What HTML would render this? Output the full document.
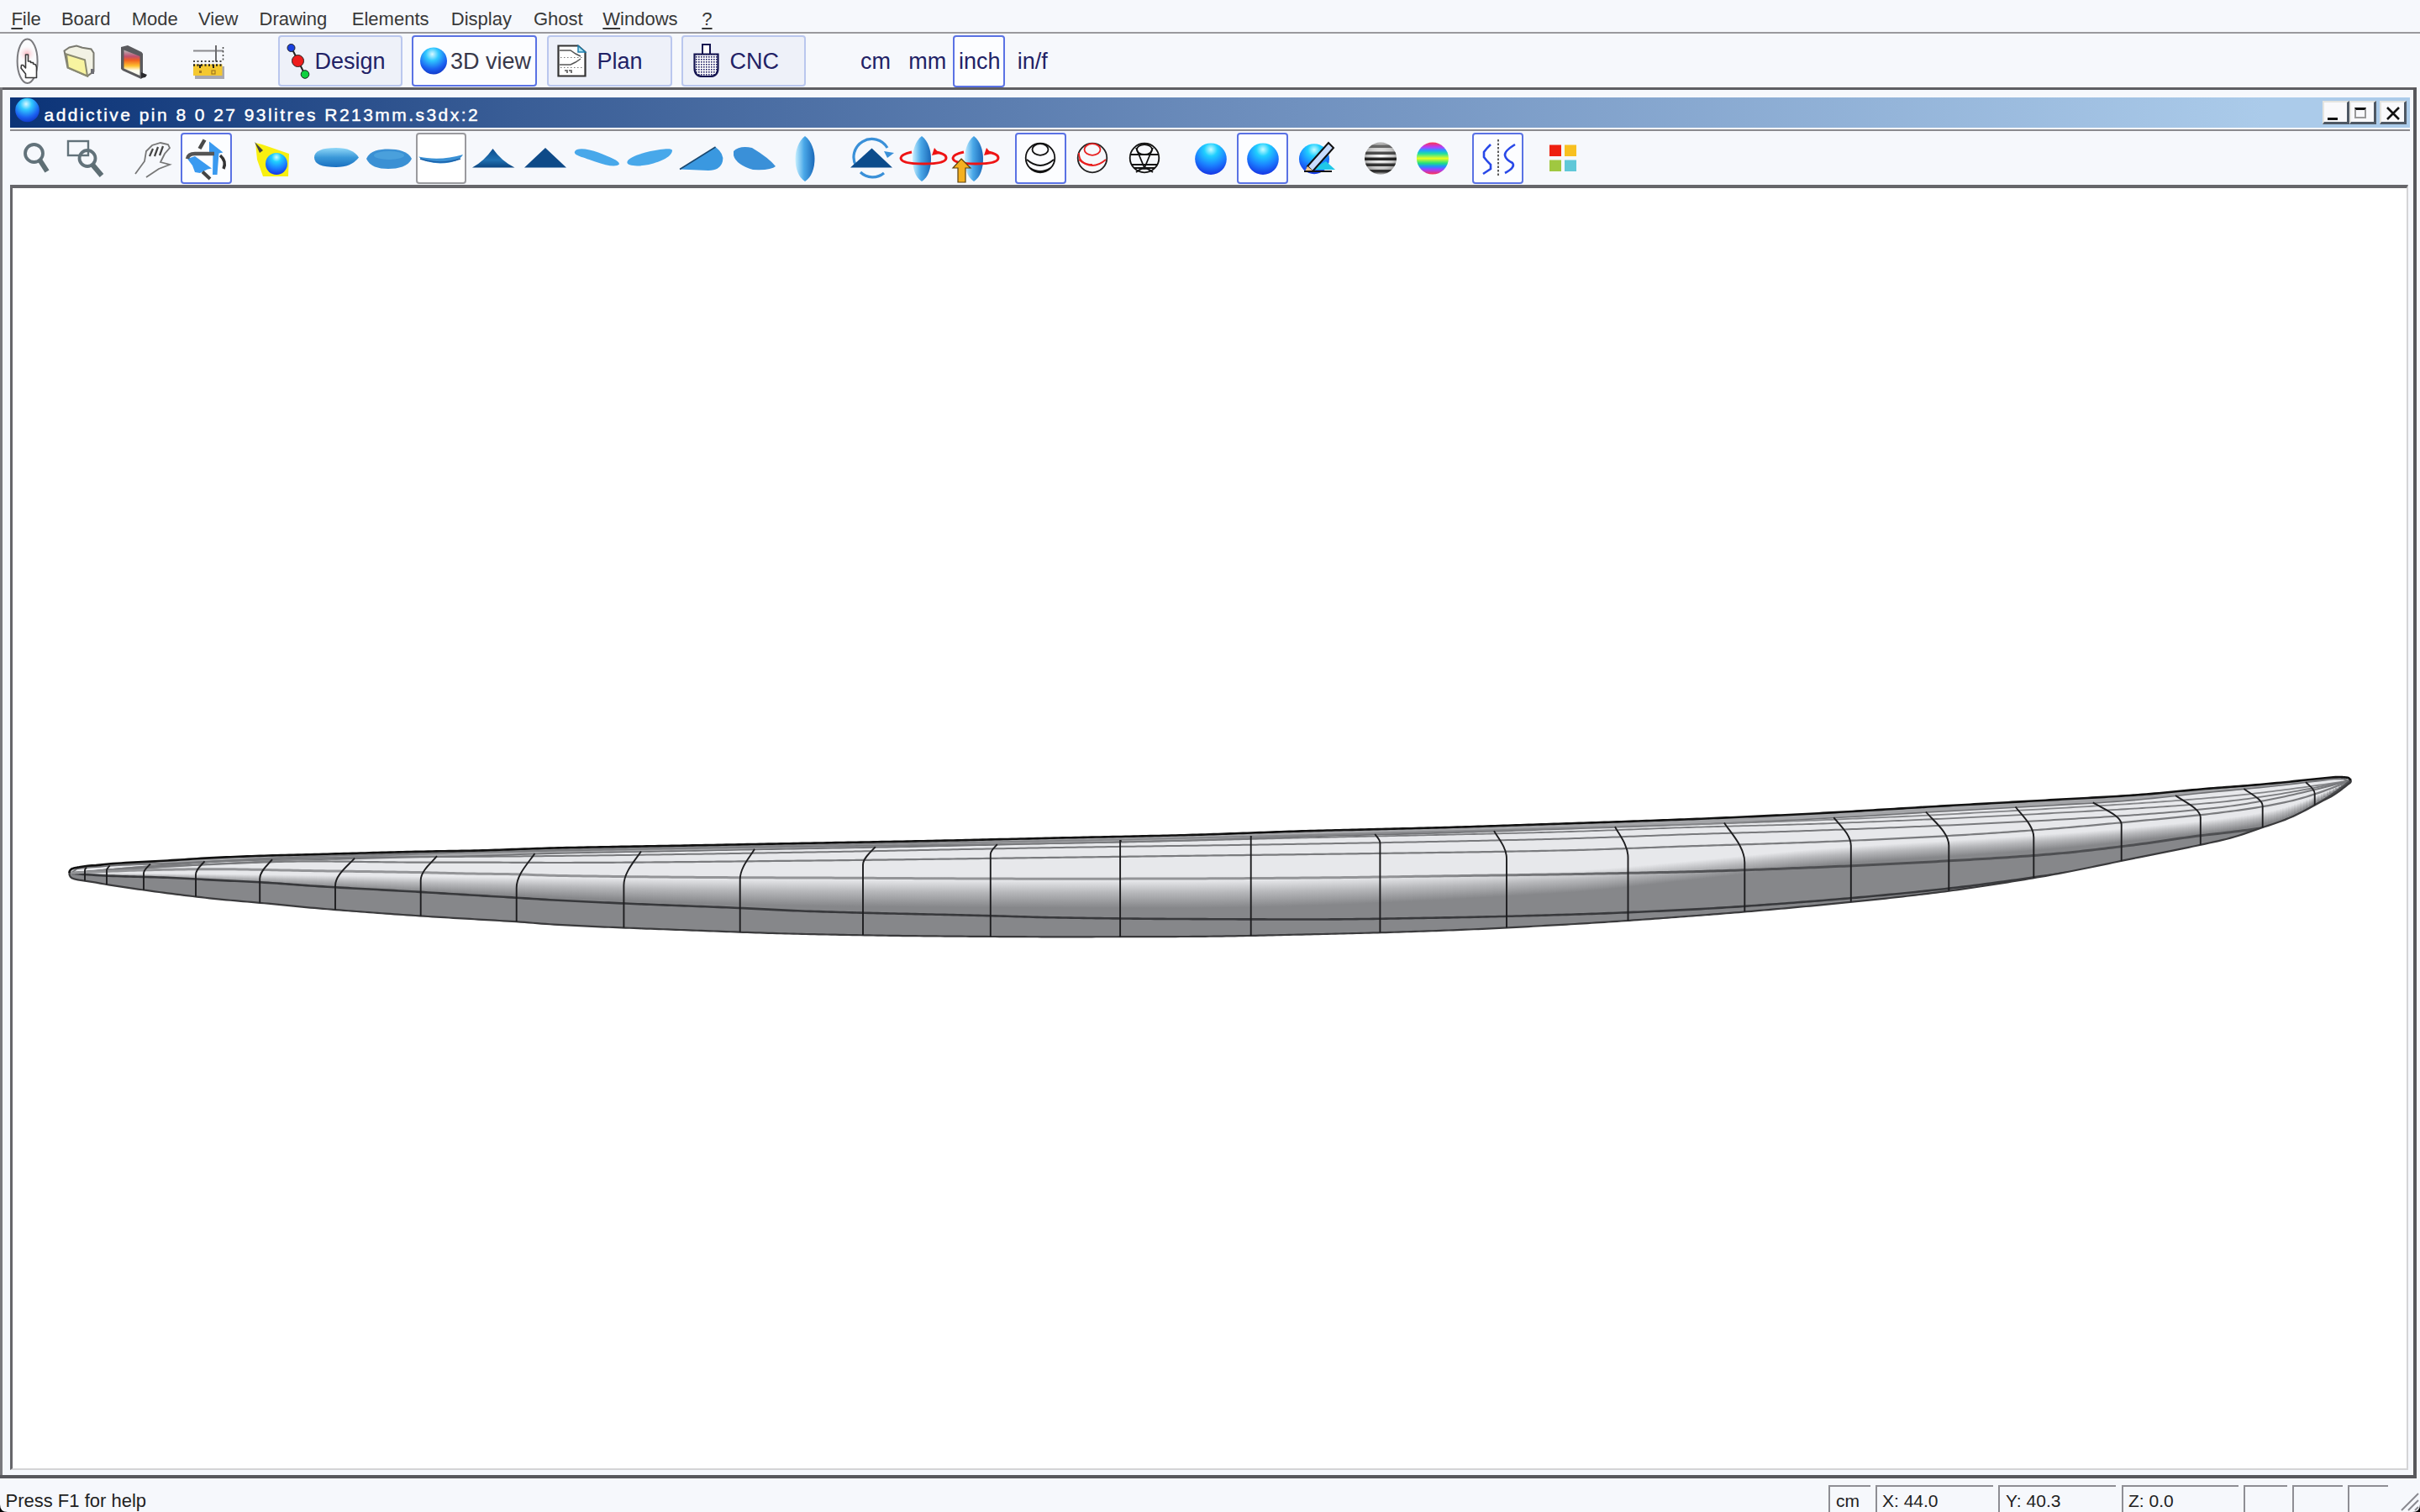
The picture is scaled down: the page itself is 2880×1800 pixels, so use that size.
<!DOCTYPE html>
<html><head><meta charset="utf-8">
<style>
html,body{margin:0;padding:0;}
body{width:2880px;height:1800px;overflow:hidden;position:relative;background:#f6f8fc;font-family:"Liberation Sans",sans-serif;}
.t{position:absolute;white-space:nowrap;}
.abs{position:absolute;}
svg.ic{position:absolute;overflow:visible;}
.menu u{text-decoration:underline;text-underline-offset:3px;text-decoration-thickness:2px;}
.tbtn{position:absolute;top:42px;height:61px;box-sizing:border-box;border:2px solid #bac7ee;border-radius:4px;background:#eef1f9;}
.tbtn.sel{border-color:#5a72e4;background:#fcfdff;}
.ibox{position:absolute;box-sizing:border-box;border:2px solid #5a72e4;border-radius:4px;background:#fcfdff;top:158px;height:61px;width:61px;}
.ibox.gray{border-color:#9a9a9e;background:#fff;}
.wbtn{position:absolute;top:120px;width:32px;height:28px;box-sizing:border-box;background:#f9f9fb;border-top:2px solid #e4e4e0;border-left:2px solid #e4e4e0;border-right:3px solid #4e5864;border-bottom:3px solid #4e5864;}
.cell{position:absolute;top:1768px;height:40px;box-sizing:border-box;border-top:2px solid #8e8e94;border-left:2px solid #8e8e94;}
.board{position:absolute;left:0;top:0;}
</style></head>
<body>
<div class="t menu" style="left:13.4px;top:12.0px;font-size:22px;line-height:22px;color:#383838;"><u>F</u>ile</div>
<div class="t menu" style="left:72.9px;top:12.0px;font-size:22px;line-height:22px;color:#383838;">Board</div>
<div class="t menu" style="left:156.8px;top:12.0px;font-size:22px;line-height:22px;color:#383838;">Mode</div>
<div class="t menu" style="left:236.0px;top:12.0px;font-size:22px;line-height:22px;color:#383838;">View</div>
<div class="t menu" style="left:308.5px;top:12.0px;font-size:22px;line-height:22px;color:#383838;">Drawing</div>
<div class="t menu" style="left:418.8px;top:12.0px;font-size:22px;line-height:22px;color:#383838;">Elements</div>
<div class="t menu" style="left:536.8px;top:12.0px;font-size:22px;line-height:22px;color:#383838;">Display</div>
<div class="t menu" style="left:635.0px;top:12.0px;font-size:22px;line-height:22px;color:#383838;">Ghost</div>
<div class="t menu" style="left:717.3px;top:12.0px;font-size:22px;line-height:22px;color:#383838;"><u>W</u>indows</div>
<div class="t menu" style="left:835.3px;top:12.0px;font-size:22px;line-height:22px;color:#383838;"><u>?</u></div>

<div class="abs" style="left:0;top:38px;width:2880px;height:2px;background:#9a9a9e"></div>

<!-- top toolbar icons -->
<svg class="ic" style="left:0;top:0" width="300" height="104" viewBox="0 0 300 104">
  <defs>
    <radialGradient id="pinkglow" cx="0.5" cy="0.5" r="0.5"><stop offset="0" stop-color="#f8b8c0"/><stop offset="1" stop-color="#fbe4e8" stop-opacity="0"/></radialGradient>
    <linearGradient id="flop" x1="0" y1="0" x2="0" y2="1"><stop offset="0" stop-color="#b8b8b8"/><stop offset="0.25" stop-color="#c05070"/><stop offset="0.4" stop-color="#f06020"/><stop offset="0.62" stop-color="#ffc030"/><stop offset="0.8" stop-color="#fffff0"/><stop offset="1" stop-color="#f4f4ea"/></linearGradient>
  </defs>
  <ellipse cx="32.6" cy="72.7" rx="12" ry="26.2" fill="#fbfbfd" stroke="#7a7a7e" stroke-width="2"/>
  <ellipse cx="32" cy="64" rx="10" ry="9" fill="url(#pinkglow)"/>
  <path d="M30.5,65 L33.5,65 L33.5,73 L36.5,73 L36.5,74.5 L39.5,74.5 L39.5,76 L42.5,77 L43.5,80 L43.5,92.5 L30.5,92.5 L30.5,88 L25,81 L25.5,77.5 L27.5,77.5 L30.5,81 Z" fill="#fff" stroke="#3a3a3a" stroke-width="1.6" stroke-linejoin="round"/>
  <path d="M76.5,60.5 L82.5,56.5 L91,54.5 L98,56.8 L108.5,58.5 L111.5,63 L111.5,85 L104,90.5 L80.5,80.5 Z" fill="#f2f2e4" stroke="#7a7a70" stroke-width="2"/>
  <path d="M79,64.5 L101,71.3 L104,90.5 L81,80.5 Z" fill="#f8f4a0" stroke="#8a8a70" stroke-width="2"/>
  <rect x="108" y="82" width="4" height="6" fill="#6e6e74"/>
  <path d="M144,56 L152,54 L168.5,62 L170,64 L170,92 L168,94 L146,84 L144,82 Z" fill="#5a5a5e"/>
  <path d="M147.5,59.5 L166.5,67 L166.5,90 L147.5,81.5 Z" fill="url(#flop)"/>
  <path d="M168,86 L175,89 L173,92 L168,93 Z" fill="#2a2a2e"/>
  <line x1="230" y1="60.5" x2="266" y2="60.5" stroke="#8a8a8e" stroke-width="2"/>
  <line x1="257" y1="54" x2="257" y2="73.5" stroke="#6a6a6e" stroke-width="2"/>
  <line x1="230" y1="73" x2="266" y2="73" stroke="#444" stroke-width="2" stroke-dasharray="2 2.5"/>
  <line x1="265.5" y1="56" x2="265.5" y2="73" stroke="#444" stroke-width="1.5" stroke-dasharray="2 2.5"/>
  <rect x="232" y="79" width="35" height="15" fill="#a8a8b0"/>
  <rect x="230" y="76.5" width="34.5" height="13.5" fill="#f4c830"/>
  <line x1="230" y1="77.5" x2="265" y2="77.5" stroke="#222" stroke-width="2.5" stroke-dasharray="2 2.5"/>
  <line x1="238" y1="77" x2="238" y2="81" stroke="#222" stroke-width="2"/><line x1="254" y1="77" x2="254" y2="81" stroke="#222" stroke-width="2"/>
  <rect x="237" y="84" width="3" height="3" fill="#a07820"/><rect x="252" y="84" width="4" height="4" fill="none" stroke="#a07820" stroke-width="1.2"/>
</svg>
<!-- mode buttons -->
<div class="tbtn" style="left:331px;width:148px"></div>
<div class="tbtn sel" style="left:490px;width:149px"></div>
<div class="tbtn" style="left:651px;width:149px"></div>
<div class="tbtn" style="left:811px;width:148px"></div>
<svg class="ic" style="left:338px;top:48px" width="34" height="50" viewBox="0 0 34 50">
  <line x1="9" y1="9" x2="25" y2="41" stroke="#222" stroke-width="2"/>
  <circle cx="8.5" cy="9" r="4.5" fill="#1a40e0" stroke="#222" stroke-width="1"/>
  <circle cx="16.5" cy="24.5" r="7" fill="#ee1c1c" stroke="#222" stroke-width="1"/>
  <circle cx="25" cy="40.5" r="4.8" fill="#10d040" stroke="#222" stroke-width="1"/>
</svg>
<svg class="ic" style="left:499px;top:56px" width="34" height="34" viewBox="0 0 34 34">
  <defs><radialGradient id="sph" cx="0.45" cy="0.25" r="0.8"><stop offset="0" stop-color="#d8f8ff"/><stop offset="0.3" stop-color="#30c8ff"/><stop offset="0.7" stop-color="#1a60f0"/><stop offset="1" stop-color="#1030c0"/></radialGradient></defs>
  <circle cx="17" cy="16.5" r="16" fill="url(#sph)"/>
</svg>
<svg class="ic" style="left:663px;top:53px" width="36" height="40" viewBox="0 0 36 40">
  <path d="M1.5,1.5 L25,1.5 L33.5,9 L33.5,37.5 L1.5,37.5 Z" fill="#fff" stroke="#333" stroke-width="2.2"/>
  <path d="M25,1.5 L33.5,9 L25,9 Z" fill="#a8e0f0" stroke="#2080b0" stroke-width="1.5"/>
  <path d="M3,7 L16,7 L22,11 L28,14 M3,24 L16,24 L22,21 L28,17" stroke="#555" stroke-width="1.5" fill="none"/>
  <path d="M4,15.5 L30,15.5 M4,27.5 L30,27.5" stroke="#777" stroke-width="1.2" stroke-dasharray="1.5 2.5" fill="none"/>
  <path d="M9,31 L12,31 L12,34 M14,31 L17,31 L17,34" stroke="#555" stroke-width="1.6" fill="none"/>
</svg>
<svg class="ic" style="left:825px;top:52px" width="32" height="41" viewBox="0 0 32 41">
  <defs><pattern id="dots" width="3" height="3" patternUnits="userSpaceOnUse"><rect width="3" height="3" fill="#fff"/><rect width="1.6" height="1.6" fill="#222266"/></pattern></defs>
  <rect x="11" y="1" width="9" height="12" fill="#fff" stroke="#141450" stroke-width="2"/>
  <path d="M1.5,12.5 L29.5,12.5 L29.5,29 Q29.5,39 20,39 L11,39 Q1.5,39 1.5,29 Z" fill="url(#dots)" stroke="#141450" stroke-width="2.2"/>
</svg>
<div class="t" style="left:374.5px;top:59.6px;font-size:27px;line-height:27px;color:#222266">Design</div>
<div class="t" style="left:536px;top:59.6px;font-size:27px;line-height:27px;color:#38384a">3D view</div>
<div class="t" style="left:710.5px;top:59.6px;font-size:27px;line-height:27px;color:#222266">Plan</div>
<div class="t" style="left:868.5px;top:59.6px;font-size:27px;line-height:27px;color:#222266">CNC</div>
<!-- units -->
<div class="abs" style="left:1134px;top:42px;width:62px;height:62px;box-sizing:border-box;border:2px solid #5a72e4;border-radius:4px;background:#fcfdff"></div>
<div class="t" style="left:1024px;top:59.6px;font-size:27px;line-height:27px;color:#222266">cm</div>
<div class="t" style="left:1081.3px;top:59.6px;font-size:27px;line-height:27px;color:#222266">mm</div>
<div class="t" style="left:1141px;top:59.6px;font-size:27px;line-height:27px;color:#222266">inch</div>
<div class="t" style="left:1210.8px;top:59.6px;font-size:27px;line-height:27px;color:#222266">in/f</div>

<div class="abs" style="left:0;top:104px;width:2876px;height:3px;background:#5e5e62"></div>

<!-- MDI frame -->
<div class="abs" style="left:0;top:104px;width:3px;height:1656px;background:#7a7a7e"></div>
<div class="abs" style="left:2872px;top:104px;width:4px;height:1656px;background:#58585c"></div>
<div class="abs" style="left:0;top:1756px;width:2876px;height:4px;background:#58585c"></div>
<!-- title bar -->
<div class="abs" style="left:12px;top:116px;width:2856px;height:36px;background:linear-gradient(to right,#0b3377 0%,#395d96 21%,#6c8dbc 51%,#abcbea 94%,#abcbea 100%)"></div>
<svg class="ic" style="left:17px;top:116px" width="32" height="32" viewBox="0 0 32 32">
  <circle cx="15.5" cy="15" r="14.3" fill="url(#sph)"/>
</svg>
<div class="t" id="title" style="left:52.5px;top:125.7px;font-size:21px;line-height:21px;color:#fff;-webkit-text-stroke:0.45px #fff;letter-spacing:2.45px">addictive pin 8 0 27 93litres R213mm.s3dx:2</div>
<div class="wbtn" style="left:2764px"><div class="abs" style="left:4px;top:18px;width:12px;height:3px;background:#111"></div></div>
<div class="wbtn" style="left:2796px"><div class="abs" style="left:4px;top:6px;width:14px;height:13px;box-sizing:border-box;border:2px solid #999;border-top:3px solid #111"></div></div>
<div class="wbtn" style="left:2832px"><svg class="ic" style="left:5px;top:4px" width="18" height="18" viewBox="0 0 18 18"><path d="M2,2 L16,16 M16,2 L2,16" stroke="#111" stroke-width="2.6"/></svg></div>
<div class="abs" style="left:12px;top:154px;width:2856px;height:2px;background:#8a8a8e"></div>

<!-- icon toolbar -->
<div class="ibox" style="left:215px"></div>
<div class="ibox gray" style="left:495px;width:60px"></div>
<div class="ibox" style="left:1208px"></div>
<div class="ibox" style="left:1472px"></div>
<div class="ibox" style="left:1752px"></div>
<svg class="ic" style="left:0;top:0" width="2000" height="230" viewBox="0 0 2000 230">
<defs>
  <radialGradient id="sph2" cx="0.5" cy="0.2" r="0.85"><stop offset="0" stop-color="#c8fcff"/><stop offset="0.25" stop-color="#20d0ff"/><stop offset="0.6" stop-color="#1a80ff"/><stop offset="1" stop-color="#1528e0"/></radialGradient>
  <linearGradient id="lensv" x1="0" y1="0" x2="1" y2="0"><stop offset="0" stop-color="#c8f0ff"/><stop offset="0.45" stop-color="#4aa8e8"/><stop offset="1" stop-color="#1a68b8"/></linearGradient>
  <linearGradient id="lensh" x1="0" y1="0" x2="0" y2="1"><stop offset="0" stop-color="#90d8f8"/><stop offset="0.5" stop-color="#3a98d8"/><stop offset="1" stop-color="#1a70c0"/></linearGradient>
  <linearGradient id="tri" x1="0" y1="0" x2="0" y2="1"><stop offset="0" stop-color="#0c4c8c"/><stop offset="0.6" stop-color="#2070b0"/><stop offset="1" stop-color="#0a4480"/></linearGradient>
  <linearGradient id="rainbow" x1="0" y1="0" x2="0" y2="1"><stop offset="0" stop-color="#ff3050"/><stop offset="0.15" stop-color="#b040ff"/><stop offset="0.25" stop-color="#20a0ff"/><stop offset="0.35" stop-color="#20e0a0"/><stop offset="0.5" stop-color="#e8ff20"/><stop offset="0.65" stop-color="#20e080"/><stop offset="0.75" stop-color="#2090ff"/><stop offset="0.85" stop-color="#a040ff"/><stop offset="1" stop-color="#ff3050"/></linearGradient>
  <clipPath id="cs1"><circle cx="1643" cy="188.6" r="19"/></clipPath><radialGradient id="gsph" cx="0.5" cy="0.45" r="0.55"><stop offset="0" stop-color="#ffffff"/><stop offset="0.6" stop-color="#c8c8c8"/><stop offset="1" stop-color="#707070"/></radialGradient>
</defs>
<!-- magnifier -->
<circle cx="40.5" cy="182.5" r="10.5" fill="none" stroke="#62727a" stroke-width="3.8"/>
<line x1="47" y1="190" x2="56" y2="204" stroke="#5e6e74" stroke-width="6"/>
<!-- zoom rect -->
<rect x="81" y="168" width="24" height="17" fill="none" stroke="#62727a" stroke-width="2.4"/>
<circle cx="104" cy="188.5" r="9.5" fill="none" stroke="#62727a" stroke-width="3.8"/>
<line x1="110" y1="196" x2="121" y2="209" stroke="#5e6e74" stroke-width="6"/>
<!-- hand -->
<path d="M161,207 L172,192 L174,180 L181,173 L191,170 L200,172 L202,176 L196,183 L191,193 L202,196 L189,201 L174,211" fill="none" stroke="#777" stroke-width="1.8"/>
<path d="M182,177 L178,186 M188,175 L184,186 M194,174 L190,185" stroke="#444" stroke-width="2.2"/>
<!-- rotate -->
<path d="M249,168.5 L265.5,181.5 L260.5,182.5 L258.5,208 L253,208 L253.5,183 L249,182.5 Z" fill="#3a9af0"/>
<path d="M223,189 L232,186 L252,200.5 L247,201.5 L238,206 L232,205 L229,197 Z" fill="#3a9af0"/>
<path d="M243.5,166.5 L237.5,177" stroke="#4a4a4a" stroke-width="4.5"/>
<path d="M223,189 Q224,183 232,183 L255,183" fill="none" stroke="#555" stroke-width="4.5"/>
<path d="M262,185 Q270,192 266,201" fill="none" stroke="#333" stroke-width="3.5"/>
<path d="M241,204.5 L250,213" stroke="#444" stroke-width="4"/>
<!-- light -->
<path d="M304,170 L312,172 L344,183 L343,210 L313,210 L306,190 Z" fill="#f8f010"/>
<path d="M303,169 L313,179 L309,182 Z" fill="#444"/>
<circle cx="329" cy="195" r="13" fill="url(#sph2)"/>
<!-- ellipses -->
<path d="M374,187.5 Q374,176 400,176 Q420,176 427,187.5 Q418,199 400,199 Q374,199 374,187.5 Z" fill="url(#lensh)"/>
<path d="M436,189 C440,179 452,177.5 462,177.5 C474,177.5 486,180 490,189 C486,198 474,201 462,201 C450,201 440,198 436,189 Z" fill="#3a90d4"/><ellipse cx="463" cy="185" rx="18" ry="5" fill="#5ab0e4" opacity="0.5"/>
<!-- crescent in gray box -->
<path d="M498,186.5 Q524,192 551,184 Q546,194 524,194.5 Q506,194 498,186.5 Z" fill="#3a90d4"/><path d="M500,189 Q524,197 548,189" fill="none" stroke="#1a60a8" stroke-width="1.5"/>
<!-- triangles -->
<path d="M562,199.5 Q576,192 586.5,177 Q597,192 612.5,199.5 Z" fill="url(#tri)"/>
<path d="M624,199.5 L649,176 L674,199.5 Z" fill="#0e4a88"/>
<!-- tilted ellipses -->
<path d="M684,180.5 C686,175 700,177 712,181.5 C726,187 737,191 737,195.5 C734,199 722,197.5 710,193 C694,187 682,185 684,180.5 Z" fill="#48a8ea"/>
<path d="M746.5,192.5 C748,187 762,183 774,180 C788,177 800,176 800,179 C800,186 788,192 772,196 C756,199 745,197 746.5,192.5 Z" fill="#48a8ea"/>
<!-- wedge -->
<path d="M809,201.5 L851.5,175 Q862,183 860,192 Q857,203 843,203 Z" fill="#3a98e0"/>
<path d="M809,201.5 L851.5,175" stroke="#1a4870" stroke-width="1.5"/>
<!-- blob -->
<path d="M873,180 Q880,173 895,176 Q915,188 923,198 Q918,203 896,202 Q876,196 873,185 Z" fill="#3a90d8"/>
<!-- vertical lens -->
<path d="M958,162 C966,168 969.5,180 969.5,189 C969.5,200 966,211 958,216 C950,211 946.5,200 946.5,189 C946.5,180 950,168 958,162 Z" fill="url(#lensv)"/>
<!-- rotate triangle -->
<path d="M1019,198 A21,21 0 0 1 1056,176" fill="none" stroke="#3a90d8" stroke-width="3.2"/>
<path d="M1052,206 A21,21 0 0 1 1024,205" fill="none" stroke="#3a90d8" stroke-width="3.2"/>
<path d="M1052,180 L1064,182 L1056,188 Z" fill="#3a90d8"/>
<path d="M1012,199.5 L1037.5,176.5 L1062,199.5 Z" fill="#0c4c8c"/>
<!-- lens + red ring 1 -->
<path d="M1097,162 C1105,168 1108,180 1108,189 C1108,200 1105,211 1097,216 C1089,211 1086,200 1086,189 C1086,180 1089,168 1097,162 Z" fill="url(#lensv)"/>
<path d="M1085,181 Q1072,184 1072,188 Q1072,195 1099,195 Q1126,195 1126,188 Q1126,183 1113,181" fill="none" stroke="#ee1414" stroke-width="3"/>
<path d="M1112,176 L1118,183 L1109,185 Z" fill="#ee1414"/>
<!-- lens + red ring 2 + arrow -->
<path d="M1159,162 C1167,168 1170,180 1170,189 C1170,200 1167,211 1159,216 C1151,211 1148,200 1148,189 C1148,180 1151,168 1159,162 Z" fill="url(#lensv)"/>
<path d="M1147,181 Q1134,184 1134,188 Q1134,195 1161,195 Q1188,195 1188,188 Q1188,183 1175,181" fill="none" stroke="#ee1414" stroke-width="3"/>
<path d="M1174,176 L1180,183 L1171,185 Z" fill="#ee1414"/>
<path d="M1144,189 L1155,200 L1149,200 L1149,217 L1140,217 L1140,200 L1134,200 Z" fill="#f4b020" stroke="#5a4010" stroke-width="1.2"/>
<!-- sphere line icons -->
<g fill="none" stroke="#111" stroke-width="1.8">
  <circle cx="1238" cy="188" r="17.3"/>
  <ellipse cx="1238" cy="178" rx="9.5" ry="6.8"/>
  <path d="M1222,190 Q1238,204 1254,190"/>
  <path d="M1226,200 Q1238,208 1250,200"/>
</g>
<g fill="none" stroke-width="1.8">
  <circle cx="1300" cy="188" r="17.3" stroke="#222"/>
  <ellipse cx="1300" cy="178" rx="9.5" ry="6.8" stroke="#e82020"/>
  <path d="M1284,190 Q1300,204 1316,190" stroke="#e82020"/>
  <path d="M1284,182 Q1284,196 1300,196" stroke="#e82020"/>
</g>
<g fill="none" stroke="#111" stroke-width="1.8">
  <circle cx="1362" cy="188" r="17.3"/>
  <ellipse cx="1362" cy="178" rx="9" ry="6"/>
  <path d="M1346,184 L1378,184 M1347,196 L1377,196 M1352,176 L1362,200 L1372,176 M1350,200 L1374,200 M1352,205 Q1362,196 1372,205"/>
</g>
<!-- blue spheres -->
<circle cx="1441" cy="189.2" r="18.8" fill="url(#sph2)"/>
<circle cx="1503" cy="189.2" r="18.8" fill="url(#sph2)"/>
<circle cx="1564" cy="189.2" r="18" fill="url(#sph2)"/>
<path d="M1560,202 L1589,202 L1578,192 Z" fill="#20c8e8"/>
<path d="M1556,198 L1581,170 L1587,176 L1562,204 Z" fill="#c8dcff" stroke="#111" stroke-width="2"/>
<path d="M1553,204 L1556,198 L1562,203 Z" fill="#f8c890"/>
<line x1="1552" y1="204" x2="1585" y2="204" stroke="#111" stroke-width="2.2"/>
<!-- striped sphere -->
<g clip-path="url(#cs1)">
  <rect x="1620" y="168" width="46" height="42" fill="url(#gsph)"/>
  <rect x="1620" y="172.5" width="46" height="3.5" fill="#555" opacity="0.85"/>
  <rect x="1620" y="180.5" width="46" height="3.5" fill="#333" opacity="0.85"/>
  <rect x="1620" y="187.5" width="46" height="3.5" fill="#111" opacity="0.9"/>
  <rect x="1620" y="194.5" width="46" height="3.5" fill="#222" opacity="0.9"/>
  <rect x="1620" y="202" width="46" height="3.5" fill="#222" opacity="0.9"/>
</g>
<circle cx="1704.9" cy="188.6" r="19" fill="url(#rainbow)"/>
<!-- S icon -->
<path d="M1774,172 L1770,176 L1766,181 L1766,187 L1770,192 L1774,196 L1774,201 L1768,205 L1765,207" fill="none" stroke="#2848e8" stroke-width="2.6"/>
<line x1="1783" y1="166" x2="1783" y2="211" stroke="#333" stroke-width="1.6" stroke-dasharray="2.5 2"/>
<path d="M1803,172 Q1790,180 1791,185 Q1792,190 1800,194 Q1804,199 1791,206" fill="none" stroke="#2848e8" stroke-width="2.6"/>
<!-- color squares -->
<rect x="1844" y="172.5" width="14" height="13.5" fill="#ee2010"/>
<rect x="1862" y="172.5" width="14" height="13.5" fill="#f8c020"/>
<rect x="1844" y="190.5" width="14" height="13.5" fill="#a0c840"/>
<rect x="1862" y="190.5" width="14" height="13.5" fill="#60c8d8"/>
</svg>


<!-- canvas -->
<div class="abs" style="left:12px;top:220px;width:2854px;height:1530px;background:#fff;box-sizing:border-box;border-left:3px solid #66666a;border-top:4px solid #66666a;border-right:2px solid #d4d4d6;border-bottom:2px solid #d4d4d6"></div>
<svg class="board" width="2880" height="1800" viewBox="0 0 2880 1800">
<defs><clipPath id="bc"><path d="M82.30,1039.50 82.80,1037.32 83.30,1036.34 83.80,1035.70 84.30,1035.20 84.80,1034.82 85.30,1034.52 85.80,1034.28 86.30,1034.09 86.80,1033.91 87.30,1033.74 87.80,1033.59 88.30,1033.45 88.80,1033.33 89.30,1033.21 89.80,1033.10 90.30,1033.00 90.80,1032.91 91.30,1032.82 91.80,1032.73 92.30,1032.65 92.80,1032.57 93.30,1032.49 93.80,1032.41 94.30,1032.32 99.30,1031.43 104.30,1030.77 109.30,1030.42 114.30,1030.13 119.30,1029.66 124.30,1029.08 129.30,1028.54 134.30,1028.12 139.30,1027.77 144.30,1027.44 149.30,1027.14 154.30,1026.86 159.30,1026.59 164.30,1026.34 169.30,1026.09 174.30,1025.84 179.30,1025.59 184.30,1025.34 189.30,1025.07 194.30,1024.78 199.30,1024.48 204.30,1024.17 209.30,1023.84 214.30,1023.52 219.30,1023.19 224.30,1022.86 229.30,1022.53 234.30,1022.22 239.30,1021.91 244.30,1021.62 249.30,1021.34 254.30,1021.08 259.30,1020.85 264.30,1020.62 269.30,1020.40 274.30,1020.19 279.30,1019.98 284.30,1019.78 289.30,1019.59 294.30,1019.40 299.30,1019.22 304.30,1019.05 309.30,1018.88 314.30,1018.72 319.30,1018.56 324.30,1018.41 329.30,1018.26 334.30,1018.12 339.30,1017.99 344.30,1017.86 349.30,1017.73 354.30,1017.60 359.30,1017.48 364.30,1017.35 369.30,1017.22 374.30,1017.09 379.30,1016.95 384.30,1016.82 389.30,1016.68 394.30,1016.54 399.30,1016.40 404.30,1016.26 409.30,1016.12 414.30,1015.99 419.30,1015.85 424.30,1015.71 429.30,1015.57 434.30,1015.43 439.30,1015.30 444.30,1015.16 449.30,1015.03 454.30,1014.89 459.30,1014.76 464.30,1014.63 469.30,1014.51 474.30,1014.38 479.30,1014.26 484.30,1014.14 489.30,1014.02 494.30,1013.91 499.30,1013.80 504.30,1013.69 509.30,1013.59 514.30,1013.49 519.30,1013.40 524.30,1013.32 529.30,1013.24 534.30,1013.16 539.30,1013.08 544.30,1013.00 549.30,1012.91 554.30,1012.82 559.30,1012.72 564.30,1012.60 569.30,1012.47 574.30,1012.33 579.30,1012.18 584.30,1012.03 589.30,1011.86 594.30,1011.69 599.30,1011.51 604.30,1011.33 609.30,1011.15 614.30,1010.97 619.30,1010.79 624.30,1010.61 629.30,1010.43 634.30,1010.26 639.30,1010.09 644.30,1009.94 649.30,1009.79 654.30,1009.65 659.30,1009.52 664.30,1009.40 669.30,1009.28 674.30,1009.17 679.30,1009.06 684.30,1008.95 689.30,1008.85 694.30,1008.75 699.30,1008.65 704.30,1008.55 709.30,1008.46 714.30,1008.36 719.30,1008.27 724.30,1008.18 729.30,1008.09 734.30,1008.01 739.30,1007.92 744.30,1007.83 749.30,1007.75 754.30,1007.66 759.30,1007.58 764.30,1007.49 769.30,1007.41 774.30,1007.32 779.30,1007.23 784.30,1007.15 789.30,1007.06 794.30,1006.97 799.30,1006.88 804.30,1006.78 809.30,1006.69 814.30,1006.60 819.30,1006.50 824.30,1006.40 829.30,1006.31 834.30,1006.21 839.30,1006.12 844.30,1006.02 849.30,1005.93 854.30,1005.83 859.30,1005.73 864.30,1005.64 869.30,1005.54 874.30,1005.44 879.30,1005.35 884.30,1005.25 889.30,1005.16 894.30,1005.06 899.30,1004.96 904.30,1004.87 909.30,1004.77 914.30,1004.67 919.30,1004.58 924.30,1004.48 929.30,1004.39 934.30,1004.29 939.30,1004.19 944.30,1004.10 949.30,1004.00 954.30,1003.91 959.30,1003.81 964.30,1003.72 969.30,1003.62 974.30,1003.53 979.30,1003.44 984.30,1003.35 989.30,1003.25 994.30,1003.16 999.30,1003.07 1004.30,1002.98 1009.30,1002.89 1014.30,1002.80 1019.30,1002.71 1024.30,1002.62 1029.30,1002.53 1034.30,1002.43 1039.30,1002.34 1044.30,1002.25 1049.30,1002.16 1054.30,1002.07 1059.30,1001.97 1064.30,1001.88 1069.30,1001.78 1074.30,1001.69 1079.30,1001.59 1084.30,1001.49 1089.30,1001.40 1094.30,1001.30 1099.30,1001.19 1104.30,1001.09 1109.30,1000.99 1114.30,1000.88 1119.30,1000.78 1124.30,1000.67 1129.30,1000.56 1134.30,1000.45 1139.30,1000.34 1144.30,1000.22 1149.30,1000.11 1154.30,1000.00 1159.30,999.88 1164.30,999.76 1169.30,999.64 1174.30,999.53 1179.30,999.41 1184.30,999.29 1189.30,999.17 1194.30,999.05 1199.30,998.93 1204.30,998.81 1209.30,998.69 1214.30,998.57 1219.30,998.45 1224.30,998.33 1229.30,998.21 1234.30,998.09 1239.30,997.98 1244.30,997.86 1249.30,997.74 1254.30,997.63 1259.30,997.52 1264.30,997.40 1269.30,997.29 1274.30,997.18 1279.30,997.08 1284.30,996.97 1289.30,996.86 1294.30,996.76 1299.30,996.65 1304.30,996.55 1309.30,996.45 1314.30,996.34 1319.30,996.24 1324.30,996.14 1329.30,996.03 1334.30,995.93 1339.30,995.82 1344.30,995.72 1349.30,995.61 1354.30,995.50 1359.30,995.39 1364.30,995.28 1369.30,995.17 1374.30,995.06 1379.30,994.94 1384.30,994.82 1389.30,994.70 1394.30,994.57 1399.30,994.45 1404.30,994.32 1409.30,994.19 1414.30,994.05 1419.30,993.91 1424.30,993.76 1429.30,993.60 1434.30,993.44 1439.30,993.28 1444.30,993.12 1449.30,992.94 1454.30,992.77 1459.30,992.60 1464.30,992.42 1469.30,992.24 1474.30,992.06 1479.30,991.87 1484.30,991.69 1489.30,991.51 1494.30,991.32 1499.30,991.14 1504.30,990.96 1509.30,990.77 1514.30,990.59 1519.30,990.42 1524.30,990.24 1529.30,990.07 1534.30,989.90 1539.30,989.74 1544.30,989.58 1549.30,989.42 1554.30,989.27 1559.30,989.12 1564.30,988.98 1569.30,988.84 1574.30,988.70 1579.30,988.57 1584.30,988.44 1589.30,988.32 1594.30,988.19 1599.30,988.07 1604.30,987.95 1609.30,987.83 1614.30,987.71 1619.30,987.59 1624.30,987.47 1629.30,987.36 1634.30,987.24 1639.30,987.13 1644.30,987.01 1649.30,986.90 1654.30,986.78 1659.30,986.66 1664.30,986.54 1669.30,986.42 1674.30,986.30 1679.30,986.18 1684.30,986.05 1689.30,985.92 1694.30,985.79 1699.30,985.66 1704.30,985.53 1709.30,985.39 1714.30,985.24 1719.30,985.10 1724.30,984.95 1729.30,984.80 1734.30,984.65 1739.30,984.50 1744.30,984.35 1749.30,984.19 1754.30,984.03 1759.30,983.87 1764.30,983.71 1769.30,983.55 1774.30,983.39 1779.30,983.22 1784.30,983.06 1789.30,982.89 1794.30,982.72 1799.30,982.56 1804.30,982.39 1809.30,982.22 1814.30,982.05 1819.30,981.88 1824.30,981.71 1829.30,981.54 1834.30,981.37 1839.30,981.20 1844.30,981.03 1849.30,980.86 1854.30,980.69 1859.30,980.52 1864.30,980.36 1869.30,980.19 1874.30,980.02 1879.30,979.85 1884.30,979.69 1889.30,979.52 1894.30,979.36 1899.30,979.19 1904.30,979.02 1909.30,978.86 1914.30,978.69 1919.30,978.52 1924.30,978.35 1929.30,978.18 1934.30,978.01 1939.30,977.84 1944.30,977.67 1949.30,977.50 1954.30,977.32 1959.30,977.15 1964.30,976.97 1969.30,976.79 1974.30,976.61 1979.30,976.42 1984.30,976.24 1989.30,976.05 1994.30,975.86 1999.30,975.67 2004.30,975.48 2009.30,975.28 2014.30,975.08 2019.30,974.88 2024.30,974.68 2029.30,974.47 2034.30,974.26 2039.30,974.05 2044.30,973.84 2049.30,973.63 2054.30,973.41 2059.30,973.19 2064.30,972.97 2069.30,972.75 2074.30,972.53 2079.30,972.30 2084.30,972.08 2089.30,971.85 2094.30,971.61 2099.30,971.38 2104.30,971.15 2109.30,970.91 2114.30,970.67 2119.30,970.43 2124.30,970.19 2129.30,969.94 2134.30,969.69 2139.30,969.45 2144.30,969.20 2149.30,968.94 2154.30,968.69 2159.30,968.44 2164.30,968.18 2169.30,967.91 2174.30,967.65 2179.30,967.37 2184.30,967.10 2189.30,966.82 2194.30,966.53 2199.30,966.25 2204.30,965.95 2209.30,965.66 2214.30,965.37 2219.30,965.07 2224.30,964.77 2229.30,964.47 2234.30,964.17 2239.30,963.86 2244.30,963.56 2249.30,963.25 2254.30,962.95 2259.30,962.64 2264.30,962.34 2269.30,962.04 2274.30,961.73 2279.30,961.43 2284.30,961.13 2289.30,960.84 2294.30,960.54 2299.30,960.25 2304.30,959.96 2309.30,959.67 2314.30,959.39 2319.30,959.10 2324.30,958.82 2329.30,958.54 2334.30,958.26 2339.30,957.98 2344.30,957.70 2349.30,957.42 2354.30,957.14 2359.30,956.86 2364.30,956.58 2369.30,956.31 2374.30,956.03 2379.30,955.75 2384.30,955.47 2389.30,955.20 2394.30,954.92 2399.30,954.64 2404.30,954.36 2409.30,954.09 2414.30,953.81 2419.30,953.53 2424.30,953.25 2429.30,952.97 2434.30,952.69 2439.30,952.41 2444.30,952.12 2449.30,951.84 2454.30,951.56 2459.30,951.28 2464.30,951.01 2469.30,950.73 2474.30,950.47 2479.30,950.20 2484.30,949.93 2489.30,949.66 2494.30,949.39 2499.30,949.11 2504.30,948.83 2509.30,948.54 2514.30,948.25 2519.30,947.95 2524.30,947.64 2529.30,947.32 2534.30,946.99 2539.30,946.65 2544.30,946.29 2549.30,945.91 2554.30,945.50 2559.30,945.08 2564.30,944.65 2569.30,944.20 2574.30,943.73 2579.30,943.27 2584.30,942.79 2589.30,942.31 2594.30,941.83 2599.30,941.35 2604.30,940.88 2609.30,940.41 2614.30,939.95 2619.30,939.51 2624.30,939.07 2629.30,938.66 2634.30,938.26 2639.30,937.88 2644.30,937.51 2649.30,937.14 2654.30,936.77 2659.30,936.40 2664.30,936.02 2669.30,935.62 2674.30,935.21 2679.30,934.80 2684.30,934.38 2689.30,933.95 2694.30,933.51 2699.30,933.06 2704.30,932.61 2709.30,932.15 2714.30,931.67 2719.30,931.19 2724.30,930.68 2729.30,930.15 2734.30,929.60 2739.30,929.07 2744.30,928.56 2749.30,928.05 2754.30,927.55 2759.30,927.07 2764.30,926.55 2769.30,925.98 2774.30,925.45 2779.30,925.09 2784.30,925.01 2786.00,925.05 2786.50,925.08 2787.00,925.10 2787.50,925.13 2788.00,925.16 2788.50,925.19 2789.00,925.23 2789.50,925.27 2790.00,925.31 2790.50,925.36 2791.00,925.41 2791.50,925.47 2792.00,925.53 2792.50,925.59 2793.00,925.65 2793.50,925.73 2794.00,925.80 2794.50,925.94 2795.00,926.20 2795.50,926.55 2796.00,926.98 2796.50,927.46 2797.00,927.97 2797.50,928.49 2798.00,929.00 L2798.00,929.00 2797.50,931.00 2797.00,931.71 2796.50,932.22 2796.00,932.59 2795.50,932.89 2795.00,933.20 2794.50,933.58 2794.00,934.00 2793.50,934.41 2793.00,934.81 2792.50,935.21 2792.00,935.61 2791.50,936.01 2791.00,936.40 2790.50,936.80 2790.00,937.19 2789.50,937.58 2789.00,937.97 2788.50,938.36 2788.00,938.74 2787.50,939.13 2787.00,939.52 2786.50,939.90 2786.00,940.28 2784.30,941.55 2779.30,945.12 2774.30,948.22 2769.30,950.86 2764.30,953.34 2759.30,955.98 2754.30,958.75 2749.30,961.46 2744.30,964.19 2739.30,966.85 2734.30,969.33 2729.30,971.65 2724.30,973.84 2719.30,975.88 2714.30,977.77 2709.30,979.55 2704.30,981.25 2699.30,982.91 2694.30,984.56 2689.30,986.25 2684.30,987.97 2679.30,989.70 2674.30,991.41 2669.30,993.08 2664.30,994.70 2659.30,996.23 2654.30,997.65 2649.30,998.96 2644.30,1000.18 2639.30,1001.33 2634.30,1002.44 2629.30,1003.51 2624.30,1004.58 2619.30,1005.65 2614.30,1006.72 2609.30,1007.78 2604.30,1008.82 2599.30,1009.85 2594.30,1010.87 2589.30,1011.88 2584.30,1012.88 2579.30,1013.88 2574.30,1014.87 2569.30,1015.87 2564.30,1016.86 2559.30,1017.85 2554.30,1018.84 2549.30,1019.83 2544.30,1020.83 2539.30,1021.84 2534.30,1022.86 2529.30,1023.88 2524.30,1024.92 2519.30,1025.96 2514.30,1027.00 2509.30,1028.05 2504.30,1029.10 2499.30,1030.14 2494.30,1031.19 2489.30,1032.22 2484.30,1033.26 2479.30,1034.28 2474.30,1035.29 2469.30,1036.29 2464.30,1037.28 2459.30,1038.24 2454.30,1039.20 2449.30,1040.13 2444.30,1041.04 2439.30,1041.92 2434.30,1042.80 2429.30,1043.66 2424.30,1044.52 2419.30,1045.38 2414.30,1046.22 2409.30,1047.06 2404.30,1047.89 2399.30,1048.72 2394.30,1049.53 2389.30,1050.34 2384.30,1051.14 2379.30,1051.93 2374.30,1052.71 2369.30,1053.48 2364.30,1054.24 2359.30,1054.99 2354.30,1055.74 2349.30,1056.47 2344.30,1057.19 2339.30,1057.90 2334.30,1058.60 2329.30,1059.29 2324.30,1059.97 2319.30,1060.64 2314.30,1061.29 2309.30,1061.94 2304.30,1062.57 2299.30,1063.19 2294.30,1063.81 2289.30,1064.41 2284.30,1065.01 2279.30,1065.60 2274.30,1066.19 2269.30,1066.76 2264.30,1067.33 2259.30,1067.89 2254.30,1068.45 2249.30,1069.00 2244.30,1069.54 2239.30,1070.08 2234.30,1070.61 2229.30,1071.14 2224.30,1071.66 2219.30,1072.18 2214.30,1072.69 2209.30,1073.19 2204.30,1073.70 2199.30,1074.20 2194.30,1074.69 2189.30,1075.18 2184.30,1075.67 2179.30,1076.15 2174.30,1076.64 2169.30,1077.12 2164.30,1077.59 2159.30,1078.07 2154.30,1078.54 2149.30,1079.01 2144.30,1079.47 2139.30,1079.93 2134.30,1080.39 2129.30,1080.84 2124.30,1081.30 2119.30,1081.74 2114.30,1082.19 2109.30,1082.63 2104.30,1083.07 2099.30,1083.50 2094.30,1083.93 2089.30,1084.36 2084.30,1084.78 2079.30,1085.20 2074.30,1085.62 2069.30,1086.04 2064.30,1086.45 2059.30,1086.86 2054.30,1087.26 2049.30,1087.66 2044.30,1088.06 2039.30,1088.46 2034.30,1088.85 2029.30,1089.24 2024.30,1089.62 2019.30,1090.01 2014.30,1090.39 2009.30,1090.76 2004.30,1091.14 1999.30,1091.51 1994.30,1091.88 1989.30,1092.25 1984.30,1092.62 1979.30,1092.98 1974.30,1093.34 1969.30,1093.70 1964.30,1094.06 1959.30,1094.42 1954.30,1094.77 1949.30,1095.12 1944.30,1095.47 1939.30,1095.81 1934.30,1096.15 1929.30,1096.49 1924.30,1096.83 1919.30,1097.16 1914.30,1097.49 1909.30,1097.81 1904.30,1098.13 1899.30,1098.45 1894.30,1098.76 1889.30,1099.07 1884.30,1099.38 1879.30,1099.68 1874.30,1099.98 1869.30,1100.27 1864.30,1100.56 1859.30,1100.84 1854.30,1101.12 1849.30,1101.40 1844.30,1101.68 1839.30,1101.95 1834.30,1102.23 1829.30,1102.50 1824.30,1102.77 1819.30,1103.04 1814.30,1103.31 1809.30,1103.57 1804.30,1103.83 1799.30,1104.09 1794.30,1104.34 1789.30,1104.60 1784.30,1104.84 1779.30,1105.09 1774.30,1105.33 1769.30,1105.57 1764.30,1105.80 1759.30,1106.04 1754.30,1106.26 1749.30,1106.48 1744.30,1106.70 1739.30,1106.91 1734.30,1107.12 1729.30,1107.32 1724.30,1107.52 1719.30,1107.71 1714.30,1107.90 1709.30,1108.08 1704.30,1108.26 1699.30,1108.43 1694.30,1108.60 1689.30,1108.77 1684.30,1108.94 1679.30,1109.10 1674.30,1109.26 1669.30,1109.42 1664.30,1109.58 1659.30,1109.73 1654.30,1109.88 1649.30,1110.03 1644.30,1110.17 1639.30,1110.32 1634.30,1110.46 1629.30,1110.60 1624.30,1110.73 1619.30,1110.87 1614.30,1111.00 1609.30,1111.13 1604.30,1111.26 1599.30,1111.38 1594.30,1111.51 1589.30,1111.63 1584.30,1111.75 1579.30,1111.86 1574.30,1111.98 1569.30,1112.09 1564.30,1112.21 1559.30,1112.32 1554.30,1112.43 1549.30,1112.54 1544.30,1112.65 1539.30,1112.77 1534.30,1112.88 1529.30,1113.00 1524.30,1113.11 1519.30,1113.23 1514.30,1113.34 1509.30,1113.46 1504.30,1113.57 1499.30,1113.68 1494.30,1113.79 1489.30,1113.89 1484.30,1114.00 1479.30,1114.10 1474.30,1114.19 1469.30,1114.29 1464.30,1114.38 1459.30,1114.46 1454.30,1114.54 1449.30,1114.62 1444.30,1114.69 1439.30,1114.75 1434.30,1114.81 1429.30,1114.86 1424.30,1114.91 1419.30,1114.94 1414.30,1114.98 1409.30,1115.00 1404.30,1115.02 1399.30,1115.03 1394.30,1115.05 1389.30,1115.07 1384.30,1115.08 1379.30,1115.10 1374.30,1115.11 1369.30,1115.13 1364.30,1115.14 1359.30,1115.16 1354.30,1115.17 1349.30,1115.18 1344.30,1115.20 1339.30,1115.21 1334.30,1115.22 1329.30,1115.23 1324.30,1115.24 1319.30,1115.25 1314.30,1115.25 1309.30,1115.26 1304.30,1115.27 1299.30,1115.28 1294.30,1115.28 1289.30,1115.29 1284.30,1115.29 1279.30,1115.29 1274.30,1115.30 1269.30,1115.30 1264.30,1115.30 1259.30,1115.30 1254.30,1115.30 1249.30,1115.29 1244.30,1115.29 1239.30,1115.28 1234.30,1115.26 1229.30,1115.25 1224.30,1115.23 1219.30,1115.21 1214.30,1115.19 1209.30,1115.16 1204.30,1115.14 1199.30,1115.11 1194.30,1115.08 1189.30,1115.05 1184.30,1115.01 1179.30,1114.98 1174.30,1114.94 1169.30,1114.91 1164.30,1114.87 1159.30,1114.83 1154.30,1114.79 1149.30,1114.75 1144.30,1114.71 1139.30,1114.66 1134.30,1114.62 1129.30,1114.58 1124.30,1114.54 1119.30,1114.49 1114.30,1114.45 1109.30,1114.40 1104.30,1114.36 1099.30,1114.31 1094.30,1114.26 1089.30,1114.21 1084.30,1114.15 1079.30,1114.09 1074.30,1114.03 1069.30,1113.96 1064.30,1113.90 1059.30,1113.83 1054.30,1113.75 1049.30,1113.68 1044.30,1113.60 1039.30,1113.52 1034.30,1113.44 1029.30,1113.36 1024.30,1113.27 1019.30,1113.18 1014.30,1113.09 1009.30,1113.00 1004.30,1112.90 999.30,1112.81 994.30,1112.71 989.30,1112.61 984.30,1112.51 979.30,1112.41 974.30,1112.30 969.30,1112.20 964.30,1112.09 959.30,1111.98 954.30,1111.87 949.30,1111.75 944.30,1111.63 939.30,1111.50 934.30,1111.37 929.30,1111.23 924.30,1111.08 919.30,1110.94 914.30,1110.78 909.30,1110.63 904.30,1110.47 899.30,1110.30 894.30,1110.14 889.30,1109.97 884.30,1109.79 879.30,1109.62 874.30,1109.44 869.30,1109.26 864.30,1109.08 859.30,1108.90 854.30,1108.71 849.30,1108.52 844.30,1108.34 839.30,1108.15 834.30,1107.96 829.30,1107.77 824.30,1107.58 819.30,1107.39 814.30,1107.21 809.30,1107.02 804.30,1106.83 799.30,1106.65 794.30,1106.46 789.30,1106.27 784.30,1106.09 779.30,1105.90 774.30,1105.72 769.30,1105.53 764.30,1105.34 759.30,1105.15 754.30,1104.96 749.30,1104.76 744.30,1104.56 739.30,1104.36 734.30,1104.16 729.30,1103.95 724.30,1103.74 719.30,1103.53 714.30,1103.31 709.30,1103.09 704.30,1102.86 699.30,1102.63 694.30,1102.39 689.30,1102.15 684.30,1101.90 679.30,1101.65 674.30,1101.39 669.30,1101.12 664.30,1100.84 659.30,1100.56 654.30,1100.25 649.30,1099.90 644.30,1099.53 639.30,1099.14 634.30,1098.73 629.30,1098.33 624.30,1097.94 619.30,1097.57 614.30,1097.22 609.30,1096.90 604.30,1096.58 599.30,1096.28 594.30,1095.98 589.30,1095.69 584.30,1095.40 579.30,1095.12 574.30,1094.83 569.30,1094.54 564.30,1094.25 559.30,1093.96 554.30,1093.66 549.30,1093.37 544.30,1093.08 539.30,1092.79 534.30,1092.50 529.30,1092.21 524.30,1091.91 519.30,1091.61 514.30,1091.31 509.30,1091.00 504.30,1090.68 499.30,1090.35 494.30,1090.02 489.30,1089.69 484.30,1089.35 479.30,1089.01 474.30,1088.66 469.30,1088.31 464.30,1087.96 459.30,1087.61 454.30,1087.25 449.30,1086.88 444.30,1086.52 439.30,1086.15 434.30,1085.77 429.30,1085.40 424.30,1085.01 419.30,1084.63 414.30,1084.24 409.30,1083.84 404.30,1083.45 399.30,1083.04 394.30,1082.64 389.30,1082.23 384.30,1081.81 379.30,1081.39 374.30,1080.97 369.30,1080.54 364.30,1080.10 359.30,1079.63 354.30,1079.16 349.30,1078.67 344.30,1078.18 339.30,1077.68 334.30,1077.18 329.30,1076.69 324.30,1076.20 319.30,1075.72 314.30,1075.26 309.30,1074.81 304.30,1074.37 299.30,1073.93 294.30,1073.50 289.30,1073.07 284.30,1072.64 279.30,1072.20 274.30,1071.76 269.30,1071.30 264.30,1070.82 259.30,1070.33 254.30,1069.82 249.30,1069.30 244.30,1068.75 239.30,1068.19 234.30,1067.61 229.30,1067.02 224.30,1066.42 219.30,1065.81 214.30,1065.19 209.30,1064.56 204.30,1063.93 199.30,1063.29 194.30,1062.64 189.30,1061.99 184.30,1061.32 179.30,1060.65 174.30,1059.96 169.30,1059.27 164.30,1058.57 159.30,1057.85 154.30,1057.13 149.30,1056.40 144.30,1055.66 139.30,1054.91 134.30,1054.15 129.30,1053.38 124.30,1052.53 119.30,1051.60 114.30,1050.70 109.30,1049.84 104.30,1049.04 99.30,1048.41 94.30,1047.68 93.80,1047.59 93.30,1047.51 92.80,1047.42 92.30,1047.33 91.80,1047.23 91.30,1047.13 90.80,1047.03 90.30,1046.92 89.80,1046.79 89.30,1046.66 88.80,1046.52 88.30,1046.37 87.80,1046.21 87.30,1046.03 86.80,1045.84 86.30,1045.63 85.80,1045.41 85.30,1045.13 84.80,1044.78 84.30,1044.33 83.80,1043.76 83.30,1043.02 82.80,1041.92 82.30,1039.50Z"/></clipPath>
<linearGradient id="g0" gradientUnits="userSpaceOnUse" x1="0" y1="1039.5" x2="0" y2="1040.5"><stop offset="0" stop-color="#e7e8eb"/><stop offset=".45" stop-color="#b6b7ba"/><stop offset="1" stop-color="#86878a"/></linearGradient>
<linearGradient id="g1" gradientUnits="userSpaceOnUse" x1="0" y1="1039.5" x2="0" y2="1040.5"><stop offset="0" stop-color="#e7e8eb"/><stop offset=".45" stop-color="#b6b7ba"/><stop offset="1" stop-color="#86878a"/></linearGradient>
<linearGradient id="g2" gradientUnits="userSpaceOnUse" x1="0" y1="1039.6" x2="0" y2="1040.6"><stop offset="0" stop-color="#e7e8eb"/><stop offset=".45" stop-color="#b6b7ba"/><stop offset="1" stop-color="#86878a"/></linearGradient>
<linearGradient id="g3" gradientUnits="userSpaceOnUse" x1="0" y1="1039.6" x2="0" y2="1041.1"><stop offset="0" stop-color="#e7e8eb"/><stop offset=".45" stop-color="#b6b7ba"/><stop offset="1" stop-color="#86878a"/></linearGradient>
<linearGradient id="g4" gradientUnits="userSpaceOnUse" x1="0" y1="1039.6" x2="0" y2="1041.5"><stop offset="0" stop-color="#e7e8eb"/><stop offset=".45" stop-color="#b6b7ba"/><stop offset="1" stop-color="#86878a"/></linearGradient>
<linearGradient id="g5" gradientUnits="userSpaceOnUse" x1="0" y1="1039.6" x2="0" y2="1042.0"><stop offset="0" stop-color="#e7e8eb"/><stop offset=".45" stop-color="#b6b7ba"/><stop offset="1" stop-color="#86878a"/></linearGradient>
<linearGradient id="g6" gradientUnits="userSpaceOnUse" x1="0" y1="1039.7" x2="0" y2="1042.4"><stop offset="0" stop-color="#e7e8eb"/><stop offset=".45" stop-color="#b6b7ba"/><stop offset="1" stop-color="#86878a"/></linearGradient>
<linearGradient id="g7" gradientUnits="userSpaceOnUse" x1="0" y1="1039.7" x2="0" y2="1042.9"><stop offset="0" stop-color="#e7e8eb"/><stop offset=".45" stop-color="#b6b7ba"/><stop offset="1" stop-color="#86878a"/></linearGradient>
<linearGradient id="g8" gradientUnits="userSpaceOnUse" x1="0" y1="1039.7" x2="0" y2="1043.3"><stop offset="0" stop-color="#e7e8eb"/><stop offset=".45" stop-color="#b6b7ba"/><stop offset="1" stop-color="#86878a"/></linearGradient>
<linearGradient id="g9" gradientUnits="userSpaceOnUse" x1="0" y1="1039.8" x2="0" y2="1043.7"><stop offset="0" stop-color="#e7e8eb"/><stop offset=".45" stop-color="#b6b7ba"/><stop offset="1" stop-color="#86878a"/></linearGradient>
<linearGradient id="g10" gradientUnits="userSpaceOnUse" x1="0" y1="1039.8" x2="0" y2="1044.2"><stop offset="0" stop-color="#e7e8eb"/><stop offset=".45" stop-color="#b6b7ba"/><stop offset="1" stop-color="#86878a"/></linearGradient>
<linearGradient id="g11" gradientUnits="userSpaceOnUse" x1="0" y1="1039.9" x2="0" y2="1044.6"><stop offset="0" stop-color="#e7e8eb"/><stop offset=".45" stop-color="#b6b7ba"/><stop offset="1" stop-color="#86878a"/></linearGradient>
<linearGradient id="g12" gradientUnits="userSpaceOnUse" x1="0" y1="1039.9" x2="0" y2="1045.1"><stop offset="0" stop-color="#e7e8eb"/><stop offset=".45" stop-color="#b6b7ba"/><stop offset="1" stop-color="#86878a"/></linearGradient>
<linearGradient id="g13" gradientUnits="userSpaceOnUse" x1="0" y1="1039.9" x2="0" y2="1045.5"><stop offset="0" stop-color="#e7e8eb"/><stop offset=".45" stop-color="#b6b7ba"/><stop offset="1" stop-color="#86878a"/></linearGradient>
<linearGradient id="g14" gradientUnits="userSpaceOnUse" x1="0" y1="1040.0" x2="0" y2="1045.9"><stop offset="0" stop-color="#e7e8eb"/><stop offset=".45" stop-color="#b6b7ba"/><stop offset="1" stop-color="#86878a"/></linearGradient>
<linearGradient id="g15" gradientUnits="userSpaceOnUse" x1="0" y1="1040.0" x2="0" y2="1046.3"><stop offset="0" stop-color="#e7e8eb"/><stop offset=".45" stop-color="#b6b7ba"/><stop offset="1" stop-color="#86878a"/></linearGradient>
<linearGradient id="g16" gradientUnits="userSpaceOnUse" x1="0" y1="1040.1" x2="0" y2="1046.8"><stop offset="0" stop-color="#e7e8eb"/><stop offset=".45" stop-color="#b6b7ba"/><stop offset="1" stop-color="#86878a"/></linearGradient>
<linearGradient id="g17" gradientUnits="userSpaceOnUse" x1="0" y1="1040.1" x2="0" y2="1047.2"><stop offset="0" stop-color="#e7e8eb"/><stop offset=".45" stop-color="#b6b7ba"/><stop offset="1" stop-color="#86878a"/></linearGradient>
<linearGradient id="g18" gradientUnits="userSpaceOnUse" x1="0" y1="1040.2" x2="0" y2="1047.6"><stop offset="0" stop-color="#e7e8eb"/><stop offset=".45" stop-color="#b6b7ba"/><stop offset="1" stop-color="#86878a"/></linearGradient>
<linearGradient id="g19" gradientUnits="userSpaceOnUse" x1="0" y1="1040.3" x2="0" y2="1048.0"><stop offset="0" stop-color="#e7e8eb"/><stop offset=".45" stop-color="#b6b7ba"/><stop offset="1" stop-color="#86878a"/></linearGradient>
<linearGradient id="g20" gradientUnits="userSpaceOnUse" x1="0" y1="1040.3" x2="0" y2="1048.5"><stop offset="0" stop-color="#e7e8eb"/><stop offset=".45" stop-color="#b6b7ba"/><stop offset="1" stop-color="#86878a"/></linearGradient>
<linearGradient id="g21" gradientUnits="userSpaceOnUse" x1="0" y1="1040.4" x2="0" y2="1048.9"><stop offset="0" stop-color="#e7e8eb"/><stop offset=".45" stop-color="#b6b7ba"/><stop offset="1" stop-color="#86878a"/></linearGradient>
<linearGradient id="g22" gradientUnits="userSpaceOnUse" x1="0" y1="1040.5" x2="0" y2="1049.3"><stop offset="0" stop-color="#e7e8eb"/><stop offset=".45" stop-color="#b6b7ba"/><stop offset="1" stop-color="#86878a"/></linearGradient>
<linearGradient id="g23" gradientUnits="userSpaceOnUse" x1="0" y1="1040.6" x2="0" y2="1049.7"><stop offset="0" stop-color="#e7e8eb"/><stop offset=".45" stop-color="#b6b7ba"/><stop offset="1" stop-color="#86878a"/></linearGradient>
<linearGradient id="g24" gradientUnits="userSpaceOnUse" x1="0" y1="1040.6" x2="0" y2="1050.2"><stop offset="0" stop-color="#e7e8eb"/><stop offset=".45" stop-color="#b6b7ba"/><stop offset="1" stop-color="#86878a"/></linearGradient>
<linearGradient id="g25" gradientUnits="userSpaceOnUse" x1="0" y1="1040.7" x2="0" y2="1050.6"><stop offset="0" stop-color="#e7e8eb"/><stop offset=".45" stop-color="#b6b7ba"/><stop offset="1" stop-color="#86878a"/></linearGradient>
<linearGradient id="g26" gradientUnits="userSpaceOnUse" x1="0" y1="1040.8" x2="0" y2="1051.0"><stop offset="0" stop-color="#e7e8eb"/><stop offset=".45" stop-color="#b6b7ba"/><stop offset="1" stop-color="#86878a"/></linearGradient>
<linearGradient id="g27" gradientUnits="userSpaceOnUse" x1="0" y1="1040.9" x2="0" y2="1051.5"><stop offset="0" stop-color="#e7e8eb"/><stop offset=".45" stop-color="#b6b7ba"/><stop offset="1" stop-color="#86878a"/></linearGradient>
<linearGradient id="g28" gradientUnits="userSpaceOnUse" x1="0" y1="1041.0" x2="0" y2="1051.9"><stop offset="0" stop-color="#e7e8eb"/><stop offset=".45" stop-color="#b6b7ba"/><stop offset="1" stop-color="#86878a"/></linearGradient>
<linearGradient id="g29" gradientUnits="userSpaceOnUse" x1="0" y1="1041.1" x2="0" y2="1052.3"><stop offset="0" stop-color="#e7e8eb"/><stop offset=".45" stop-color="#b6b7ba"/><stop offset="1" stop-color="#86878a"/></linearGradient>
<linearGradient id="g30" gradientUnits="userSpaceOnUse" x1="0" y1="1041.2" x2="0" y2="1052.7"><stop offset="0" stop-color="#e7e8eb"/><stop offset=".45" stop-color="#b6b7ba"/><stop offset="1" stop-color="#86878a"/></linearGradient>
<linearGradient id="g31" gradientUnits="userSpaceOnUse" x1="0" y1="1041.3" x2="0" y2="1053.2"><stop offset="0" stop-color="#e7e8eb"/><stop offset=".45" stop-color="#b6b7ba"/><stop offset="1" stop-color="#86878a"/></linearGradient>
<linearGradient id="g32" gradientUnits="userSpaceOnUse" x1="0" y1="1041.4" x2="0" y2="1053.6"><stop offset="0" stop-color="#e7e8eb"/><stop offset=".45" stop-color="#b6b7ba"/><stop offset="1" stop-color="#86878a"/></linearGradient>
<linearGradient id="g33" gradientUnits="userSpaceOnUse" x1="0" y1="1041.5" x2="0" y2="1054.0"><stop offset="0" stop-color="#e7e8eb"/><stop offset=".45" stop-color="#b6b7ba"/><stop offset="1" stop-color="#86878a"/></linearGradient>
<linearGradient id="g34" gradientUnits="userSpaceOnUse" x1="0" y1="1041.6" x2="0" y2="1054.4"><stop offset="0" stop-color="#e7e8eb"/><stop offset=".45" stop-color="#b6b7ba"/><stop offset="1" stop-color="#86878a"/></linearGradient>
<linearGradient id="g35" gradientUnits="userSpaceOnUse" x1="0" y1="1041.7" x2="0" y2="1054.8"><stop offset="0" stop-color="#e7e8eb"/><stop offset=".45" stop-color="#b6b7ba"/><stop offset="1" stop-color="#86878a"/></linearGradient>
<linearGradient id="g36" gradientUnits="userSpaceOnUse" x1="0" y1="1041.8" x2="0" y2="1055.3"><stop offset="0" stop-color="#e7e8eb"/><stop offset=".45" stop-color="#b6b7ba"/><stop offset="1" stop-color="#86878a"/></linearGradient>
<linearGradient id="g37" gradientUnits="userSpaceOnUse" x1="0" y1="1041.9" x2="0" y2="1055.7"><stop offset="0" stop-color="#e7e8eb"/><stop offset=".45" stop-color="#b6b7ba"/><stop offset="1" stop-color="#86878a"/></linearGradient>
<linearGradient id="g38" gradientUnits="userSpaceOnUse" x1="0" y1="1042.0" x2="0" y2="1056.1"><stop offset="0" stop-color="#e7e8eb"/><stop offset=".45" stop-color="#b6b7ba"/><stop offset="1" stop-color="#86878a"/></linearGradient>
<linearGradient id="g39" gradientUnits="userSpaceOnUse" x1="0" y1="1042.1" x2="0" y2="1056.5"><stop offset="0" stop-color="#e7e8eb"/><stop offset=".45" stop-color="#b6b7ba"/><stop offset="1" stop-color="#86878a"/></linearGradient>
<linearGradient id="g40" gradientUnits="userSpaceOnUse" x1="0" y1="1042.2" x2="0" y2="1056.9"><stop offset="0" stop-color="#e7e8eb"/><stop offset=".45" stop-color="#b6b7ba"/><stop offset="1" stop-color="#86878a"/></linearGradient>
<linearGradient id="g41" gradientUnits="userSpaceOnUse" x1="0" y1="1042.3" x2="0" y2="1057.3"><stop offset="0" stop-color="#e7e8eb"/><stop offset=".45" stop-color="#b6b7ba"/><stop offset="1" stop-color="#86878a"/></linearGradient>
<linearGradient id="g42" gradientUnits="userSpaceOnUse" x1="0" y1="1042.4" x2="0" y2="1057.7"><stop offset="0" stop-color="#e7e8eb"/><stop offset=".45" stop-color="#b6b7ba"/><stop offset="1" stop-color="#86878a"/></linearGradient>
<linearGradient id="g43" gradientUnits="userSpaceOnUse" x1="0" y1="1042.5" x2="0" y2="1058.1"><stop offset="0" stop-color="#e7e8eb"/><stop offset=".45" stop-color="#b6b7ba"/><stop offset="1" stop-color="#86878a"/></linearGradient>
<linearGradient id="g44" gradientUnits="userSpaceOnUse" x1="0" y1="1042.6" x2="0" y2="1058.5"><stop offset="0" stop-color="#e7e8eb"/><stop offset=".45" stop-color="#b6b7ba"/><stop offset="1" stop-color="#86878a"/></linearGradient>
<linearGradient id="g45" gradientUnits="userSpaceOnUse" x1="0" y1="1042.7" x2="0" y2="1058.9"><stop offset="0" stop-color="#e7e8eb"/><stop offset=".45" stop-color="#b6b7ba"/><stop offset="1" stop-color="#86878a"/></linearGradient>
<linearGradient id="g46" gradientUnits="userSpaceOnUse" x1="0" y1="1042.8" x2="0" y2="1059.3"><stop offset="0" stop-color="#e7e8eb"/><stop offset=".45" stop-color="#b6b7ba"/><stop offset="1" stop-color="#86878a"/></linearGradient>
<linearGradient id="g47" gradientUnits="userSpaceOnUse" x1="0" y1="1042.9" x2="0" y2="1059.6"><stop offset="0" stop-color="#e7e8eb"/><stop offset=".45" stop-color="#b6b7ba"/><stop offset="1" stop-color="#86878a"/></linearGradient>
<linearGradient id="g48" gradientUnits="userSpaceOnUse" x1="0" y1="1043.0" x2="0" y2="1060.0"><stop offset="0" stop-color="#e7e8eb"/><stop offset=".45" stop-color="#b6b7ba"/><stop offset="1" stop-color="#86878a"/></linearGradient>
<linearGradient id="g49" gradientUnits="userSpaceOnUse" x1="0" y1="1043.1" x2="0" y2="1060.4"><stop offset="0" stop-color="#e7e8eb"/><stop offset=".45" stop-color="#b6b7ba"/><stop offset="1" stop-color="#86878a"/></linearGradient>
<linearGradient id="g50" gradientUnits="userSpaceOnUse" x1="0" y1="1043.2" x2="0" y2="1060.8"><stop offset="0" stop-color="#e7e8eb"/><stop offset=".45" stop-color="#b6b7ba"/><stop offset="1" stop-color="#86878a"/></linearGradient>
<linearGradient id="g51" gradientUnits="userSpaceOnUse" x1="0" y1="1043.3" x2="0" y2="1061.1"><stop offset="0" stop-color="#e7e8eb"/><stop offset=".45" stop-color="#b6b7ba"/><stop offset="1" stop-color="#86878a"/></linearGradient>
<linearGradient id="g52" gradientUnits="userSpaceOnUse" x1="0" y1="1043.4" x2="0" y2="1061.5"><stop offset="0" stop-color="#e7e8eb"/><stop offset=".45" stop-color="#b6b7ba"/><stop offset="1" stop-color="#86878a"/></linearGradient>
<linearGradient id="g53" gradientUnits="userSpaceOnUse" x1="0" y1="1043.5" x2="0" y2="1061.9"><stop offset="0" stop-color="#e7e8eb"/><stop offset=".45" stop-color="#b6b7ba"/><stop offset="1" stop-color="#86878a"/></linearGradient>
<linearGradient id="g54" gradientUnits="userSpaceOnUse" x1="0" y1="1043.6" x2="0" y2="1062.2"><stop offset="0" stop-color="#e7e8eb"/><stop offset=".45" stop-color="#b6b7ba"/><stop offset="1" stop-color="#86878a"/></linearGradient>
<linearGradient id="g55" gradientUnits="userSpaceOnUse" x1="0" y1="1043.7" x2="0" y2="1062.6"><stop offset="0" stop-color="#e7e8eb"/><stop offset=".45" stop-color="#b6b7ba"/><stop offset="1" stop-color="#86878a"/></linearGradient>
<linearGradient id="g56" gradientUnits="userSpaceOnUse" x1="0" y1="1043.8" x2="0" y2="1062.9"><stop offset="0" stop-color="#e7e8eb"/><stop offset=".45" stop-color="#b6b7ba"/><stop offset="1" stop-color="#86878a"/></linearGradient>
<linearGradient id="g57" gradientUnits="userSpaceOnUse" x1="0" y1="1043.8" x2="0" y2="1063.3"><stop offset="0" stop-color="#e7e8eb"/><stop offset=".45" stop-color="#b6b7ba"/><stop offset="1" stop-color="#86878a"/></linearGradient>
<linearGradient id="g58" gradientUnits="userSpaceOnUse" x1="0" y1="1043.9" x2="0" y2="1063.6"><stop offset="0" stop-color="#e7e8eb"/><stop offset=".45" stop-color="#b6b7ba"/><stop offset="1" stop-color="#86878a"/></linearGradient>
<linearGradient id="g59" gradientUnits="userSpaceOnUse" x1="0" y1="1044.0" x2="0" y2="1063.9"><stop offset="0" stop-color="#e7e8eb"/><stop offset=".45" stop-color="#b6b7ba"/><stop offset="1" stop-color="#86878a"/></linearGradient>
<linearGradient id="g60" gradientUnits="userSpaceOnUse" x1="0" y1="1044.1" x2="0" y2="1064.3"><stop offset="0" stop-color="#e7e8eb"/><stop offset=".45" stop-color="#b6b7ba"/><stop offset="1" stop-color="#86878a"/></linearGradient>
<linearGradient id="g61" gradientUnits="userSpaceOnUse" x1="0" y1="1044.1" x2="0" y2="1064.6"><stop offset="0" stop-color="#e7e8eb"/><stop offset=".45" stop-color="#b6b7ba"/><stop offset="1" stop-color="#86878a"/></linearGradient>
<linearGradient id="g62" gradientUnits="userSpaceOnUse" x1="0" y1="1044.2" x2="0" y2="1064.9"><stop offset="0" stop-color="#e7e8eb"/><stop offset=".45" stop-color="#b6b7ba"/><stop offset="1" stop-color="#86878a"/></linearGradient>
<linearGradient id="g63" gradientUnits="userSpaceOnUse" x1="0" y1="1044.3" x2="0" y2="1065.3"><stop offset="0" stop-color="#e7e8eb"/><stop offset=".45" stop-color="#b6b7ba"/><stop offset="1" stop-color="#86878a"/></linearGradient>
<linearGradient id="g64" gradientUnits="userSpaceOnUse" x1="0" y1="1044.3" x2="0" y2="1065.6"><stop offset="0" stop-color="#e7e8eb"/><stop offset=".45" stop-color="#b6b7ba"/><stop offset="1" stop-color="#86878a"/></linearGradient>
<linearGradient id="g65" gradientUnits="userSpaceOnUse" x1="0" y1="1044.4" x2="0" y2="1065.9"><stop offset="0" stop-color="#e7e8eb"/><stop offset=".45" stop-color="#b6b7ba"/><stop offset="1" stop-color="#86878a"/></linearGradient>
<linearGradient id="g66" gradientUnits="userSpaceOnUse" x1="0" y1="1044.5" x2="0" y2="1066.3"><stop offset="0" stop-color="#e7e8eb"/><stop offset=".45" stop-color="#b6b7ba"/><stop offset="1" stop-color="#86878a"/></linearGradient>
<linearGradient id="g67" gradientUnits="userSpaceOnUse" x1="0" y1="1044.5" x2="0" y2="1066.6"><stop offset="0" stop-color="#e7e8eb"/><stop offset=".45" stop-color="#b6b7ba"/><stop offset="1" stop-color="#86878a"/></linearGradient>
<linearGradient id="g68" gradientUnits="userSpaceOnUse" x1="0" y1="1044.6" x2="0" y2="1067.0"><stop offset="0" stop-color="#e7e8eb"/><stop offset=".45" stop-color="#b6b7ba"/><stop offset="1" stop-color="#86878a"/></linearGradient>
<linearGradient id="g69" gradientUnits="userSpaceOnUse" x1="0" y1="1044.7" x2="0" y2="1067.3"><stop offset="0" stop-color="#e7e8eb"/><stop offset=".45" stop-color="#b6b7ba"/><stop offset="1" stop-color="#86878a"/></linearGradient>
<linearGradient id="g70" gradientUnits="userSpaceOnUse" x1="0" y1="1044.7" x2="0" y2="1067.7"><stop offset="0" stop-color="#e7e8eb"/><stop offset=".45" stop-color="#b6b7ba"/><stop offset="1" stop-color="#86878a"/></linearGradient>
<linearGradient id="g71" gradientUnits="userSpaceOnUse" x1="0" y1="1044.8" x2="0" y2="1068.0"><stop offset="0" stop-color="#e7e8eb"/><stop offset=".45" stop-color="#b6b7ba"/><stop offset="1" stop-color="#86878a"/></linearGradient>
<linearGradient id="g72" gradientUnits="userSpaceOnUse" x1="0" y1="1044.9" x2="0" y2="1068.4"><stop offset="0" stop-color="#e7e8eb"/><stop offset=".45" stop-color="#b6b7ba"/><stop offset="1" stop-color="#86878a"/></linearGradient>
<linearGradient id="g73" gradientUnits="userSpaceOnUse" x1="0" y1="1044.9" x2="0" y2="1068.7"><stop offset="0" stop-color="#e7e8eb"/><stop offset=".45" stop-color="#b6b7ba"/><stop offset="1" stop-color="#86878a"/></linearGradient>
<linearGradient id="g74" gradientUnits="userSpaceOnUse" x1="0" y1="1045.0" x2="0" y2="1069.0"><stop offset="0" stop-color="#e7e8eb"/><stop offset=".45" stop-color="#b6b7ba"/><stop offset="1" stop-color="#86878a"/></linearGradient>
<linearGradient id="g75" gradientUnits="userSpaceOnUse" x1="0" y1="1045.1" x2="0" y2="1069.4"><stop offset="0" stop-color="#e7e8eb"/><stop offset=".45" stop-color="#b6b7ba"/><stop offset="1" stop-color="#86878a"/></linearGradient>
<linearGradient id="g76" gradientUnits="userSpaceOnUse" x1="0" y1="1045.1" x2="0" y2="1069.7"><stop offset="0" stop-color="#e7e8eb"/><stop offset=".45" stop-color="#b6b7ba"/><stop offset="1" stop-color="#86878a"/></linearGradient>
<linearGradient id="g77" gradientUnits="userSpaceOnUse" x1="0" y1="1045.2" x2="0" y2="1070.1"><stop offset="0" stop-color="#e7e8eb"/><stop offset=".45" stop-color="#b6b7ba"/><stop offset="1" stop-color="#86878a"/></linearGradient>
<linearGradient id="g78" gradientUnits="userSpaceOnUse" x1="0" y1="1045.2" x2="0" y2="1070.4"><stop offset="0" stop-color="#e7e8eb"/><stop offset=".45" stop-color="#b6b7ba"/><stop offset="1" stop-color="#86878a"/></linearGradient>
<linearGradient id="g79" gradientUnits="userSpaceOnUse" x1="0" y1="1045.3" x2="0" y2="1070.8"><stop offset="0" stop-color="#e7e8eb"/><stop offset=".45" stop-color="#b6b7ba"/><stop offset="1" stop-color="#86878a"/></linearGradient>
<linearGradient id="g80" gradientUnits="userSpaceOnUse" x1="0" y1="1045.4" x2="0" y2="1071.1"><stop offset="0" stop-color="#e7e8eb"/><stop offset=".45" stop-color="#b6b7ba"/><stop offset="1" stop-color="#86878a"/></linearGradient>
<linearGradient id="g81" gradientUnits="userSpaceOnUse" x1="0" y1="1045.4" x2="0" y2="1071.4"><stop offset="0" stop-color="#e7e8eb"/><stop offset=".45" stop-color="#b6b7ba"/><stop offset="1" stop-color="#86878a"/></linearGradient>
<linearGradient id="g82" gradientUnits="userSpaceOnUse" x1="0" y1="1045.5" x2="0" y2="1071.8"><stop offset="0" stop-color="#e7e8eb"/><stop offset=".45" stop-color="#b6b7ba"/><stop offset="1" stop-color="#86878a"/></linearGradient>
<linearGradient id="g83" gradientUnits="userSpaceOnUse" x1="0" y1="1045.6" x2="0" y2="1072.1"><stop offset="0" stop-color="#e7e8eb"/><stop offset=".45" stop-color="#b6b7ba"/><stop offset="1" stop-color="#86878a"/></linearGradient>
<linearGradient id="g84" gradientUnits="userSpaceOnUse" x1="0" y1="1045.6" x2="0" y2="1072.4"><stop offset="0" stop-color="#e7e8eb"/><stop offset=".45" stop-color="#b6b7ba"/><stop offset="1" stop-color="#86878a"/></linearGradient>
<linearGradient id="g85" gradientUnits="userSpaceOnUse" x1="0" y1="1045.7" x2="0" y2="1072.7"><stop offset="0" stop-color="#e7e8eb"/><stop offset=".45" stop-color="#b6b7ba"/><stop offset="1" stop-color="#86878a"/></linearGradient>
<linearGradient id="g86" gradientUnits="userSpaceOnUse" x1="0" y1="1045.7" x2="0" y2="1073.0"><stop offset="0" stop-color="#e7e8eb"/><stop offset=".45" stop-color="#b6b7ba"/><stop offset="1" stop-color="#86878a"/></linearGradient>
<linearGradient id="g87" gradientUnits="userSpaceOnUse" x1="0" y1="1045.8" x2="0" y2="1073.4"><stop offset="0" stop-color="#e7e8eb"/><stop offset=".45" stop-color="#b6b7ba"/><stop offset="1" stop-color="#86878a"/></linearGradient>
<linearGradient id="g88" gradientUnits="userSpaceOnUse" x1="0" y1="1045.8" x2="0" y2="1073.7"><stop offset="0" stop-color="#e7e8eb"/><stop offset=".45" stop-color="#b6b7ba"/><stop offset="1" stop-color="#86878a"/></linearGradient>
<linearGradient id="g89" gradientUnits="userSpaceOnUse" x1="0" y1="1045.9" x2="0" y2="1074.0"><stop offset="0" stop-color="#e7e8eb"/><stop offset=".45" stop-color="#b6b7ba"/><stop offset="1" stop-color="#86878a"/></linearGradient>
<linearGradient id="g90" gradientUnits="userSpaceOnUse" x1="0" y1="1046.0" x2="0" y2="1074.3"><stop offset="0" stop-color="#e7e8eb"/><stop offset=".45" stop-color="#b6b7ba"/><stop offset="1" stop-color="#86878a"/></linearGradient>
<linearGradient id="g91" gradientUnits="userSpaceOnUse" x1="0" y1="1046.0" x2="0" y2="1074.6"><stop offset="0" stop-color="#e7e8eb"/><stop offset=".45" stop-color="#b6b7ba"/><stop offset="1" stop-color="#86878a"/></linearGradient>
<linearGradient id="g92" gradientUnits="userSpaceOnUse" x1="0" y1="1046.1" x2="0" y2="1074.8"><stop offset="0" stop-color="#e7e8eb"/><stop offset=".45" stop-color="#b6b7ba"/><stop offset="1" stop-color="#86878a"/></linearGradient>
<linearGradient id="g93" gradientUnits="userSpaceOnUse" x1="0" y1="1046.1" x2="0" y2="1075.1"><stop offset="0" stop-color="#e7e8eb"/><stop offset=".45" stop-color="#b6b7ba"/><stop offset="1" stop-color="#86878a"/></linearGradient>
<linearGradient id="g94" gradientUnits="userSpaceOnUse" x1="0" y1="1046.2" x2="0" y2="1075.4"><stop offset="0" stop-color="#e7e8eb"/><stop offset=".45" stop-color="#b6b7ba"/><stop offset="1" stop-color="#86878a"/></linearGradient>
<linearGradient id="g95" gradientUnits="userSpaceOnUse" x1="0" y1="1046.2" x2="0" y2="1075.7"><stop offset="0" stop-color="#e7e8eb"/><stop offset=".45" stop-color="#b6b7ba"/><stop offset="1" stop-color="#86878a"/></linearGradient>
<linearGradient id="g96" gradientUnits="userSpaceOnUse" x1="0" y1="1046.3" x2="0" y2="1075.9"><stop offset="0" stop-color="#e7e8eb"/><stop offset=".45" stop-color="#b6b7ba"/><stop offset="1" stop-color="#86878a"/></linearGradient>
<linearGradient id="g97" gradientUnits="userSpaceOnUse" x1="0" y1="1046.3" x2="0" y2="1076.2"><stop offset="0" stop-color="#e7e8eb"/><stop offset=".45" stop-color="#b6b7ba"/><stop offset="1" stop-color="#86878a"/></linearGradient>
<linearGradient id="g98" gradientUnits="userSpaceOnUse" x1="0" y1="1046.4" x2="0" y2="1076.4"><stop offset="0" stop-color="#e7e8eb"/><stop offset=".45" stop-color="#b6b7ba"/><stop offset="1" stop-color="#86878a"/></linearGradient>
<linearGradient id="g99" gradientUnits="userSpaceOnUse" x1="0" y1="1046.4" x2="0" y2="1076.6"><stop offset="0" stop-color="#e7e8eb"/><stop offset=".45" stop-color="#b6b7ba"/><stop offset="1" stop-color="#86878a"/></linearGradient>
<linearGradient id="g100" gradientUnits="userSpaceOnUse" x1="0" y1="1046.5" x2="0" y2="1076.9"><stop offset="0" stop-color="#e7e8eb"/><stop offset=".45" stop-color="#b6b7ba"/><stop offset="1" stop-color="#86878a"/></linearGradient>
<linearGradient id="g101" gradientUnits="userSpaceOnUse" x1="0" y1="1046.5" x2="0" y2="1077.1"><stop offset="0" stop-color="#e7e8eb"/><stop offset=".45" stop-color="#b6b7ba"/><stop offset="1" stop-color="#86878a"/></linearGradient>
<linearGradient id="g102" gradientUnits="userSpaceOnUse" x1="0" y1="1046.6" x2="0" y2="1077.3"><stop offset="0" stop-color="#e7e8eb"/><stop offset=".45" stop-color="#b6b7ba"/><stop offset="1" stop-color="#86878a"/></linearGradient>
<linearGradient id="g103" gradientUnits="userSpaceOnUse" x1="0" y1="1046.6" x2="0" y2="1077.5"><stop offset="0" stop-color="#e7e8eb"/><stop offset=".45" stop-color="#b6b7ba"/><stop offset="1" stop-color="#86878a"/></linearGradient>
<linearGradient id="g104" gradientUnits="userSpaceOnUse" x1="0" y1="1046.6" x2="0" y2="1077.7"><stop offset="0" stop-color="#e7e8eb"/><stop offset=".45" stop-color="#b6b7ba"/><stop offset="1" stop-color="#86878a"/></linearGradient>
<linearGradient id="g105" gradientUnits="userSpaceOnUse" x1="0" y1="1046.7" x2="0" y2="1077.9"><stop offset="0" stop-color="#e7e8eb"/><stop offset=".45" stop-color="#b6b7ba"/><stop offset="1" stop-color="#86878a"/></linearGradient>
<linearGradient id="g106" gradientUnits="userSpaceOnUse" x1="0" y1="1046.7" x2="0" y2="1078.0"><stop offset="0" stop-color="#e7e8eb"/><stop offset=".45" stop-color="#b6b7ba"/><stop offset="1" stop-color="#86878a"/></linearGradient>
<linearGradient id="g107" gradientUnits="userSpaceOnUse" x1="0" y1="1046.8" x2="0" y2="1078.2"><stop offset="0" stop-color="#e7e8eb"/><stop offset=".45" stop-color="#b6b7ba"/><stop offset="1" stop-color="#86878a"/></linearGradient>
<linearGradient id="g108" gradientUnits="userSpaceOnUse" x1="0" y1="1046.8" x2="0" y2="1078.3"><stop offset="0" stop-color="#e7e8eb"/><stop offset=".45" stop-color="#b6b7ba"/><stop offset="1" stop-color="#86878a"/></linearGradient>
<linearGradient id="g109" gradientUnits="userSpaceOnUse" x1="0" y1="1046.8" x2="0" y2="1078.5"><stop offset="0" stop-color="#e7e8eb"/><stop offset=".45" stop-color="#b6b7ba"/><stop offset="1" stop-color="#86878a"/></linearGradient>
<linearGradient id="g110" gradientUnits="userSpaceOnUse" x1="0" y1="1046.9" x2="0" y2="1078.6"><stop offset="0" stop-color="#e7e8eb"/><stop offset=".45" stop-color="#b6b7ba"/><stop offset="1" stop-color="#86878a"/></linearGradient>
<linearGradient id="g111" gradientUnits="userSpaceOnUse" x1="0" y1="1046.9" x2="0" y2="1078.7"><stop offset="0" stop-color="#e7e8eb"/><stop offset=".45" stop-color="#b6b7ba"/><stop offset="1" stop-color="#86878a"/></linearGradient>
<linearGradient id="g112" gradientUnits="userSpaceOnUse" x1="0" y1="1046.9" x2="0" y2="1078.8"><stop offset="0" stop-color="#e7e8eb"/><stop offset=".45" stop-color="#b6b7ba"/><stop offset="1" stop-color="#86878a"/></linearGradient>
<linearGradient id="g113" gradientUnits="userSpaceOnUse" x1="0" y1="1047.0" x2="0" y2="1078.9"><stop offset="0" stop-color="#e7e8eb"/><stop offset=".45" stop-color="#b6b7ba"/><stop offset="1" stop-color="#86878a"/></linearGradient>
<linearGradient id="g114" gradientUnits="userSpaceOnUse" x1="0" y1="1047.0" x2="0" y2="1079.0"><stop offset="0" stop-color="#e7e8eb"/><stop offset=".45" stop-color="#b6b7ba"/><stop offset="1" stop-color="#86878a"/></linearGradient>
<linearGradient id="g115" gradientUnits="userSpaceOnUse" x1="0" y1="1047.0" x2="0" y2="1079.1"><stop offset="0" stop-color="#e7e8eb"/><stop offset=".45" stop-color="#b6b7ba"/><stop offset="1" stop-color="#86878a"/></linearGradient>
<linearGradient id="g116" gradientUnits="userSpaceOnUse" x1="0" y1="1047.1" x2="0" y2="1079.1"><stop offset="0" stop-color="#e7e8eb"/><stop offset=".45" stop-color="#b6b7ba"/><stop offset="1" stop-color="#86878a"/></linearGradient>
<linearGradient id="g117" gradientUnits="userSpaceOnUse" x1="0" y1="1047.1" x2="0" y2="1079.2"><stop offset="0" stop-color="#e7e8eb"/><stop offset=".45" stop-color="#b6b7ba"/><stop offset="1" stop-color="#86878a"/></linearGradient>
<linearGradient id="g118" gradientUnits="userSpaceOnUse" x1="0" y1="1047.1" x2="0" y2="1079.3"><stop offset="0" stop-color="#e7e8eb"/><stop offset=".45" stop-color="#b6b7ba"/><stop offset="1" stop-color="#86878a"/></linearGradient>
<linearGradient id="g119" gradientUnits="userSpaceOnUse" x1="0" y1="1047.1" x2="0" y2="1079.3"><stop offset="0" stop-color="#e7e8eb"/><stop offset=".45" stop-color="#b6b7ba"/><stop offset="1" stop-color="#86878a"/></linearGradient>
<linearGradient id="g120" gradientUnits="userSpaceOnUse" x1="0" y1="1047.2" x2="0" y2="1079.4"><stop offset="0" stop-color="#e7e8eb"/><stop offset=".45" stop-color="#b6b7ba"/><stop offset="1" stop-color="#86878a"/></linearGradient>
<linearGradient id="g121" gradientUnits="userSpaceOnUse" x1="0" y1="1047.2" x2="0" y2="1079.5"><stop offset="0" stop-color="#e7e8eb"/><stop offset=".45" stop-color="#b6b7ba"/><stop offset="1" stop-color="#86878a"/></linearGradient>
<linearGradient id="g122" gradientUnits="userSpaceOnUse" x1="0" y1="1047.2" x2="0" y2="1079.5"><stop offset="0" stop-color="#e7e8eb"/><stop offset=".45" stop-color="#b6b7ba"/><stop offset="1" stop-color="#86878a"/></linearGradient>
<linearGradient id="g123" gradientUnits="userSpaceOnUse" x1="0" y1="1047.3" x2="0" y2="1079.6"><stop offset="0" stop-color="#e7e8eb"/><stop offset=".45" stop-color="#b6b7ba"/><stop offset="1" stop-color="#86878a"/></linearGradient>
<linearGradient id="g124" gradientUnits="userSpaceOnUse" x1="0" y1="1047.3" x2="0" y2="1079.6"><stop offset="0" stop-color="#e7e8eb"/><stop offset=".45" stop-color="#b6b7ba"/><stop offset="1" stop-color="#86878a"/></linearGradient>
<linearGradient id="g125" gradientUnits="userSpaceOnUse" x1="0" y1="1047.3" x2="0" y2="1079.7"><stop offset="0" stop-color="#e7e8eb"/><stop offset=".45" stop-color="#b6b7ba"/><stop offset="1" stop-color="#86878a"/></linearGradient>
<linearGradient id="g126" gradientUnits="userSpaceOnUse" x1="0" y1="1047.3" x2="0" y2="1079.8"><stop offset="0" stop-color="#e7e8eb"/><stop offset=".45" stop-color="#b6b7ba"/><stop offset="1" stop-color="#86878a"/></linearGradient>
<linearGradient id="g127" gradientUnits="userSpaceOnUse" x1="0" y1="1047.4" x2="0" y2="1079.8"><stop offset="0" stop-color="#e7e8eb"/><stop offset=".45" stop-color="#b6b7ba"/><stop offset="1" stop-color="#86878a"/></linearGradient>
<linearGradient id="g128" gradientUnits="userSpaceOnUse" x1="0" y1="1047.4" x2="0" y2="1079.9"><stop offset="0" stop-color="#e7e8eb"/><stop offset=".45" stop-color="#b6b7ba"/><stop offset="1" stop-color="#86878a"/></linearGradient>
<linearGradient id="g129" gradientUnits="userSpaceOnUse" x1="0" y1="1047.4" x2="0" y2="1079.9"><stop offset="0" stop-color="#e7e8eb"/><stop offset=".45" stop-color="#b6b7ba"/><stop offset="1" stop-color="#86878a"/></linearGradient>
<linearGradient id="g130" gradientUnits="userSpaceOnUse" x1="0" y1="1047.5" x2="0" y2="1080.0"><stop offset="0" stop-color="#e7e8eb"/><stop offset=".45" stop-color="#b6b7ba"/><stop offset="1" stop-color="#86878a"/></linearGradient>
<linearGradient id="g131" gradientUnits="userSpaceOnUse" x1="0" y1="1047.5" x2="0" y2="1080.0"><stop offset="0" stop-color="#e7e8eb"/><stop offset=".45" stop-color="#b6b7ba"/><stop offset="1" stop-color="#86878a"/></linearGradient>
<linearGradient id="g132" gradientUnits="userSpaceOnUse" x1="0" y1="1047.5" x2="0" y2="1080.1"><stop offset="0" stop-color="#e7e8eb"/><stop offset=".45" stop-color="#b6b7ba"/><stop offset="1" stop-color="#86878a"/></linearGradient>
<linearGradient id="g133" gradientUnits="userSpaceOnUse" x1="0" y1="1047.5" x2="0" y2="1080.1"><stop offset="0" stop-color="#e7e8eb"/><stop offset=".45" stop-color="#b6b7ba"/><stop offset="1" stop-color="#86878a"/></linearGradient>
<linearGradient id="g134" gradientUnits="userSpaceOnUse" x1="0" y1="1047.6" x2="0" y2="1080.2"><stop offset="0" stop-color="#e7e8eb"/><stop offset=".45" stop-color="#b6b7ba"/><stop offset="1" stop-color="#86878a"/></linearGradient>
<linearGradient id="g135" gradientUnits="userSpaceOnUse" x1="0" y1="1047.6" x2="0" y2="1080.2"><stop offset="0" stop-color="#e7e8eb"/><stop offset=".45" stop-color="#b6b7ba"/><stop offset="1" stop-color="#86878a"/></linearGradient>
<linearGradient id="g136" gradientUnits="userSpaceOnUse" x1="0" y1="1047.6" x2="0" y2="1080.3"><stop offset="0" stop-color="#e7e8eb"/><stop offset=".45" stop-color="#b6b7ba"/><stop offset="1" stop-color="#86878a"/></linearGradient>
<linearGradient id="g137" gradientUnits="userSpaceOnUse" x1="0" y1="1047.6" x2="0" y2="1080.3"><stop offset="0" stop-color="#e7e8eb"/><stop offset=".45" stop-color="#b6b7ba"/><stop offset="1" stop-color="#86878a"/></linearGradient>
<linearGradient id="g138" gradientUnits="userSpaceOnUse" x1="0" y1="1047.7" x2="0" y2="1080.4"><stop offset="0" stop-color="#e7e8eb"/><stop offset=".45" stop-color="#b6b7ba"/><stop offset="1" stop-color="#86878a"/></linearGradient>
<linearGradient id="g139" gradientUnits="userSpaceOnUse" x1="0" y1="1047.7" x2="0" y2="1080.4"><stop offset="0" stop-color="#e7e8eb"/><stop offset=".45" stop-color="#b6b7ba"/><stop offset="1" stop-color="#86878a"/></linearGradient>
<linearGradient id="g140" gradientUnits="userSpaceOnUse" x1="0" y1="1047.7" x2="0" y2="1080.5"><stop offset="0" stop-color="#e7e8eb"/><stop offset=".45" stop-color="#b6b7ba"/><stop offset="1" stop-color="#86878a"/></linearGradient>
<linearGradient id="g141" gradientUnits="userSpaceOnUse" x1="0" y1="1047.7" x2="0" y2="1080.5"><stop offset="0" stop-color="#e7e8eb"/><stop offset=".45" stop-color="#b6b7ba"/><stop offset="1" stop-color="#86878a"/></linearGradient>
<linearGradient id="g142" gradientUnits="userSpaceOnUse" x1="0" y1="1047.7" x2="0" y2="1080.5"><stop offset="0" stop-color="#e7e8eb"/><stop offset=".45" stop-color="#b6b7ba"/><stop offset="1" stop-color="#86878a"/></linearGradient>
<linearGradient id="g143" gradientUnits="userSpaceOnUse" x1="0" y1="1047.8" x2="0" y2="1080.6"><stop offset="0" stop-color="#e7e8eb"/><stop offset=".45" stop-color="#b6b7ba"/><stop offset="1" stop-color="#86878a"/></linearGradient>
<linearGradient id="g144" gradientUnits="userSpaceOnUse" x1="0" y1="1047.8" x2="0" y2="1080.6"><stop offset="0" stop-color="#e7e8eb"/><stop offset=".45" stop-color="#b6b7ba"/><stop offset="1" stop-color="#86878a"/></linearGradient>
<linearGradient id="g145" gradientUnits="userSpaceOnUse" x1="0" y1="1047.8" x2="0" y2="1080.7"><stop offset="0" stop-color="#e7e8eb"/><stop offset=".45" stop-color="#b6b7ba"/><stop offset="1" stop-color="#86878a"/></linearGradient>
<linearGradient id="g146" gradientUnits="userSpaceOnUse" x1="0" y1="1047.8" x2="0" y2="1080.7"><stop offset="0" stop-color="#e7e8eb"/><stop offset=".45" stop-color="#b6b7ba"/><stop offset="1" stop-color="#86878a"/></linearGradient>
<linearGradient id="g147" gradientUnits="userSpaceOnUse" x1="0" y1="1047.8" x2="0" y2="1080.7"><stop offset="0" stop-color="#e7e8eb"/><stop offset=".45" stop-color="#b6b7ba"/><stop offset="1" stop-color="#86878a"/></linearGradient>
<linearGradient id="g148" gradientUnits="userSpaceOnUse" x1="0" y1="1047.9" x2="0" y2="1080.8"><stop offset="0" stop-color="#e7e8eb"/><stop offset=".45" stop-color="#b6b7ba"/><stop offset="1" stop-color="#86878a"/></linearGradient>
<linearGradient id="g149" gradientUnits="userSpaceOnUse" x1="0" y1="1047.9" x2="0" y2="1080.8"><stop offset="0" stop-color="#e7e8eb"/><stop offset=".45" stop-color="#b6b7ba"/><stop offset="1" stop-color="#86878a"/></linearGradient>
<linearGradient id="g150" gradientUnits="userSpaceOnUse" x1="0" y1="1047.9" x2="0" y2="1080.8"><stop offset="0" stop-color="#e7e8eb"/><stop offset=".45" stop-color="#b6b7ba"/><stop offset="1" stop-color="#86878a"/></linearGradient>
<linearGradient id="g151" gradientUnits="userSpaceOnUse" x1="0" y1="1047.9" x2="0" y2="1080.8"><stop offset="0" stop-color="#e7e8eb"/><stop offset=".45" stop-color="#b6b7ba"/><stop offset="1" stop-color="#86878a"/></linearGradient>
<linearGradient id="g152" gradientUnits="userSpaceOnUse" x1="0" y1="1047.9" x2="0" y2="1080.9"><stop offset="0" stop-color="#e7e8eb"/><stop offset=".45" stop-color="#b6b7ba"/><stop offset="1" stop-color="#86878a"/></linearGradient>
<linearGradient id="g153" gradientUnits="userSpaceOnUse" x1="0" y1="1047.9" x2="0" y2="1080.9"><stop offset="0" stop-color="#e7e8eb"/><stop offset=".45" stop-color="#b6b7ba"/><stop offset="1" stop-color="#86878a"/></linearGradient>
<linearGradient id="g154" gradientUnits="userSpaceOnUse" x1="0" y1="1047.9" x2="0" y2="1080.9"><stop offset="0" stop-color="#e7e8eb"/><stop offset=".45" stop-color="#b6b7ba"/><stop offset="1" stop-color="#86878a"/></linearGradient>
<linearGradient id="g155" gradientUnits="userSpaceOnUse" x1="0" y1="1048.0" x2="0" y2="1080.9"><stop offset="0" stop-color="#e7e8eb"/><stop offset=".45" stop-color="#b6b7ba"/><stop offset="1" stop-color="#86878a"/></linearGradient>
<linearGradient id="g156" gradientUnits="userSpaceOnUse" x1="0" y1="1048.0" x2="0" y2="1080.9"><stop offset="0" stop-color="#e7e8eb"/><stop offset=".45" stop-color="#b6b7ba"/><stop offset="1" stop-color="#86878a"/></linearGradient>
<linearGradient id="g157" gradientUnits="userSpaceOnUse" x1="0" y1="1048.0" x2="0" y2="1080.9"><stop offset="0" stop-color="#e7e8eb"/><stop offset=".45" stop-color="#b6b7ba"/><stop offset="1" stop-color="#86878a"/></linearGradient>
<linearGradient id="g158" gradientUnits="userSpaceOnUse" x1="0" y1="1048.0" x2="0" y2="1081.0"><stop offset="0" stop-color="#e7e8eb"/><stop offset=".45" stop-color="#b6b7ba"/><stop offset="1" stop-color="#86878a"/></linearGradient>
<linearGradient id="g159" gradientUnits="userSpaceOnUse" x1="0" y1="1048.0" x2="0" y2="1081.0"><stop offset="0" stop-color="#e7e8eb"/><stop offset=".45" stop-color="#b6b7ba"/><stop offset="1" stop-color="#86878a"/></linearGradient>
<linearGradient id="g160" gradientUnits="userSpaceOnUse" x1="0" y1="1048.0" x2="0" y2="1081.0"><stop offset="0" stop-color="#e7e8eb"/><stop offset=".45" stop-color="#b6b7ba"/><stop offset="1" stop-color="#86878a"/></linearGradient>
<linearGradient id="g161" gradientUnits="userSpaceOnUse" x1="0" y1="1048.0" x2="0" y2="1081.0"><stop offset="0" stop-color="#e7e8eb"/><stop offset=".45" stop-color="#b6b7ba"/><stop offset="1" stop-color="#86878a"/></linearGradient>
<linearGradient id="g162" gradientUnits="userSpaceOnUse" x1="0" y1="1048.0" x2="0" y2="1081.0"><stop offset="0" stop-color="#e7e8eb"/><stop offset=".45" stop-color="#b6b7ba"/><stop offset="1" stop-color="#86878a"/></linearGradient>
<linearGradient id="g163" gradientUnits="userSpaceOnUse" x1="0" y1="1048.0" x2="0" y2="1081.0"><stop offset="0" stop-color="#e7e8eb"/><stop offset=".45" stop-color="#b6b7ba"/><stop offset="1" stop-color="#86878a"/></linearGradient>
<linearGradient id="g164" gradientUnits="userSpaceOnUse" x1="0" y1="1048.0" x2="0" y2="1081.0"><stop offset="0" stop-color="#e7e8eb"/><stop offset=".45" stop-color="#b6b7ba"/><stop offset="1" stop-color="#86878a"/></linearGradient>
<linearGradient id="g165" gradientUnits="userSpaceOnUse" x1="0" y1="1048.0" x2="0" y2="1081.0"><stop offset="0" stop-color="#e7e8eb"/><stop offset=".45" stop-color="#b6b7ba"/><stop offset="1" stop-color="#86878a"/></linearGradient>
<linearGradient id="g166" gradientUnits="userSpaceOnUse" x1="0" y1="1048.0" x2="0" y2="1081.0"><stop offset="0" stop-color="#e7e8eb"/><stop offset=".45" stop-color="#b6b7ba"/><stop offset="1" stop-color="#86878a"/></linearGradient>
<linearGradient id="g167" gradientUnits="userSpaceOnUse" x1="0" y1="1048.0" x2="0" y2="1080.9"><stop offset="0" stop-color="#e7e8eb"/><stop offset=".45" stop-color="#b6b7ba"/><stop offset="1" stop-color="#86878a"/></linearGradient>
<linearGradient id="g168" gradientUnits="userSpaceOnUse" x1="0" y1="1047.9" x2="0" y2="1080.9"><stop offset="0" stop-color="#e7e8eb"/><stop offset=".45" stop-color="#b6b7ba"/><stop offset="1" stop-color="#86878a"/></linearGradient>
<linearGradient id="g169" gradientUnits="userSpaceOnUse" x1="0" y1="1047.9" x2="0" y2="1080.8"><stop offset="0" stop-color="#e7e8eb"/><stop offset=".45" stop-color="#b6b7ba"/><stop offset="1" stop-color="#86878a"/></linearGradient>
<linearGradient id="g170" gradientUnits="userSpaceOnUse" x1="0" y1="1047.9" x2="0" y2="1080.7"><stop offset="0" stop-color="#e7e8eb"/><stop offset=".45" stop-color="#b6b7ba"/><stop offset="1" stop-color="#86878a"/></linearGradient>
<linearGradient id="g171" gradientUnits="userSpaceOnUse" x1="0" y1="1047.8" x2="0" y2="1080.7"><stop offset="0" stop-color="#e7e8eb"/><stop offset=".45" stop-color="#b6b7ba"/><stop offset="1" stop-color="#86878a"/></linearGradient>
<linearGradient id="g172" gradientUnits="userSpaceOnUse" x1="0" y1="1047.7" x2="0" y2="1080.5"><stop offset="0" stop-color="#e7e8eb"/><stop offset=".45" stop-color="#b6b7ba"/><stop offset="1" stop-color="#86878a"/></linearGradient>
<linearGradient id="g173" gradientUnits="userSpaceOnUse" x1="0" y1="1047.7" x2="0" y2="1080.4"><stop offset="0" stop-color="#e7e8eb"/><stop offset=".45" stop-color="#b6b7ba"/><stop offset="1" stop-color="#86878a"/></linearGradient>
<linearGradient id="g174" gradientUnits="userSpaceOnUse" x1="0" y1="1047.6" x2="0" y2="1080.3"><stop offset="0" stop-color="#e7e8eb"/><stop offset=".45" stop-color="#b6b7ba"/><stop offset="1" stop-color="#86878a"/></linearGradient>
<linearGradient id="g175" gradientUnits="userSpaceOnUse" x1="0" y1="1047.5" x2="0" y2="1080.1"><stop offset="0" stop-color="#e7e8eb"/><stop offset=".45" stop-color="#b6b7ba"/><stop offset="1" stop-color="#86878a"/></linearGradient>
<linearGradient id="g176" gradientUnits="userSpaceOnUse" x1="0" y1="1047.4" x2="0" y2="1080.0"><stop offset="0" stop-color="#e7e8eb"/><stop offset=".45" stop-color="#b6b7ba"/><stop offset="1" stop-color="#86878a"/></linearGradient>
<linearGradient id="g177" gradientUnits="userSpaceOnUse" x1="0" y1="1047.3" x2="0" y2="1079.8"><stop offset="0" stop-color="#e7e8eb"/><stop offset=".45" stop-color="#b6b7ba"/><stop offset="1" stop-color="#86878a"/></linearGradient>
<linearGradient id="g178" gradientUnits="userSpaceOnUse" x1="0" y1="1047.2" x2="0" y2="1079.6"><stop offset="0" stop-color="#e7e8eb"/><stop offset=".45" stop-color="#b6b7ba"/><stop offset="1" stop-color="#86878a"/></linearGradient>
<linearGradient id="g179" gradientUnits="userSpaceOnUse" x1="0" y1="1047.1" x2="0" y2="1079.4"><stop offset="0" stop-color="#e7e8eb"/><stop offset=".45" stop-color="#b6b7ba"/><stop offset="1" stop-color="#86878a"/></linearGradient>
<linearGradient id="g180" gradientUnits="userSpaceOnUse" x1="0" y1="1047.0" x2="0" y2="1079.2"><stop offset="0" stop-color="#e7e8eb"/><stop offset=".45" stop-color="#b6b7ba"/><stop offset="1" stop-color="#86878a"/></linearGradient>
<linearGradient id="g181" gradientUnits="userSpaceOnUse" x1="0" y1="1046.9" x2="0" y2="1079.0"><stop offset="0" stop-color="#e7e8eb"/><stop offset=".45" stop-color="#b6b7ba"/><stop offset="1" stop-color="#86878a"/></linearGradient>
<linearGradient id="g182" gradientUnits="userSpaceOnUse" x1="0" y1="1046.7" x2="0" y2="1078.7"><stop offset="0" stop-color="#e7e8eb"/><stop offset=".45" stop-color="#b6b7ba"/><stop offset="1" stop-color="#86878a"/></linearGradient>
<linearGradient id="g183" gradientUnits="userSpaceOnUse" x1="0" y1="1046.6" x2="0" y2="1078.5"><stop offset="0" stop-color="#e7e8eb"/><stop offset=".45" stop-color="#b6b7ba"/><stop offset="1" stop-color="#86878a"/></linearGradient>
<linearGradient id="g184" gradientUnits="userSpaceOnUse" x1="0" y1="1046.4" x2="0" y2="1078.2"><stop offset="0" stop-color="#e7e8eb"/><stop offset=".45" stop-color="#b6b7ba"/><stop offset="1" stop-color="#86878a"/></linearGradient>
<linearGradient id="g185" gradientUnits="userSpaceOnUse" x1="0" y1="1046.3" x2="0" y2="1078.0"><stop offset="0" stop-color="#e7e8eb"/><stop offset=".45" stop-color="#b6b7ba"/><stop offset="1" stop-color="#86878a"/></linearGradient>
<linearGradient id="g186" gradientUnits="userSpaceOnUse" x1="0" y1="1046.1" x2="0" y2="1077.7"><stop offset="0" stop-color="#e7e8eb"/><stop offset=".45" stop-color="#b6b7ba"/><stop offset="1" stop-color="#86878a"/></linearGradient>
<linearGradient id="g187" gradientUnits="userSpaceOnUse" x1="0" y1="1046.0" x2="0" y2="1077.4"><stop offset="0" stop-color="#e7e8eb"/><stop offset=".45" stop-color="#b6b7ba"/><stop offset="1" stop-color="#86878a"/></linearGradient>
<linearGradient id="g188" gradientUnits="userSpaceOnUse" x1="0" y1="1045.8" x2="0" y2="1077.1"><stop offset="0" stop-color="#e7e8eb"/><stop offset=".45" stop-color="#b6b7ba"/><stop offset="1" stop-color="#86878a"/></linearGradient>
<linearGradient id="g189" gradientUnits="userSpaceOnUse" x1="0" y1="1045.6" x2="0" y2="1076.8"><stop offset="0" stop-color="#e7e8eb"/><stop offset=".45" stop-color="#b6b7ba"/><stop offset="1" stop-color="#86878a"/></linearGradient>
<linearGradient id="g190" gradientUnits="userSpaceOnUse" x1="0" y1="1045.4" x2="0" y2="1076.5"><stop offset="0" stop-color="#e7e8eb"/><stop offset=".45" stop-color="#b6b7ba"/><stop offset="1" stop-color="#86878a"/></linearGradient>
<linearGradient id="g191" gradientUnits="userSpaceOnUse" x1="0" y1="1045.2" x2="0" y2="1076.2"><stop offset="0" stop-color="#e7e8eb"/><stop offset=".45" stop-color="#b6b7ba"/><stop offset="1" stop-color="#86878a"/></linearGradient>
<linearGradient id="g192" gradientUnits="userSpaceOnUse" x1="0" y1="1045.0" x2="0" y2="1075.8"><stop offset="0" stop-color="#e7e8eb"/><stop offset=".45" stop-color="#b6b7ba"/><stop offset="1" stop-color="#86878a"/></linearGradient>
<linearGradient id="g193" gradientUnits="userSpaceOnUse" x1="0" y1="1044.8" x2="0" y2="1075.5"><stop offset="0" stop-color="#e7e8eb"/><stop offset=".45" stop-color="#b6b7ba"/><stop offset="1" stop-color="#86878a"/></linearGradient>
<linearGradient id="g194" gradientUnits="userSpaceOnUse" x1="0" y1="1044.6" x2="0" y2="1075.1"><stop offset="0" stop-color="#e7e8eb"/><stop offset=".45" stop-color="#b6b7ba"/><stop offset="1" stop-color="#86878a"/></linearGradient>
<linearGradient id="g195" gradientUnits="userSpaceOnUse" x1="0" y1="1044.4" x2="0" y2="1074.8"><stop offset="0" stop-color="#e7e8eb"/><stop offset=".45" stop-color="#b6b7ba"/><stop offset="1" stop-color="#86878a"/></linearGradient>
<linearGradient id="g196" gradientUnits="userSpaceOnUse" x1="0" y1="1044.2" x2="0" y2="1074.4"><stop offset="0" stop-color="#e7e8eb"/><stop offset=".45" stop-color="#b6b7ba"/><stop offset="1" stop-color="#86878a"/></linearGradient>
<linearGradient id="g197" gradientUnits="userSpaceOnUse" x1="0" y1="1044.0" x2="0" y2="1074.0"><stop offset="0" stop-color="#e7e8eb"/><stop offset=".45" stop-color="#b6b7ba"/><stop offset="1" stop-color="#86878a"/></linearGradient>
<linearGradient id="g198" gradientUnits="userSpaceOnUse" x1="0" y1="1043.7" x2="0" y2="1073.6"><stop offset="0" stop-color="#e7e8eb"/><stop offset=".45" stop-color="#b6b7ba"/><stop offset="1" stop-color="#86878a"/></linearGradient>
<linearGradient id="g199" gradientUnits="userSpaceOnUse" x1="0" y1="1043.5" x2="0" y2="1073.2"><stop offset="0" stop-color="#e7e8eb"/><stop offset=".45" stop-color="#b6b7ba"/><stop offset="1" stop-color="#86878a"/></linearGradient>
<linearGradient id="g200" gradientUnits="userSpaceOnUse" x1="0" y1="1043.2" x2="0" y2="1072.8"><stop offset="0" stop-color="#e7e8eb"/><stop offset=".45" stop-color="#b6b7ba"/><stop offset="1" stop-color="#86878a"/></linearGradient>
<linearGradient id="g201" gradientUnits="userSpaceOnUse" x1="0" y1="1043.0" x2="0" y2="1072.4"><stop offset="0" stop-color="#e7e8eb"/><stop offset=".45" stop-color="#b6b7ba"/><stop offset="1" stop-color="#86878a"/></linearGradient>
<linearGradient id="g202" gradientUnits="userSpaceOnUse" x1="0" y1="1042.8" x2="0" y2="1072.0"><stop offset="0" stop-color="#e7e8eb"/><stop offset=".45" stop-color="#b6b7ba"/><stop offset="1" stop-color="#86878a"/></linearGradient>
<linearGradient id="g203" gradientUnits="userSpaceOnUse" x1="0" y1="1042.5" x2="0" y2="1071.6"><stop offset="0" stop-color="#e7e8eb"/><stop offset=".45" stop-color="#b6b7ba"/><stop offset="1" stop-color="#86878a"/></linearGradient>
<linearGradient id="g204" gradientUnits="userSpaceOnUse" x1="0" y1="1042.2" x2="0" y2="1071.2"><stop offset="0" stop-color="#e7e8eb"/><stop offset=".45" stop-color="#b6b7ba"/><stop offset="1" stop-color="#86878a"/></linearGradient>
<linearGradient id="g205" gradientUnits="userSpaceOnUse" x1="0" y1="1042.0" x2="0" y2="1070.8"><stop offset="0" stop-color="#e7e8eb"/><stop offset=".45" stop-color="#b6b7ba"/><stop offset="1" stop-color="#86878a"/></linearGradient>
<linearGradient id="g206" gradientUnits="userSpaceOnUse" x1="0" y1="1041.7" x2="0" y2="1070.3"><stop offset="0" stop-color="#e7e8eb"/><stop offset=".45" stop-color="#b6b7ba"/><stop offset="1" stop-color="#86878a"/></linearGradient>
<linearGradient id="g207" gradientUnits="userSpaceOnUse" x1="0" y1="1041.4" x2="0" y2="1069.9"><stop offset="0" stop-color="#e7e8eb"/><stop offset=".45" stop-color="#b6b7ba"/><stop offset="1" stop-color="#86878a"/></linearGradient>
<linearGradient id="g208" gradientUnits="userSpaceOnUse" x1="0" y1="1041.2" x2="0" y2="1069.4"><stop offset="0" stop-color="#e7e8eb"/><stop offset=".45" stop-color="#b6b7ba"/><stop offset="1" stop-color="#86878a"/></linearGradient>
<linearGradient id="g209" gradientUnits="userSpaceOnUse" x1="0" y1="1040.9" x2="0" y2="1069.0"><stop offset="0" stop-color="#e7e8eb"/><stop offset=".45" stop-color="#b6b7ba"/><stop offset="1" stop-color="#86878a"/></linearGradient>
<linearGradient id="g210" gradientUnits="userSpaceOnUse" x1="0" y1="1040.6" x2="0" y2="1068.5"><stop offset="0" stop-color="#e7e8eb"/><stop offset=".45" stop-color="#b6b7ba"/><stop offset="1" stop-color="#86878a"/></linearGradient>
<linearGradient id="g211" gradientUnits="userSpaceOnUse" x1="0" y1="1040.3" x2="0" y2="1068.1"><stop offset="0" stop-color="#e7e8eb"/><stop offset=".45" stop-color="#b6b7ba"/><stop offset="1" stop-color="#86878a"/></linearGradient>
<linearGradient id="g212" gradientUnits="userSpaceOnUse" x1="0" y1="1040.0" x2="0" y2="1067.6"><stop offset="0" stop-color="#e7e8eb"/><stop offset=".45" stop-color="#b6b7ba"/><stop offset="1" stop-color="#86878a"/></linearGradient>
<linearGradient id="g213" gradientUnits="userSpaceOnUse" x1="0" y1="1039.7" x2="0" y2="1067.2"><stop offset="0" stop-color="#e7e8eb"/><stop offset=".45" stop-color="#b6b7ba"/><stop offset="1" stop-color="#86878a"/></linearGradient>
<linearGradient id="g214" gradientUnits="userSpaceOnUse" x1="0" y1="1039.5" x2="0" y2="1066.8"><stop offset="0" stop-color="#e7e8eb"/><stop offset=".45" stop-color="#b6b7ba"/><stop offset="1" stop-color="#86878a"/></linearGradient>
<linearGradient id="g215" gradientUnits="userSpaceOnUse" x1="0" y1="1039.3" x2="0" y2="1066.5"><stop offset="0" stop-color="#e7e8eb"/><stop offset=".45" stop-color="#b6b7ba"/><stop offset="1" stop-color="#86878a"/></linearGradient>
<linearGradient id="g216" gradientUnits="userSpaceOnUse" x1="0" y1="1039.2" x2="0" y2="1066.3"><stop offset="0" stop-color="#e7e8eb"/><stop offset=".45" stop-color="#b6b7ba"/><stop offset="1" stop-color="#86878a"/></linearGradient>
<linearGradient id="g217" gradientUnits="userSpaceOnUse" x1="0" y1="1039.0" x2="0" y2="1066.1"><stop offset="0" stop-color="#e7e8eb"/><stop offset=".45" stop-color="#b6b7ba"/><stop offset="1" stop-color="#86878a"/></linearGradient>
<linearGradient id="g218" gradientUnits="userSpaceOnUse" x1="0" y1="1038.9" x2="0" y2="1065.9"><stop offset="0" stop-color="#e7e8eb"/><stop offset=".45" stop-color="#b6b7ba"/><stop offset="1" stop-color="#86878a"/></linearGradient>
<linearGradient id="g219" gradientUnits="userSpaceOnUse" x1="0" y1="1038.8" x2="0" y2="1065.7"><stop offset="0" stop-color="#e7e8eb"/><stop offset=".45" stop-color="#b6b7ba"/><stop offset="1" stop-color="#86878a"/></linearGradient>
<linearGradient id="g220" gradientUnits="userSpaceOnUse" x1="0" y1="1038.6" x2="0" y2="1065.5"><stop offset="0" stop-color="#e7e8eb"/><stop offset=".45" stop-color="#b6b7ba"/><stop offset="1" stop-color="#86878a"/></linearGradient>
<linearGradient id="g221" gradientUnits="userSpaceOnUse" x1="0" y1="1038.5" x2="0" y2="1065.2"><stop offset="0" stop-color="#e7e8eb"/><stop offset=".45" stop-color="#b6b7ba"/><stop offset="1" stop-color="#86878a"/></linearGradient>
<linearGradient id="g222" gradientUnits="userSpaceOnUse" x1="0" y1="1038.3" x2="0" y2="1065.0"><stop offset="0" stop-color="#e7e8eb"/><stop offset=".45" stop-color="#b6b7ba"/><stop offset="1" stop-color="#86878a"/></linearGradient>
<linearGradient id="g223" gradientUnits="userSpaceOnUse" x1="0" y1="1038.2" x2="0" y2="1064.8"><stop offset="0" stop-color="#e7e8eb"/><stop offset=".45" stop-color="#b6b7ba"/><stop offset="1" stop-color="#86878a"/></linearGradient>
<linearGradient id="g224" gradientUnits="userSpaceOnUse" x1="0" y1="1038.1" x2="0" y2="1064.6"><stop offset="0" stop-color="#e7e8eb"/><stop offset=".45" stop-color="#b6b7ba"/><stop offset="1" stop-color="#86878a"/></linearGradient>
<linearGradient id="g225" gradientUnits="userSpaceOnUse" x1="0" y1="1037.9" x2="0" y2="1064.4"><stop offset="0" stop-color="#e7e8eb"/><stop offset=".45" stop-color="#b6b7ba"/><stop offset="1" stop-color="#86878a"/></linearGradient>
<linearGradient id="g226" gradientUnits="userSpaceOnUse" x1="0" y1="1037.8" x2="0" y2="1064.2"><stop offset="0" stop-color="#e7e8eb"/><stop offset=".45" stop-color="#b6b7ba"/><stop offset="1" stop-color="#86878a"/></linearGradient>
<linearGradient id="g227" gradientUnits="userSpaceOnUse" x1="0" y1="1037.7" x2="0" y2="1064.0"><stop offset="0" stop-color="#e7e8eb"/><stop offset=".45" stop-color="#b6b7ba"/><stop offset="1" stop-color="#86878a"/></linearGradient>
<linearGradient id="g228" gradientUnits="userSpaceOnUse" x1="0" y1="1037.5" x2="0" y2="1063.8"><stop offset="0" stop-color="#e7e8eb"/><stop offset=".45" stop-color="#b6b7ba"/><stop offset="1" stop-color="#86878a"/></linearGradient>
<linearGradient id="g229" gradientUnits="userSpaceOnUse" x1="0" y1="1037.4" x2="0" y2="1063.6"><stop offset="0" stop-color="#e7e8eb"/><stop offset=".45" stop-color="#b6b7ba"/><stop offset="1" stop-color="#86878a"/></linearGradient>
<linearGradient id="g230" gradientUnits="userSpaceOnUse" x1="0" y1="1037.2" x2="0" y2="1063.3"><stop offset="0" stop-color="#e7e8eb"/><stop offset=".45" stop-color="#b6b7ba"/><stop offset="1" stop-color="#86878a"/></linearGradient>
<linearGradient id="g231" gradientUnits="userSpaceOnUse" x1="0" y1="1037.1" x2="0" y2="1063.1"><stop offset="0" stop-color="#e7e8eb"/><stop offset=".45" stop-color="#b6b7ba"/><stop offset="1" stop-color="#86878a"/></linearGradient>
<linearGradient id="g232" gradientUnits="userSpaceOnUse" x1="0" y1="1036.9" x2="0" y2="1062.9"><stop offset="0" stop-color="#e7e8eb"/><stop offset=".45" stop-color="#b6b7ba"/><stop offset="1" stop-color="#86878a"/></linearGradient>
<linearGradient id="g233" gradientUnits="userSpaceOnUse" x1="0" y1="1036.8" x2="0" y2="1062.7"><stop offset="0" stop-color="#e7e8eb"/><stop offset=".45" stop-color="#b6b7ba"/><stop offset="1" stop-color="#86878a"/></linearGradient>
<linearGradient id="g234" gradientUnits="userSpaceOnUse" x1="0" y1="1036.6" x2="0" y2="1062.5"><stop offset="0" stop-color="#e7e8eb"/><stop offset=".45" stop-color="#b6b7ba"/><stop offset="1" stop-color="#86878a"/></linearGradient>
<linearGradient id="g235" gradientUnits="userSpaceOnUse" x1="0" y1="1036.5" x2="0" y2="1062.2"><stop offset="0" stop-color="#e7e8eb"/><stop offset=".45" stop-color="#b6b7ba"/><stop offset="1" stop-color="#86878a"/></linearGradient>
<linearGradient id="g236" gradientUnits="userSpaceOnUse" x1="0" y1="1036.3" x2="0" y2="1062.0"><stop offset="0" stop-color="#e7e8eb"/><stop offset=".45" stop-color="#b6b7ba"/><stop offset="1" stop-color="#86878a"/></linearGradient>
<linearGradient id="g237" gradientUnits="userSpaceOnUse" x1="0" y1="1036.1" x2="0" y2="1061.7"><stop offset="0" stop-color="#e7e8eb"/><stop offset=".45" stop-color="#b6b7ba"/><stop offset="1" stop-color="#86878a"/></linearGradient>
<linearGradient id="g238" gradientUnits="userSpaceOnUse" x1="0" y1="1035.9" x2="0" y2="1061.4"><stop offset="0" stop-color="#e7e8eb"/><stop offset=".45" stop-color="#b6b7ba"/><stop offset="1" stop-color="#86878a"/></linearGradient>
<linearGradient id="g239" gradientUnits="userSpaceOnUse" x1="0" y1="1035.7" x2="0" y2="1061.1"><stop offset="0" stop-color="#e7e8eb"/><stop offset=".45" stop-color="#b6b7ba"/><stop offset="1" stop-color="#86878a"/></linearGradient>
<linearGradient id="g240" gradientUnits="userSpaceOnUse" x1="0" y1="1035.4" x2="0" y2="1060.8"><stop offset="0" stop-color="#e7e8eb"/><stop offset=".45" stop-color="#b6b7ba"/><stop offset="1" stop-color="#86878a"/></linearGradient>
<linearGradient id="g241" gradientUnits="userSpaceOnUse" x1="0" y1="1035.2" x2="0" y2="1060.5"><stop offset="0" stop-color="#e7e8eb"/><stop offset=".45" stop-color="#b6b7ba"/><stop offset="1" stop-color="#86878a"/></linearGradient>
<linearGradient id="g242" gradientUnits="userSpaceOnUse" x1="0" y1="1035.0" x2="0" y2="1060.2"><stop offset="0" stop-color="#e7e8eb"/><stop offset=".45" stop-color="#b6b7ba"/><stop offset="1" stop-color="#86878a"/></linearGradient>
<linearGradient id="g243" gradientUnits="userSpaceOnUse" x1="0" y1="1034.7" x2="0" y2="1059.9"><stop offset="0" stop-color="#e7e8eb"/><stop offset=".45" stop-color="#b6b7ba"/><stop offset="1" stop-color="#86878a"/></linearGradient>
<linearGradient id="g244" gradientUnits="userSpaceOnUse" x1="0" y1="1034.5" x2="0" y2="1059.6"><stop offset="0" stop-color="#e7e8eb"/><stop offset=".45" stop-color="#b6b7ba"/><stop offset="1" stop-color="#86878a"/></linearGradient>
<linearGradient id="g245" gradientUnits="userSpaceOnUse" x1="0" y1="1034.2" x2="0" y2="1059.3"><stop offset="0" stop-color="#e7e8eb"/><stop offset=".45" stop-color="#b6b7ba"/><stop offset="1" stop-color="#86878a"/></linearGradient>
<linearGradient id="g246" gradientUnits="userSpaceOnUse" x1="0" y1="1033.9" x2="0" y2="1058.9"><stop offset="0" stop-color="#e7e8eb"/><stop offset=".45" stop-color="#b6b7ba"/><stop offset="1" stop-color="#86878a"/></linearGradient>
<linearGradient id="g247" gradientUnits="userSpaceOnUse" x1="0" y1="1033.6" x2="0" y2="1058.6"><stop offset="0" stop-color="#e7e8eb"/><stop offset=".45" stop-color="#b6b7ba"/><stop offset="1" stop-color="#86878a"/></linearGradient>
<linearGradient id="g248" gradientUnits="userSpaceOnUse" x1="0" y1="1033.4" x2="0" y2="1058.2"><stop offset="0" stop-color="#e7e8eb"/><stop offset=".45" stop-color="#b6b7ba"/><stop offset="1" stop-color="#86878a"/></linearGradient>
<linearGradient id="g249" gradientUnits="userSpaceOnUse" x1="0" y1="1033.1" x2="0" y2="1057.9"><stop offset="0" stop-color="#e7e8eb"/><stop offset=".45" stop-color="#b6b7ba"/><stop offset="1" stop-color="#86878a"/></linearGradient>
<linearGradient id="g250" gradientUnits="userSpaceOnUse" x1="0" y1="1032.8" x2="0" y2="1057.5"><stop offset="0" stop-color="#e7e8eb"/><stop offset=".45" stop-color="#b6b7ba"/><stop offset="1" stop-color="#86878a"/></linearGradient>
<linearGradient id="g251" gradientUnits="userSpaceOnUse" x1="0" y1="1032.5" x2="0" y2="1057.1"><stop offset="0" stop-color="#e7e8eb"/><stop offset=".45" stop-color="#b6b7ba"/><stop offset="1" stop-color="#86878a"/></linearGradient>
<linearGradient id="g252" gradientUnits="userSpaceOnUse" x1="0" y1="1032.2" x2="0" y2="1056.8"><stop offset="0" stop-color="#e7e8eb"/><stop offset=".45" stop-color="#b6b7ba"/><stop offset="1" stop-color="#86878a"/></linearGradient>
<linearGradient id="g253" gradientUnits="userSpaceOnUse" x1="0" y1="1031.9" x2="0" y2="1056.4"><stop offset="0" stop-color="#e7e8eb"/><stop offset=".45" stop-color="#b6b7ba"/><stop offset="1" stop-color="#86878a"/></linearGradient>
<linearGradient id="g254" gradientUnits="userSpaceOnUse" x1="0" y1="1031.6" x2="0" y2="1056.0"><stop offset="0" stop-color="#e7e8eb"/><stop offset=".45" stop-color="#b6b7ba"/><stop offset="1" stop-color="#86878a"/></linearGradient>
<linearGradient id="g255" gradientUnits="userSpaceOnUse" x1="0" y1="1031.3" x2="0" y2="1055.6"><stop offset="0" stop-color="#e7e8eb"/><stop offset=".45" stop-color="#b6b7ba"/><stop offset="1" stop-color="#86878a"/></linearGradient>
<linearGradient id="g256" gradientUnits="userSpaceOnUse" x1="0" y1="1030.9" x2="0" y2="1055.2"><stop offset="0" stop-color="#e7e8eb"/><stop offset=".45" stop-color="#b6b7ba"/><stop offset="1" stop-color="#86878a"/></linearGradient>
<linearGradient id="g257" gradientUnits="userSpaceOnUse" x1="0" y1="1030.6" x2="0" y2="1054.8"><stop offset="0" stop-color="#e7e8eb"/><stop offset=".45" stop-color="#b6b7ba"/><stop offset="1" stop-color="#86878a"/></linearGradient>
<linearGradient id="g258" gradientUnits="userSpaceOnUse" x1="0" y1="1030.3" x2="0" y2="1054.4"><stop offset="0" stop-color="#e7e8eb"/><stop offset=".45" stop-color="#b6b7ba"/><stop offset="1" stop-color="#86878a"/></linearGradient>
<linearGradient id="g259" gradientUnits="userSpaceOnUse" x1="0" y1="1030.0" x2="0" y2="1054.1"><stop offset="0" stop-color="#e7e8eb"/><stop offset=".45" stop-color="#b6b7ba"/><stop offset="1" stop-color="#86878a"/></linearGradient>
<linearGradient id="g260" gradientUnits="userSpaceOnUse" x1="0" y1="1029.6" x2="0" y2="1053.7"><stop offset="0" stop-color="#e7e8eb"/><stop offset=".45" stop-color="#b6b7ba"/><stop offset="1" stop-color="#86878a"/></linearGradient>
<linearGradient id="g261" gradientUnits="userSpaceOnUse" x1="0" y1="1029.3" x2="0" y2="1053.3"><stop offset="0" stop-color="#e7e8eb"/><stop offset=".45" stop-color="#b6b7ba"/><stop offset="1" stop-color="#86878a"/></linearGradient>
<linearGradient id="g262" gradientUnits="userSpaceOnUse" x1="0" y1="1029.0" x2="0" y2="1052.9"><stop offset="0" stop-color="#e7e8eb"/><stop offset=".45" stop-color="#b6b7ba"/><stop offset="1" stop-color="#86878a"/></linearGradient>
<linearGradient id="g263" gradientUnits="userSpaceOnUse" x1="0" y1="1028.7" x2="0" y2="1052.5"><stop offset="0" stop-color="#e7e8eb"/><stop offset=".45" stop-color="#b6b7ba"/><stop offset="1" stop-color="#86878a"/></linearGradient>
<linearGradient id="g264" gradientUnits="userSpaceOnUse" x1="0" y1="1028.3" x2="0" y2="1052.1"><stop offset="0" stop-color="#e7e8eb"/><stop offset=".45" stop-color="#b6b7ba"/><stop offset="1" stop-color="#86878a"/></linearGradient>
<linearGradient id="g265" gradientUnits="userSpaceOnUse" x1="0" y1="1028.0" x2="0" y2="1051.7"><stop offset="0" stop-color="#e7e8eb"/><stop offset=".45" stop-color="#b6b7ba"/><stop offset="1" stop-color="#86878a"/></linearGradient>
<linearGradient id="g266" gradientUnits="userSpaceOnUse" x1="0" y1="1027.7" x2="0" y2="1051.3"><stop offset="0" stop-color="#e7e8eb"/><stop offset=".45" stop-color="#b6b7ba"/><stop offset="1" stop-color="#86878a"/></linearGradient>
<linearGradient id="g267" gradientUnits="userSpaceOnUse" x1="0" y1="1027.4" x2="0" y2="1050.9"><stop offset="0" stop-color="#e7e8eb"/><stop offset=".45" stop-color="#b6b7ba"/><stop offset="1" stop-color="#86878a"/></linearGradient>
<linearGradient id="g268" gradientUnits="userSpaceOnUse" x1="0" y1="1027.0" x2="0" y2="1050.5"><stop offset="0" stop-color="#e7e8eb"/><stop offset=".45" stop-color="#b6b7ba"/><stop offset="1" stop-color="#86878a"/></linearGradient>
<linearGradient id="g269" gradientUnits="userSpaceOnUse" x1="0" y1="1026.7" x2="0" y2="1050.1"><stop offset="0" stop-color="#e7e8eb"/><stop offset=".45" stop-color="#b6b7ba"/><stop offset="1" stop-color="#86878a"/></linearGradient>
<linearGradient id="g270" gradientUnits="userSpaceOnUse" x1="0" y1="1026.4" x2="0" y2="1049.7"><stop offset="0" stop-color="#e7e8eb"/><stop offset=".45" stop-color="#b6b7ba"/><stop offset="1" stop-color="#86878a"/></linearGradient>
<linearGradient id="g271" gradientUnits="userSpaceOnUse" x1="0" y1="1026.1" x2="0" y2="1049.3"><stop offset="0" stop-color="#e7e8eb"/><stop offset=".45" stop-color="#b6b7ba"/><stop offset="1" stop-color="#86878a"/></linearGradient>
<linearGradient id="g272" gradientUnits="userSpaceOnUse" x1="0" y1="1025.8" x2="0" y2="1048.9"><stop offset="0" stop-color="#e7e8eb"/><stop offset=".45" stop-color="#b6b7ba"/><stop offset="1" stop-color="#86878a"/></linearGradient>
<linearGradient id="g273" gradientUnits="userSpaceOnUse" x1="0" y1="1025.5" x2="0" y2="1048.6"><stop offset="0" stop-color="#e7e8eb"/><stop offset=".45" stop-color="#b6b7ba"/><stop offset="1" stop-color="#86878a"/></linearGradient>
<linearGradient id="g274" gradientUnits="userSpaceOnUse" x1="0" y1="1025.2" x2="0" y2="1048.2"><stop offset="0" stop-color="#e7e8eb"/><stop offset=".45" stop-color="#b6b7ba"/><stop offset="1" stop-color="#86878a"/></linearGradient>
<linearGradient id="g275" gradientUnits="userSpaceOnUse" x1="0" y1="1024.8" x2="0" y2="1047.8"><stop offset="0" stop-color="#e7e8eb"/><stop offset=".45" stop-color="#b6b7ba"/><stop offset="1" stop-color="#86878a"/></linearGradient>
<linearGradient id="g276" gradientUnits="userSpaceOnUse" x1="0" y1="1024.5" x2="0" y2="1047.4"><stop offset="0" stop-color="#e7e8eb"/><stop offset=".45" stop-color="#b6b7ba"/><stop offset="1" stop-color="#86878a"/></linearGradient>
<linearGradient id="g277" gradientUnits="userSpaceOnUse" x1="0" y1="1024.2" x2="0" y2="1047.1"><stop offset="0" stop-color="#e7e8eb"/><stop offset=".45" stop-color="#b6b7ba"/><stop offset="1" stop-color="#86878a"/></linearGradient>
<linearGradient id="g278" gradientUnits="userSpaceOnUse" x1="0" y1="1023.9" x2="0" y2="1046.7"><stop offset="0" stop-color="#e7e8eb"/><stop offset=".45" stop-color="#b6b7ba"/><stop offset="1" stop-color="#86878a"/></linearGradient>
<linearGradient id="g279" gradientUnits="userSpaceOnUse" x1="0" y1="1023.6" x2="0" y2="1046.3"><stop offset="0" stop-color="#e7e8eb"/><stop offset=".45" stop-color="#b6b7ba"/><stop offset="1" stop-color="#86878a"/></linearGradient>
<linearGradient id="g280" gradientUnits="userSpaceOnUse" x1="0" y1="1023.3" x2="0" y2="1045.9"><stop offset="0" stop-color="#e7e8eb"/><stop offset=".45" stop-color="#b6b7ba"/><stop offset="1" stop-color="#86878a"/></linearGradient>
<linearGradient id="g281" gradientUnits="userSpaceOnUse" x1="0" y1="1022.9" x2="0" y2="1045.5"><stop offset="0" stop-color="#e7e8eb"/><stop offset=".45" stop-color="#b6b7ba"/><stop offset="1" stop-color="#86878a"/></linearGradient>
<linearGradient id="g282" gradientUnits="userSpaceOnUse" x1="0" y1="1022.6" x2="0" y2="1045.1"><stop offset="0" stop-color="#e7e8eb"/><stop offset=".45" stop-color="#b6b7ba"/><stop offset="1" stop-color="#86878a"/></linearGradient>
<linearGradient id="g283" gradientUnits="userSpaceOnUse" x1="0" y1="1022.3" x2="0" y2="1044.7"><stop offset="0" stop-color="#e7e8eb"/><stop offset=".45" stop-color="#b6b7ba"/><stop offset="1" stop-color="#86878a"/></linearGradient>
<linearGradient id="g284" gradientUnits="userSpaceOnUse" x1="0" y1="1022.0" x2="0" y2="1044.2"><stop offset="0" stop-color="#e7e8eb"/><stop offset=".45" stop-color="#b6b7ba"/><stop offset="1" stop-color="#86878a"/></linearGradient>
<linearGradient id="g285" gradientUnits="userSpaceOnUse" x1="0" y1="1021.6" x2="0" y2="1043.8"><stop offset="0" stop-color="#e7e8eb"/><stop offset=".45" stop-color="#b6b7ba"/><stop offset="1" stop-color="#86878a"/></linearGradient>
<linearGradient id="g286" gradientUnits="userSpaceOnUse" x1="0" y1="1021.3" x2="0" y2="1043.4"><stop offset="0" stop-color="#e7e8eb"/><stop offset=".45" stop-color="#b6b7ba"/><stop offset="1" stop-color="#86878a"/></linearGradient>
<linearGradient id="g287" gradientUnits="userSpaceOnUse" x1="0" y1="1020.9" x2="0" y2="1043.0"><stop offset="0" stop-color="#e7e8eb"/><stop offset=".45" stop-color="#b6b7ba"/><stop offset="1" stop-color="#86878a"/></linearGradient>
<linearGradient id="g288" gradientUnits="userSpaceOnUse" x1="0" y1="1020.6" x2="0" y2="1042.6"><stop offset="0" stop-color="#e7e8eb"/><stop offset=".45" stop-color="#b6b7ba"/><stop offset="1" stop-color="#86878a"/></linearGradient>
<linearGradient id="g289" gradientUnits="userSpaceOnUse" x1="0" y1="1020.2" x2="0" y2="1042.1"><stop offset="0" stop-color="#e7e8eb"/><stop offset=".45" stop-color="#b6b7ba"/><stop offset="1" stop-color="#86878a"/></linearGradient>
<linearGradient id="g290" gradientUnits="userSpaceOnUse" x1="0" y1="1019.9" x2="0" y2="1041.7"><stop offset="0" stop-color="#e7e8eb"/><stop offset=".45" stop-color="#b6b7ba"/><stop offset="1" stop-color="#86878a"/></linearGradient>
<linearGradient id="g291" gradientUnits="userSpaceOnUse" x1="0" y1="1019.6" x2="0" y2="1041.3"><stop offset="0" stop-color="#e7e8eb"/><stop offset=".45" stop-color="#b6b7ba"/><stop offset="1" stop-color="#86878a"/></linearGradient>
<linearGradient id="g292" gradientUnits="userSpaceOnUse" x1="0" y1="1019.2" x2="0" y2="1040.9"><stop offset="0" stop-color="#e7e8eb"/><stop offset=".45" stop-color="#b6b7ba"/><stop offset="1" stop-color="#86878a"/></linearGradient>
<linearGradient id="g293" gradientUnits="userSpaceOnUse" x1="0" y1="1018.9" x2="0" y2="1040.4"><stop offset="0" stop-color="#e7e8eb"/><stop offset=".45" stop-color="#b6b7ba"/><stop offset="1" stop-color="#86878a"/></linearGradient>
<linearGradient id="g294" gradientUnits="userSpaceOnUse" x1="0" y1="1018.5" x2="0" y2="1040.0"><stop offset="0" stop-color="#e7e8eb"/><stop offset=".45" stop-color="#b6b7ba"/><stop offset="1" stop-color="#86878a"/></linearGradient>
<linearGradient id="g295" gradientUnits="userSpaceOnUse" x1="0" y1="1018.2" x2="0" y2="1039.6"><stop offset="0" stop-color="#e7e8eb"/><stop offset=".45" stop-color="#b6b7ba"/><stop offset="1" stop-color="#86878a"/></linearGradient>
<linearGradient id="g296" gradientUnits="userSpaceOnUse" x1="0" y1="1017.8" x2="0" y2="1039.2"><stop offset="0" stop-color="#e7e8eb"/><stop offset=".45" stop-color="#b6b7ba"/><stop offset="1" stop-color="#86878a"/></linearGradient>
<linearGradient id="g297" gradientUnits="userSpaceOnUse" x1="0" y1="1017.5" x2="0" y2="1038.7"><stop offset="0" stop-color="#e7e8eb"/><stop offset=".45" stop-color="#b6b7ba"/><stop offset="1" stop-color="#86878a"/></linearGradient>
<linearGradient id="g298" gradientUnits="userSpaceOnUse" x1="0" y1="1017.1" x2="0" y2="1038.3"><stop offset="0" stop-color="#e7e8eb"/><stop offset=".45" stop-color="#b6b7ba"/><stop offset="1" stop-color="#86878a"/></linearGradient>
<linearGradient id="g299" gradientUnits="userSpaceOnUse" x1="0" y1="1016.8" x2="0" y2="1037.9"><stop offset="0" stop-color="#e7e8eb"/><stop offset=".45" stop-color="#b6b7ba"/><stop offset="1" stop-color="#86878a"/></linearGradient>
<linearGradient id="g300" gradientUnits="userSpaceOnUse" x1="0" y1="1016.4" x2="0" y2="1037.5"><stop offset="0" stop-color="#e7e8eb"/><stop offset=".45" stop-color="#b6b7ba"/><stop offset="1" stop-color="#86878a"/></linearGradient>
<linearGradient id="g301" gradientUnits="userSpaceOnUse" x1="0" y1="1016.1" x2="0" y2="1037.1"><stop offset="0" stop-color="#e7e8eb"/><stop offset=".45" stop-color="#b6b7ba"/><stop offset="1" stop-color="#86878a"/></linearGradient>
<linearGradient id="g302" gradientUnits="userSpaceOnUse" x1="0" y1="1015.8" x2="0" y2="1036.7"><stop offset="0" stop-color="#e7e8eb"/><stop offset=".45" stop-color="#b6b7ba"/><stop offset="1" stop-color="#86878a"/></linearGradient>
<linearGradient id="g303" gradientUnits="userSpaceOnUse" x1="0" y1="1015.4" x2="0" y2="1036.2"><stop offset="0" stop-color="#e7e8eb"/><stop offset=".45" stop-color="#b6b7ba"/><stop offset="1" stop-color="#86878a"/></linearGradient>
<linearGradient id="g304" gradientUnits="userSpaceOnUse" x1="0" y1="1015.1" x2="0" y2="1035.8"><stop offset="0" stop-color="#e7e8eb"/><stop offset=".45" stop-color="#b6b7ba"/><stop offset="1" stop-color="#86878a"/></linearGradient>
<linearGradient id="g305" gradientUnits="userSpaceOnUse" x1="0" y1="1014.8" x2="0" y2="1035.4"><stop offset="0" stop-color="#e7e8eb"/><stop offset=".45" stop-color="#b6b7ba"/><stop offset="1" stop-color="#86878a"/></linearGradient>
<linearGradient id="g306" gradientUnits="userSpaceOnUse" x1="0" y1="1014.4" x2="0" y2="1035.1"><stop offset="0" stop-color="#e7e8eb"/><stop offset=".45" stop-color="#b6b7ba"/><stop offset="1" stop-color="#86878a"/></linearGradient>
<linearGradient id="g307" gradientUnits="userSpaceOnUse" x1="0" y1="1014.1" x2="0" y2="1034.7"><stop offset="0" stop-color="#e7e8eb"/><stop offset=".45" stop-color="#b6b7ba"/><stop offset="1" stop-color="#86878a"/></linearGradient>
<linearGradient id="g308" gradientUnits="userSpaceOnUse" x1="0" y1="1013.8" x2="0" y2="1034.3"><stop offset="0" stop-color="#e7e8eb"/><stop offset=".45" stop-color="#b6b7ba"/><stop offset="1" stop-color="#86878a"/></linearGradient>
<linearGradient id="g309" gradientUnits="userSpaceOnUse" x1="0" y1="1013.5" x2="0" y2="1033.9"><stop offset="0" stop-color="#e7e8eb"/><stop offset=".45" stop-color="#b6b7ba"/><stop offset="1" stop-color="#86878a"/></linearGradient>
<linearGradient id="g310" gradientUnits="userSpaceOnUse" x1="0" y1="1013.2" x2="0" y2="1033.5"><stop offset="0" stop-color="#e7e8eb"/><stop offset=".45" stop-color="#b6b7ba"/><stop offset="1" stop-color="#86878a"/></linearGradient>
<linearGradient id="g311" gradientUnits="userSpaceOnUse" x1="0" y1="1012.8" x2="0" y2="1033.2"><stop offset="0" stop-color="#e7e8eb"/><stop offset=".45" stop-color="#b6b7ba"/><stop offset="1" stop-color="#86878a"/></linearGradient>
<linearGradient id="g312" gradientUnits="userSpaceOnUse" x1="0" y1="1012.5" x2="0" y2="1032.8"><stop offset="0" stop-color="#e7e8eb"/><stop offset=".45" stop-color="#b6b7ba"/><stop offset="1" stop-color="#86878a"/></linearGradient>
<linearGradient id="g313" gradientUnits="userSpaceOnUse" x1="0" y1="1012.2" x2="0" y2="1032.4"><stop offset="0" stop-color="#e7e8eb"/><stop offset=".45" stop-color="#b6b7ba"/><stop offset="1" stop-color="#86878a"/></linearGradient>
<linearGradient id="g314" gradientUnits="userSpaceOnUse" x1="0" y1="1011.9" x2="0" y2="1032.1"><stop offset="0" stop-color="#e7e8eb"/><stop offset=".45" stop-color="#b6b7ba"/><stop offset="1" stop-color="#86878a"/></linearGradient>
<linearGradient id="g315" gradientUnits="userSpaceOnUse" x1="0" y1="1011.7" x2="0" y2="1031.8"><stop offset="0" stop-color="#e7e8eb"/><stop offset=".45" stop-color="#b6b7ba"/><stop offset="1" stop-color="#86878a"/></linearGradient>
<linearGradient id="g316" gradientUnits="userSpaceOnUse" x1="0" y1="1011.4" x2="0" y2="1031.4"><stop offset="0" stop-color="#e7e8eb"/><stop offset=".45" stop-color="#b6b7ba"/><stop offset="1" stop-color="#86878a"/></linearGradient>
<linearGradient id="g317" gradientUnits="userSpaceOnUse" x1="0" y1="1011.1" x2="0" y2="1031.1"><stop offset="0" stop-color="#e7e8eb"/><stop offset=".45" stop-color="#b6b7ba"/><stop offset="1" stop-color="#86878a"/></linearGradient>
<linearGradient id="g318" gradientUnits="userSpaceOnUse" x1="0" y1="1010.8" x2="0" y2="1030.8"><stop offset="0" stop-color="#e7e8eb"/><stop offset=".45" stop-color="#b6b7ba"/><stop offset="1" stop-color="#86878a"/></linearGradient>
<linearGradient id="g319" gradientUnits="userSpaceOnUse" x1="0" y1="1010.6" x2="0" y2="1030.5"><stop offset="0" stop-color="#e7e8eb"/><stop offset=".45" stop-color="#b6b7ba"/><stop offset="1" stop-color="#86878a"/></linearGradient>
<linearGradient id="g320" gradientUnits="userSpaceOnUse" x1="0" y1="1010.3" x2="0" y2="1030.2"><stop offset="0" stop-color="#e7e8eb"/><stop offset=".45" stop-color="#b6b7ba"/><stop offset="1" stop-color="#86878a"/></linearGradient>
<linearGradient id="g321" gradientUnits="userSpaceOnUse" x1="0" y1="1010.0" x2="0" y2="1029.9"><stop offset="0" stop-color="#e7e8eb"/><stop offset=".45" stop-color="#b6b7ba"/><stop offset="1" stop-color="#86878a"/></linearGradient>
<linearGradient id="g322" gradientUnits="userSpaceOnUse" x1="0" y1="1009.8" x2="0" y2="1029.6"><stop offset="0" stop-color="#e7e8eb"/><stop offset=".45" stop-color="#b6b7ba"/><stop offset="1" stop-color="#86878a"/></linearGradient>
<linearGradient id="g323" gradientUnits="userSpaceOnUse" x1="0" y1="1009.5" x2="0" y2="1029.3"><stop offset="0" stop-color="#e7e8eb"/><stop offset=".45" stop-color="#b6b7ba"/><stop offset="1" stop-color="#86878a"/></linearGradient>
<linearGradient id="g324" gradientUnits="userSpaceOnUse" x1="0" y1="1009.3" x2="0" y2="1029.0"><stop offset="0" stop-color="#e7e8eb"/><stop offset=".45" stop-color="#b6b7ba"/><stop offset="1" stop-color="#86878a"/></linearGradient>
<linearGradient id="g325" gradientUnits="userSpaceOnUse" x1="0" y1="1009.0" x2="0" y2="1028.7"><stop offset="0" stop-color="#e7e8eb"/><stop offset=".45" stop-color="#b6b7ba"/><stop offset="1" stop-color="#86878a"/></linearGradient>
<linearGradient id="g326" gradientUnits="userSpaceOnUse" x1="0" y1="1008.8" x2="0" y2="1028.4"><stop offset="0" stop-color="#e7e8eb"/><stop offset=".45" stop-color="#b6b7ba"/><stop offset="1" stop-color="#86878a"/></linearGradient>
<linearGradient id="g327" gradientUnits="userSpaceOnUse" x1="0" y1="1008.5" x2="0" y2="1028.2"><stop offset="0" stop-color="#e7e8eb"/><stop offset=".45" stop-color="#b6b7ba"/><stop offset="1" stop-color="#86878a"/></linearGradient>
<linearGradient id="g328" gradientUnits="userSpaceOnUse" x1="0" y1="1008.3" x2="0" y2="1027.9"><stop offset="0" stop-color="#e7e8eb"/><stop offset=".45" stop-color="#b6b7ba"/><stop offset="1" stop-color="#86878a"/></linearGradient>
<linearGradient id="g329" gradientUnits="userSpaceOnUse" x1="0" y1="1008.0" x2="0" y2="1027.6"><stop offset="0" stop-color="#e7e8eb"/><stop offset=".45" stop-color="#b6b7ba"/><stop offset="1" stop-color="#86878a"/></linearGradient>
<linearGradient id="g330" gradientUnits="userSpaceOnUse" x1="0" y1="1007.8" x2="0" y2="1027.4"><stop offset="0" stop-color="#e7e8eb"/><stop offset=".45" stop-color="#b6b7ba"/><stop offset="1" stop-color="#86878a"/></linearGradient>
<linearGradient id="g331" gradientUnits="userSpaceOnUse" x1="0" y1="1007.5" x2="0" y2="1027.1"><stop offset="0" stop-color="#e7e8eb"/><stop offset=".45" stop-color="#b6b7ba"/><stop offset="1" stop-color="#86878a"/></linearGradient>
<linearGradient id="g332" gradientUnits="userSpaceOnUse" x1="0" y1="1007.3" x2="0" y2="1026.8"><stop offset="0" stop-color="#e7e8eb"/><stop offset=".45" stop-color="#b6b7ba"/><stop offset="1" stop-color="#86878a"/></linearGradient>
<linearGradient id="g333" gradientUnits="userSpaceOnUse" x1="0" y1="1007.1" x2="0" y2="1026.6"><stop offset="0" stop-color="#e7e8eb"/><stop offset=".45" stop-color="#b6b7ba"/><stop offset="1" stop-color="#86878a"/></linearGradient>
<linearGradient id="g334" gradientUnits="userSpaceOnUse" x1="0" y1="1006.8" x2="0" y2="1026.3"><stop offset="0" stop-color="#e7e8eb"/><stop offset=".45" stop-color="#b6b7ba"/><stop offset="1" stop-color="#86878a"/></linearGradient>
<linearGradient id="g335" gradientUnits="userSpaceOnUse" x1="0" y1="1006.6" x2="0" y2="1026.1"><stop offset="0" stop-color="#e7e8eb"/><stop offset=".45" stop-color="#b6b7ba"/><stop offset="1" stop-color="#86878a"/></linearGradient>
<linearGradient id="g336" gradientUnits="userSpaceOnUse" x1="0" y1="1006.4" x2="0" y2="1025.8"><stop offset="0" stop-color="#e7e8eb"/><stop offset=".45" stop-color="#b6b7ba"/><stop offset="1" stop-color="#86878a"/></linearGradient>
<linearGradient id="g337" gradientUnits="userSpaceOnUse" x1="0" y1="1006.2" x2="0" y2="1025.6"><stop offset="0" stop-color="#e7e8eb"/><stop offset=".45" stop-color="#b6b7ba"/><stop offset="1" stop-color="#86878a"/></linearGradient>
<linearGradient id="g338" gradientUnits="userSpaceOnUse" x1="0" y1="1005.9" x2="0" y2="1025.3"><stop offset="0" stop-color="#e7e8eb"/><stop offset=".45" stop-color="#b6b7ba"/><stop offset="1" stop-color="#86878a"/></linearGradient>
<linearGradient id="g339" gradientUnits="userSpaceOnUse" x1="0" y1="1005.7" x2="0" y2="1025.1"><stop offset="0" stop-color="#e7e8eb"/><stop offset=".45" stop-color="#b6b7ba"/><stop offset="1" stop-color="#86878a"/></linearGradient>
<linearGradient id="g340" gradientUnits="userSpaceOnUse" x1="0" y1="1005.5" x2="0" y2="1024.8"><stop offset="0" stop-color="#e7e8eb"/><stop offset=".45" stop-color="#b6b7ba"/><stop offset="1" stop-color="#86878a"/></linearGradient>
<linearGradient id="g341" gradientUnits="userSpaceOnUse" x1="0" y1="1005.3" x2="0" y2="1024.6"><stop offset="0" stop-color="#e7e8eb"/><stop offset=".45" stop-color="#b6b7ba"/><stop offset="1" stop-color="#86878a"/></linearGradient>
<linearGradient id="g342" gradientUnits="userSpaceOnUse" x1="0" y1="1005.1" x2="0" y2="1024.3"><stop offset="0" stop-color="#e7e8eb"/><stop offset=".45" stop-color="#b6b7ba"/><stop offset="1" stop-color="#86878a"/></linearGradient>
<linearGradient id="g343" gradientUnits="userSpaceOnUse" x1="0" y1="1004.8" x2="0" y2="1024.1"><stop offset="0" stop-color="#e7e8eb"/><stop offset=".45" stop-color="#b6b7ba"/><stop offset="1" stop-color="#86878a"/></linearGradient>
<linearGradient id="g344" gradientUnits="userSpaceOnUse" x1="0" y1="1004.6" x2="0" y2="1023.9"><stop offset="0" stop-color="#e7e8eb"/><stop offset=".45" stop-color="#b6b7ba"/><stop offset="1" stop-color="#86878a"/></linearGradient>
<linearGradient id="g345" gradientUnits="userSpaceOnUse" x1="0" y1="1004.4" x2="0" y2="1023.6"><stop offset="0" stop-color="#e7e8eb"/><stop offset=".45" stop-color="#b6b7ba"/><stop offset="1" stop-color="#86878a"/></linearGradient>
<linearGradient id="g346" gradientUnits="userSpaceOnUse" x1="0" y1="1004.2" x2="0" y2="1023.4"><stop offset="0" stop-color="#e7e8eb"/><stop offset=".45" stop-color="#b6b7ba"/><stop offset="1" stop-color="#86878a"/></linearGradient>
<linearGradient id="g347" gradientUnits="userSpaceOnUse" x1="0" y1="1004.0" x2="0" y2="1023.2"><stop offset="0" stop-color="#e7e8eb"/><stop offset=".45" stop-color="#b6b7ba"/><stop offset="1" stop-color="#86878a"/></linearGradient>
<linearGradient id="g348" gradientUnits="userSpaceOnUse" x1="0" y1="1003.8" x2="0" y2="1023.0"><stop offset="0" stop-color="#e7e8eb"/><stop offset=".45" stop-color="#b6b7ba"/><stop offset="1" stop-color="#86878a"/></linearGradient>
<linearGradient id="g349" gradientUnits="userSpaceOnUse" x1="0" y1="1003.6" x2="0" y2="1022.7"><stop offset="0" stop-color="#e7e8eb"/><stop offset=".45" stop-color="#b6b7ba"/><stop offset="1" stop-color="#86878a"/></linearGradient>
<linearGradient id="g350" gradientUnits="userSpaceOnUse" x1="0" y1="1003.4" x2="0" y2="1022.5"><stop offset="0" stop-color="#e7e8eb"/><stop offset=".45" stop-color="#b6b7ba"/><stop offset="1" stop-color="#86878a"/></linearGradient>
<linearGradient id="g351" gradientUnits="userSpaceOnUse" x1="0" y1="1003.1" x2="0" y2="1022.3"><stop offset="0" stop-color="#e7e8eb"/><stop offset=".45" stop-color="#b6b7ba"/><stop offset="1" stop-color="#86878a"/></linearGradient>
<linearGradient id="g352" gradientUnits="userSpaceOnUse" x1="0" y1="1002.9" x2="0" y2="1022.0"><stop offset="0" stop-color="#e7e8eb"/><stop offset=".45" stop-color="#b6b7ba"/><stop offset="1" stop-color="#86878a"/></linearGradient>
<linearGradient id="g353" gradientUnits="userSpaceOnUse" x1="0" y1="1002.7" x2="0" y2="1021.8"><stop offset="0" stop-color="#e7e8eb"/><stop offset=".45" stop-color="#b6b7ba"/><stop offset="1" stop-color="#86878a"/></linearGradient>
<linearGradient id="g354" gradientUnits="userSpaceOnUse" x1="0" y1="1002.5" x2="0" y2="1021.6"><stop offset="0" stop-color="#e7e8eb"/><stop offset=".45" stop-color="#b6b7ba"/><stop offset="1" stop-color="#86878a"/></linearGradient>
<linearGradient id="g355" gradientUnits="userSpaceOnUse" x1="0" y1="1002.3" x2="0" y2="1021.4"><stop offset="0" stop-color="#e7e8eb"/><stop offset=".45" stop-color="#b6b7ba"/><stop offset="1" stop-color="#86878a"/></linearGradient>
<linearGradient id="g356" gradientUnits="userSpaceOnUse" x1="0" y1="1002.1" x2="0" y2="1021.2"><stop offset="0" stop-color="#e7e8eb"/><stop offset=".45" stop-color="#b6b7ba"/><stop offset="1" stop-color="#86878a"/></linearGradient>
<linearGradient id="g357" gradientUnits="userSpaceOnUse" x1="0" y1="1001.9" x2="0" y2="1020.9"><stop offset="0" stop-color="#e7e8eb"/><stop offset=".45" stop-color="#b6b7ba"/><stop offset="1" stop-color="#86878a"/></linearGradient>
<linearGradient id="g358" gradientUnits="userSpaceOnUse" x1="0" y1="1001.7" x2="0" y2="1020.7"><stop offset="0" stop-color="#e7e8eb"/><stop offset=".45" stop-color="#b6b7ba"/><stop offset="1" stop-color="#86878a"/></linearGradient>
<linearGradient id="g359" gradientUnits="userSpaceOnUse" x1="0" y1="1001.5" x2="0" y2="1020.5"><stop offset="0" stop-color="#e7e8eb"/><stop offset=".45" stop-color="#b6b7ba"/><stop offset="1" stop-color="#86878a"/></linearGradient>
<linearGradient id="g360" gradientUnits="userSpaceOnUse" x1="0" y1="1001.3" x2="0" y2="1020.3"><stop offset="0" stop-color="#e7e8eb"/><stop offset=".45" stop-color="#b6b7ba"/><stop offset="1" stop-color="#86878a"/></linearGradient>
<linearGradient id="g361" gradientUnits="userSpaceOnUse" x1="0" y1="1001.1" x2="0" y2="1020.0"><stop offset="0" stop-color="#e7e8eb"/><stop offset=".45" stop-color="#b6b7ba"/><stop offset="1" stop-color="#86878a"/></linearGradient>
<linearGradient id="g362" gradientUnits="userSpaceOnUse" x1="0" y1="1000.9" x2="0" y2="1019.8"><stop offset="0" stop-color="#e7e8eb"/><stop offset=".45" stop-color="#b6b7ba"/><stop offset="1" stop-color="#86878a"/></linearGradient>
<linearGradient id="g363" gradientUnits="userSpaceOnUse" x1="0" y1="1000.7" x2="0" y2="1019.6"><stop offset="0" stop-color="#e7e8eb"/><stop offset=".45" stop-color="#b6b7ba"/><stop offset="1" stop-color="#86878a"/></linearGradient>
<linearGradient id="g364" gradientUnits="userSpaceOnUse" x1="0" y1="1000.5" x2="0" y2="1019.4"><stop offset="0" stop-color="#e7e8eb"/><stop offset=".45" stop-color="#b6b7ba"/><stop offset="1" stop-color="#86878a"/></linearGradient>
<linearGradient id="g365" gradientUnits="userSpaceOnUse" x1="0" y1="1000.2" x2="0" y2="1019.2"><stop offset="0" stop-color="#e7e8eb"/><stop offset=".45" stop-color="#b6b7ba"/><stop offset="1" stop-color="#86878a"/></linearGradient>
<linearGradient id="g366" gradientUnits="userSpaceOnUse" x1="0" y1="1000.0" x2="0" y2="1018.9"><stop offset="0" stop-color="#e7e8eb"/><stop offset=".45" stop-color="#b6b7ba"/><stop offset="1" stop-color="#86878a"/></linearGradient>
<linearGradient id="g367" gradientUnits="userSpaceOnUse" x1="0" y1="999.8" x2="0" y2="1018.7"><stop offset="0" stop-color="#e7e8eb"/><stop offset=".45" stop-color="#b6b7ba"/><stop offset="1" stop-color="#86878a"/></linearGradient>
<linearGradient id="g368" gradientUnits="userSpaceOnUse" x1="0" y1="999.6" x2="0" y2="1018.5"><stop offset="0" stop-color="#e7e8eb"/><stop offset=".45" stop-color="#b6b7ba"/><stop offset="1" stop-color="#86878a"/></linearGradient>
<linearGradient id="g369" gradientUnits="userSpaceOnUse" x1="0" y1="999.4" x2="0" y2="1018.3"><stop offset="0" stop-color="#e7e8eb"/><stop offset=".45" stop-color="#b6b7ba"/><stop offset="1" stop-color="#86878a"/></linearGradient>
<linearGradient id="g370" gradientUnits="userSpaceOnUse" x1="0" y1="999.2" x2="0" y2="1018.0"><stop offset="0" stop-color="#e7e8eb"/><stop offset=".45" stop-color="#b6b7ba"/><stop offset="1" stop-color="#86878a"/></linearGradient>
<linearGradient id="g371" gradientUnits="userSpaceOnUse" x1="0" y1="999.0" x2="0" y2="1017.8"><stop offset="0" stop-color="#e7e8eb"/><stop offset=".45" stop-color="#b6b7ba"/><stop offset="1" stop-color="#86878a"/></linearGradient>
<linearGradient id="g372" gradientUnits="userSpaceOnUse" x1="0" y1="998.8" x2="0" y2="1017.6"><stop offset="0" stop-color="#e7e8eb"/><stop offset=".45" stop-color="#b6b7ba"/><stop offset="1" stop-color="#86878a"/></linearGradient>
<linearGradient id="g373" gradientUnits="userSpaceOnUse" x1="0" y1="998.6" x2="0" y2="1017.3"><stop offset="0" stop-color="#e7e8eb"/><stop offset=".45" stop-color="#b6b7ba"/><stop offset="1" stop-color="#86878a"/></linearGradient>
<linearGradient id="g374" gradientUnits="userSpaceOnUse" x1="0" y1="998.4" x2="0" y2="1017.1"><stop offset="0" stop-color="#e7e8eb"/><stop offset=".45" stop-color="#b6b7ba"/><stop offset="1" stop-color="#86878a"/></linearGradient>
<linearGradient id="g375" gradientUnits="userSpaceOnUse" x1="0" y1="998.2" x2="0" y2="1016.9"><stop offset="0" stop-color="#e7e8eb"/><stop offset=".45" stop-color="#b6b7ba"/><stop offset="1" stop-color="#86878a"/></linearGradient>
<linearGradient id="g376" gradientUnits="userSpaceOnUse" x1="0" y1="997.9" x2="0" y2="1016.6"><stop offset="0" stop-color="#e7e8eb"/><stop offset=".45" stop-color="#b6b7ba"/><stop offset="1" stop-color="#86878a"/></linearGradient>
<linearGradient id="g377" gradientUnits="userSpaceOnUse" x1="0" y1="997.7" x2="0" y2="1016.4"><stop offset="0" stop-color="#e7e8eb"/><stop offset=".45" stop-color="#b6b7ba"/><stop offset="1" stop-color="#86878a"/></linearGradient>
<linearGradient id="g378" gradientUnits="userSpaceOnUse" x1="0" y1="997.5" x2="0" y2="1016.2"><stop offset="0" stop-color="#e7e8eb"/><stop offset=".45" stop-color="#b6b7ba"/><stop offset="1" stop-color="#86878a"/></linearGradient>
<linearGradient id="g379" gradientUnits="userSpaceOnUse" x1="0" y1="997.3" x2="0" y2="1015.9"><stop offset="0" stop-color="#e7e8eb"/><stop offset=".45" stop-color="#b6b7ba"/><stop offset="1" stop-color="#86878a"/></linearGradient>
<linearGradient id="g380" gradientUnits="userSpaceOnUse" x1="0" y1="997.1" x2="0" y2="1015.7"><stop offset="0" stop-color="#e7e8eb"/><stop offset=".45" stop-color="#b6b7ba"/><stop offset="1" stop-color="#86878a"/></linearGradient>
<linearGradient id="g381" gradientUnits="userSpaceOnUse" x1="0" y1="996.9" x2="0" y2="1015.4"><stop offset="0" stop-color="#e7e8eb"/><stop offset=".45" stop-color="#b6b7ba"/><stop offset="1" stop-color="#86878a"/></linearGradient>
<linearGradient id="g382" gradientUnits="userSpaceOnUse" x1="0" y1="996.6" x2="0" y2="1015.2"><stop offset="0" stop-color="#e7e8eb"/><stop offset=".45" stop-color="#b6b7ba"/><stop offset="1" stop-color="#86878a"/></linearGradient>
<linearGradient id="g383" gradientUnits="userSpaceOnUse" x1="0" y1="996.4" x2="0" y2="1014.9"><stop offset="0" stop-color="#e7e8eb"/><stop offset=".45" stop-color="#b6b7ba"/><stop offset="1" stop-color="#86878a"/></linearGradient>
<linearGradient id="g384" gradientUnits="userSpaceOnUse" x1="0" y1="996.2" x2="0" y2="1014.7"><stop offset="0" stop-color="#e7e8eb"/><stop offset=".45" stop-color="#b6b7ba"/><stop offset="1" stop-color="#86878a"/></linearGradient>
<linearGradient id="g385" gradientUnits="userSpaceOnUse" x1="0" y1="996.0" x2="0" y2="1014.4"><stop offset="0" stop-color="#e7e8eb"/><stop offset=".45" stop-color="#b6b7ba"/><stop offset="1" stop-color="#86878a"/></linearGradient>
<linearGradient id="g386" gradientUnits="userSpaceOnUse" x1="0" y1="995.7" x2="0" y2="1014.2"><stop offset="0" stop-color="#e7e8eb"/><stop offset=".45" stop-color="#b6b7ba"/><stop offset="1" stop-color="#86878a"/></linearGradient>
<linearGradient id="g387" gradientUnits="userSpaceOnUse" x1="0" y1="995.5" x2="0" y2="1013.9"><stop offset="0" stop-color="#e7e8eb"/><stop offset=".45" stop-color="#b6b7ba"/><stop offset="1" stop-color="#86878a"/></linearGradient>
<linearGradient id="g388" gradientUnits="userSpaceOnUse" x1="0" y1="995.3" x2="0" y2="1013.6"><stop offset="0" stop-color="#e7e8eb"/><stop offset=".45" stop-color="#b6b7ba"/><stop offset="1" stop-color="#86878a"/></linearGradient>
<linearGradient id="g389" gradientUnits="userSpaceOnUse" x1="0" y1="995.0" x2="0" y2="1013.4"><stop offset="0" stop-color="#e7e8eb"/><stop offset=".45" stop-color="#b6b7ba"/><stop offset="1" stop-color="#86878a"/></linearGradient>
<linearGradient id="g390" gradientUnits="userSpaceOnUse" x1="0" y1="994.8" x2="0" y2="1013.1"><stop offset="0" stop-color="#e7e8eb"/><stop offset=".45" stop-color="#b6b7ba"/><stop offset="1" stop-color="#86878a"/></linearGradient>
<linearGradient id="g391" gradientUnits="userSpaceOnUse" x1="0" y1="994.6" x2="0" y2="1012.8"><stop offset="0" stop-color="#e7e8eb"/><stop offset=".45" stop-color="#b6b7ba"/><stop offset="1" stop-color="#86878a"/></linearGradient>
<linearGradient id="g392" gradientUnits="userSpaceOnUse" x1="0" y1="994.3" x2="0" y2="1012.5"><stop offset="0" stop-color="#e7e8eb"/><stop offset=".45" stop-color="#b6b7ba"/><stop offset="1" stop-color="#86878a"/></linearGradient>
<linearGradient id="g393" gradientUnits="userSpaceOnUse" x1="0" y1="994.1" x2="0" y2="1012.3"><stop offset="0" stop-color="#e7e8eb"/><stop offset=".45" stop-color="#b6b7ba"/><stop offset="1" stop-color="#86878a"/></linearGradient>
<linearGradient id="g394" gradientUnits="userSpaceOnUse" x1="0" y1="993.8" x2="0" y2="1012.0"><stop offset="0" stop-color="#e7e8eb"/><stop offset=".45" stop-color="#b6b7ba"/><stop offset="1" stop-color="#86878a"/></linearGradient>
<linearGradient id="g395" gradientUnits="userSpaceOnUse" x1="0" y1="993.6" x2="0" y2="1011.7"><stop offset="0" stop-color="#e7e8eb"/><stop offset=".45" stop-color="#b6b7ba"/><stop offset="1" stop-color="#86878a"/></linearGradient>
<linearGradient id="g396" gradientUnits="userSpaceOnUse" x1="0" y1="993.3" x2="0" y2="1011.4"><stop offset="0" stop-color="#e7e8eb"/><stop offset=".45" stop-color="#b6b7ba"/><stop offset="1" stop-color="#86878a"/></linearGradient>
<linearGradient id="g397" gradientUnits="userSpaceOnUse" x1="0" y1="993.1" x2="0" y2="1011.1"><stop offset="0" stop-color="#e7e8eb"/><stop offset=".45" stop-color="#b6b7ba"/><stop offset="1" stop-color="#86878a"/></linearGradient>
<linearGradient id="g398" gradientUnits="userSpaceOnUse" x1="0" y1="992.8" x2="0" y2="1010.8"><stop offset="0" stop-color="#e7e8eb"/><stop offset=".45" stop-color="#b6b7ba"/><stop offset="1" stop-color="#86878a"/></linearGradient>
<linearGradient id="g399" gradientUnits="userSpaceOnUse" x1="0" y1="992.6" x2="0" y2="1010.5"><stop offset="0" stop-color="#e7e8eb"/><stop offset=".45" stop-color="#b6b7ba"/><stop offset="1" stop-color="#86878a"/></linearGradient>
<linearGradient id="g400" gradientUnits="userSpaceOnUse" x1="0" y1="992.3" x2="0" y2="1010.2"><stop offset="0" stop-color="#e7e8eb"/><stop offset=".45" stop-color="#b6b7ba"/><stop offset="1" stop-color="#86878a"/></linearGradient>
<linearGradient id="g401" gradientUnits="userSpaceOnUse" x1="0" y1="992.1" x2="0" y2="1009.9"><stop offset="0" stop-color="#e7e8eb"/><stop offset=".45" stop-color="#b6b7ba"/><stop offset="1" stop-color="#86878a"/></linearGradient>
<linearGradient id="g402" gradientUnits="userSpaceOnUse" x1="0" y1="991.8" x2="0" y2="1009.6"><stop offset="0" stop-color="#e7e8eb"/><stop offset=".45" stop-color="#b6b7ba"/><stop offset="1" stop-color="#86878a"/></linearGradient>
<linearGradient id="g403" gradientUnits="userSpaceOnUse" x1="0" y1="991.6" x2="0" y2="1009.2"><stop offset="0" stop-color="#e7e8eb"/><stop offset=".45" stop-color="#b6b7ba"/><stop offset="1" stop-color="#86878a"/></linearGradient>
<linearGradient id="g404" gradientUnits="userSpaceOnUse" x1="0" y1="991.3" x2="0" y2="1008.9"><stop offset="0" stop-color="#e7e8eb"/><stop offset=".45" stop-color="#b6b7ba"/><stop offset="1" stop-color="#86878a"/></linearGradient>
<linearGradient id="g405" gradientUnits="userSpaceOnUse" x1="0" y1="991.0" x2="0" y2="1008.6"><stop offset="0" stop-color="#e7e8eb"/><stop offset=".45" stop-color="#b6b7ba"/><stop offset="1" stop-color="#86878a"/></linearGradient>
<linearGradient id="g406" gradientUnits="userSpaceOnUse" x1="0" y1="990.8" x2="0" y2="1008.3"><stop offset="0" stop-color="#e7e8eb"/><stop offset=".45" stop-color="#b6b7ba"/><stop offset="1" stop-color="#86878a"/></linearGradient>
<linearGradient id="g407" gradientUnits="userSpaceOnUse" x1="0" y1="990.5" x2="0" y2="1007.9"><stop offset="0" stop-color="#e7e8eb"/><stop offset=".45" stop-color="#b6b7ba"/><stop offset="1" stop-color="#86878a"/></linearGradient>
<linearGradient id="g408" gradientUnits="userSpaceOnUse" x1="0" y1="990.3" x2="0" y2="1007.6"><stop offset="0" stop-color="#e7e8eb"/><stop offset=".45" stop-color="#b6b7ba"/><stop offset="1" stop-color="#86878a"/></linearGradient>
<linearGradient id="g409" gradientUnits="userSpaceOnUse" x1="0" y1="990.0" x2="0" y2="1007.3"><stop offset="0" stop-color="#e7e8eb"/><stop offset=".45" stop-color="#b6b7ba"/><stop offset="1" stop-color="#86878a"/></linearGradient>
<linearGradient id="g410" gradientUnits="userSpaceOnUse" x1="0" y1="989.7" x2="0" y2="1006.9"><stop offset="0" stop-color="#e7e8eb"/><stop offset=".45" stop-color="#b6b7ba"/><stop offset="1" stop-color="#86878a"/></linearGradient>
<linearGradient id="g411" gradientUnits="userSpaceOnUse" x1="0" y1="989.4" x2="0" y2="1006.6"><stop offset="0" stop-color="#e7e8eb"/><stop offset=".45" stop-color="#b6b7ba"/><stop offset="1" stop-color="#86878a"/></linearGradient>
<linearGradient id="g412" gradientUnits="userSpaceOnUse" x1="0" y1="989.2" x2="0" y2="1006.2"><stop offset="0" stop-color="#e7e8eb"/><stop offset=".45" stop-color="#b6b7ba"/><stop offset="1" stop-color="#86878a"/></linearGradient>
<linearGradient id="g413" gradientUnits="userSpaceOnUse" x1="0" y1="988.9" x2="0" y2="1005.9"><stop offset="0" stop-color="#e7e8eb"/><stop offset=".45" stop-color="#b6b7ba"/><stop offset="1" stop-color="#86878a"/></linearGradient>
<linearGradient id="g414" gradientUnits="userSpaceOnUse" x1="0" y1="988.6" x2="0" y2="1005.5"><stop offset="0" stop-color="#e7e8eb"/><stop offset=".45" stop-color="#b6b7ba"/><stop offset="1" stop-color="#86878a"/></linearGradient>
<linearGradient id="g415" gradientUnits="userSpaceOnUse" x1="0" y1="988.3" x2="0" y2="1005.1"><stop offset="0" stop-color="#e7e8eb"/><stop offset=".45" stop-color="#b6b7ba"/><stop offset="1" stop-color="#86878a"/></linearGradient>
<linearGradient id="g416" gradientUnits="userSpaceOnUse" x1="0" y1="988.0" x2="0" y2="1004.8"><stop offset="0" stop-color="#e7e8eb"/><stop offset=".45" stop-color="#b6b7ba"/><stop offset="1" stop-color="#86878a"/></linearGradient>
<linearGradient id="g417" gradientUnits="userSpaceOnUse" x1="0" y1="987.8" x2="0" y2="1004.4"><stop offset="0" stop-color="#e7e8eb"/><stop offset=".45" stop-color="#b6b7ba"/><stop offset="1" stop-color="#86878a"/></linearGradient>
<linearGradient id="g418" gradientUnits="userSpaceOnUse" x1="0" y1="987.5" x2="0" y2="1004.0"><stop offset="0" stop-color="#e7e8eb"/><stop offset=".45" stop-color="#b6b7ba"/><stop offset="1" stop-color="#86878a"/></linearGradient>
<linearGradient id="g419" gradientUnits="userSpaceOnUse" x1="0" y1="987.2" x2="0" y2="1003.7"><stop offset="0" stop-color="#e7e8eb"/><stop offset=".45" stop-color="#b6b7ba"/><stop offset="1" stop-color="#86878a"/></linearGradient>
<linearGradient id="g420" gradientUnits="userSpaceOnUse" x1="0" y1="986.9" x2="0" y2="1003.3"><stop offset="0" stop-color="#e7e8eb"/><stop offset=".45" stop-color="#b6b7ba"/><stop offset="1" stop-color="#86878a"/></linearGradient>
<linearGradient id="g421" gradientUnits="userSpaceOnUse" x1="0" y1="986.6" x2="0" y2="1002.9"><stop offset="0" stop-color="#e7e8eb"/><stop offset=".45" stop-color="#b6b7ba"/><stop offset="1" stop-color="#86878a"/></linearGradient>
<linearGradient id="g422" gradientUnits="userSpaceOnUse" x1="0" y1="986.3" x2="0" y2="1002.5"><stop offset="0" stop-color="#e7e8eb"/><stop offset=".45" stop-color="#b6b7ba"/><stop offset="1" stop-color="#86878a"/></linearGradient>
<linearGradient id="g423" gradientUnits="userSpaceOnUse" x1="0" y1="985.9" x2="0" y2="1002.1"><stop offset="0" stop-color="#e7e8eb"/><stop offset=".45" stop-color="#b6b7ba"/><stop offset="1" stop-color="#86878a"/></linearGradient>
<linearGradient id="g424" gradientUnits="userSpaceOnUse" x1="0" y1="985.6" x2="0" y2="1001.8"><stop offset="0" stop-color="#e7e8eb"/><stop offset=".45" stop-color="#b6b7ba"/><stop offset="1" stop-color="#86878a"/></linearGradient>
<linearGradient id="g425" gradientUnits="userSpaceOnUse" x1="0" y1="985.3" x2="0" y2="1001.4"><stop offset="0" stop-color="#e7e8eb"/><stop offset=".45" stop-color="#b6b7ba"/><stop offset="1" stop-color="#86878a"/></linearGradient>
<linearGradient id="g426" gradientUnits="userSpaceOnUse" x1="0" y1="985.0" x2="0" y2="1001.0"><stop offset="0" stop-color="#e7e8eb"/><stop offset=".45" stop-color="#b6b7ba"/><stop offset="1" stop-color="#86878a"/></linearGradient>
<linearGradient id="g427" gradientUnits="userSpaceOnUse" x1="0" y1="984.6" x2="0" y2="1000.6"><stop offset="0" stop-color="#e7e8eb"/><stop offset=".45" stop-color="#b6b7ba"/><stop offset="1" stop-color="#86878a"/></linearGradient>
<linearGradient id="g428" gradientUnits="userSpaceOnUse" x1="0" y1="984.3" x2="0" y2="1000.2"><stop offset="0" stop-color="#e7e8eb"/><stop offset=".45" stop-color="#b6b7ba"/><stop offset="1" stop-color="#86878a"/></linearGradient>
<linearGradient id="g429" gradientUnits="userSpaceOnUse" x1="0" y1="984.0" x2="0" y2="999.8"><stop offset="0" stop-color="#e7e8eb"/><stop offset=".45" stop-color="#b6b7ba"/><stop offset="1" stop-color="#86878a"/></linearGradient>
<linearGradient id="g430" gradientUnits="userSpaceOnUse" x1="0" y1="983.7" x2="0" y2="999.5"><stop offset="0" stop-color="#e7e8eb"/><stop offset=".45" stop-color="#b6b7ba"/><stop offset="1" stop-color="#86878a"/></linearGradient>
<linearGradient id="g431" gradientUnits="userSpaceOnUse" x1="0" y1="983.4" x2="0" y2="999.1"><stop offset="0" stop-color="#e7e8eb"/><stop offset=".45" stop-color="#b6b7ba"/><stop offset="1" stop-color="#86878a"/></linearGradient>
<linearGradient id="g432" gradientUnits="userSpaceOnUse" x1="0" y1="983.0" x2="0" y2="998.7"><stop offset="0" stop-color="#e7e8eb"/><stop offset=".45" stop-color="#b6b7ba"/><stop offset="1" stop-color="#86878a"/></linearGradient>
<linearGradient id="g433" gradientUnits="userSpaceOnUse" x1="0" y1="982.7" x2="0" y2="998.4"><stop offset="0" stop-color="#e7e8eb"/><stop offset=".45" stop-color="#b6b7ba"/><stop offset="1" stop-color="#86878a"/></linearGradient>
<linearGradient id="g434" gradientUnits="userSpaceOnUse" x1="0" y1="982.4" x2="0" y2="998.0"><stop offset="0" stop-color="#e7e8eb"/><stop offset=".45" stop-color="#b6b7ba"/><stop offset="1" stop-color="#86878a"/></linearGradient>
<linearGradient id="g435" gradientUnits="userSpaceOnUse" x1="0" y1="982.1" x2="0" y2="997.7"><stop offset="0" stop-color="#e7e8eb"/><stop offset=".45" stop-color="#b6b7ba"/><stop offset="1" stop-color="#86878a"/></linearGradient>
<linearGradient id="g436" gradientUnits="userSpaceOnUse" x1="0" y1="981.8" x2="0" y2="997.3"><stop offset="0" stop-color="#e7e8eb"/><stop offset=".45" stop-color="#b6b7ba"/><stop offset="1" stop-color="#86878a"/></linearGradient>
<linearGradient id="g437" gradientUnits="userSpaceOnUse" x1="0" y1="981.4" x2="0" y2="997.0"><stop offset="0" stop-color="#e7e8eb"/><stop offset=".45" stop-color="#b6b7ba"/><stop offset="1" stop-color="#86878a"/></linearGradient>
<linearGradient id="g438" gradientUnits="userSpaceOnUse" x1="0" y1="981.1" x2="0" y2="996.6"><stop offset="0" stop-color="#e7e8eb"/><stop offset=".45" stop-color="#b6b7ba"/><stop offset="1" stop-color="#86878a"/></linearGradient>
<linearGradient id="g439" gradientUnits="userSpaceOnUse" x1="0" y1="980.8" x2="0" y2="996.3"><stop offset="0" stop-color="#e7e8eb"/><stop offset=".45" stop-color="#b6b7ba"/><stop offset="1" stop-color="#86878a"/></linearGradient>
<linearGradient id="g440" gradientUnits="userSpaceOnUse" x1="0" y1="980.5" x2="0" y2="995.9"><stop offset="0" stop-color="#e7e8eb"/><stop offset=".45" stop-color="#b6b7ba"/><stop offset="1" stop-color="#86878a"/></linearGradient>
<linearGradient id="g441" gradientUnits="userSpaceOnUse" x1="0" y1="980.1" x2="0" y2="995.6"><stop offset="0" stop-color="#e7e8eb"/><stop offset=".45" stop-color="#b6b7ba"/><stop offset="1" stop-color="#86878a"/></linearGradient>
<linearGradient id="g442" gradientUnits="userSpaceOnUse" x1="0" y1="979.8" x2="0" y2="995.2"><stop offset="0" stop-color="#e7e8eb"/><stop offset=".45" stop-color="#b6b7ba"/><stop offset="1" stop-color="#86878a"/></linearGradient>
<linearGradient id="g443" gradientUnits="userSpaceOnUse" x1="0" y1="979.5" x2="0" y2="994.8"><stop offset="0" stop-color="#e7e8eb"/><stop offset=".45" stop-color="#b6b7ba"/><stop offset="1" stop-color="#86878a"/></linearGradient>
<linearGradient id="g444" gradientUnits="userSpaceOnUse" x1="0" y1="979.1" x2="0" y2="994.5"><stop offset="0" stop-color="#e7e8eb"/><stop offset=".45" stop-color="#b6b7ba"/><stop offset="1" stop-color="#86878a"/></linearGradient>
<linearGradient id="g445" gradientUnits="userSpaceOnUse" x1="0" y1="978.8" x2="0" y2="994.1"><stop offset="0" stop-color="#e7e8eb"/><stop offset=".45" stop-color="#b6b7ba"/><stop offset="1" stop-color="#86878a"/></linearGradient>
<linearGradient id="g446" gradientUnits="userSpaceOnUse" x1="0" y1="978.4" x2="0" y2="993.7"><stop offset="0" stop-color="#e7e8eb"/><stop offset=".45" stop-color="#b6b7ba"/><stop offset="1" stop-color="#86878a"/></linearGradient>
<linearGradient id="g447" gradientUnits="userSpaceOnUse" x1="0" y1="978.0" x2="0" y2="993.4"><stop offset="0" stop-color="#e7e8eb"/><stop offset=".45" stop-color="#b6b7ba"/><stop offset="1" stop-color="#86878a"/></linearGradient>
<linearGradient id="g448" gradientUnits="userSpaceOnUse" x1="0" y1="977.7" x2="0" y2="993.0"><stop offset="0" stop-color="#e7e8eb"/><stop offset=".45" stop-color="#b6b7ba"/><stop offset="1" stop-color="#86878a"/></linearGradient>
<linearGradient id="g449" gradientUnits="userSpaceOnUse" x1="0" y1="977.3" x2="0" y2="992.6"><stop offset="0" stop-color="#e7e8eb"/><stop offset=".45" stop-color="#b6b7ba"/><stop offset="1" stop-color="#86878a"/></linearGradient>
<linearGradient id="g450" gradientUnits="userSpaceOnUse" x1="0" y1="976.9" x2="0" y2="992.2"><stop offset="0" stop-color="#e7e8eb"/><stop offset=".45" stop-color="#b6b7ba"/><stop offset="1" stop-color="#86878a"/></linearGradient>
<linearGradient id="g451" gradientUnits="userSpaceOnUse" x1="0" y1="976.5" x2="0" y2="991.8"><stop offset="0" stop-color="#e7e8eb"/><stop offset=".45" stop-color="#b6b7ba"/><stop offset="1" stop-color="#86878a"/></linearGradient>
<linearGradient id="g452" gradientUnits="userSpaceOnUse" x1="0" y1="976.1" x2="0" y2="991.3"><stop offset="0" stop-color="#e7e8eb"/><stop offset=".45" stop-color="#b6b7ba"/><stop offset="1" stop-color="#86878a"/></linearGradient>
<linearGradient id="g453" gradientUnits="userSpaceOnUse" x1="0" y1="975.7" x2="0" y2="990.9"><stop offset="0" stop-color="#e7e8eb"/><stop offset=".45" stop-color="#b6b7ba"/><stop offset="1" stop-color="#86878a"/></linearGradient>
<linearGradient id="g454" gradientUnits="userSpaceOnUse" x1="0" y1="975.3" x2="0" y2="990.5"><stop offset="0" stop-color="#e7e8eb"/><stop offset=".45" stop-color="#b6b7ba"/><stop offset="1" stop-color="#86878a"/></linearGradient>
<linearGradient id="g455" gradientUnits="userSpaceOnUse" x1="0" y1="974.9" x2="0" y2="990.0"><stop offset="0" stop-color="#e7e8eb"/><stop offset=".45" stop-color="#b6b7ba"/><stop offset="1" stop-color="#86878a"/></linearGradient>
<linearGradient id="g456" gradientUnits="userSpaceOnUse" x1="0" y1="974.5" x2="0" y2="989.5"><stop offset="0" stop-color="#e7e8eb"/><stop offset=".45" stop-color="#b6b7ba"/><stop offset="1" stop-color="#86878a"/></linearGradient>
<linearGradient id="g457" gradientUnits="userSpaceOnUse" x1="0" y1="974.0" x2="0" y2="989.0"><stop offset="0" stop-color="#e7e8eb"/><stop offset=".45" stop-color="#b6b7ba"/><stop offset="1" stop-color="#86878a"/></linearGradient>
<linearGradient id="g458" gradientUnits="userSpaceOnUse" x1="0" y1="973.6" x2="0" y2="988.5"><stop offset="0" stop-color="#e7e8eb"/><stop offset=".45" stop-color="#b6b7ba"/><stop offset="1" stop-color="#86878a"/></linearGradient>
<linearGradient id="g459" gradientUnits="userSpaceOnUse" x1="0" y1="973.1" x2="0" y2="988.0"><stop offset="0" stop-color="#e7e8eb"/><stop offset=".45" stop-color="#b6b7ba"/><stop offset="1" stop-color="#86878a"/></linearGradient>
<linearGradient id="g460" gradientUnits="userSpaceOnUse" x1="0" y1="972.6" x2="0" y2="987.5"><stop offset="0" stop-color="#e7e8eb"/><stop offset=".45" stop-color="#b6b7ba"/><stop offset="1" stop-color="#86878a"/></linearGradient>
<linearGradient id="g461" gradientUnits="userSpaceOnUse" x1="0" y1="972.1" x2="0" y2="987.0"><stop offset="0" stop-color="#e7e8eb"/><stop offset=".45" stop-color="#b6b7ba"/><stop offset="1" stop-color="#86878a"/></linearGradient>
<linearGradient id="g462" gradientUnits="userSpaceOnUse" x1="0" y1="971.6" x2="0" y2="986.4"><stop offset="0" stop-color="#e7e8eb"/><stop offset=".45" stop-color="#b6b7ba"/><stop offset="1" stop-color="#86878a"/></linearGradient>
<linearGradient id="g463" gradientUnits="userSpaceOnUse" x1="0" y1="971.1" x2="0" y2="985.8"><stop offset="0" stop-color="#e7e8eb"/><stop offset=".45" stop-color="#b6b7ba"/><stop offset="1" stop-color="#86878a"/></linearGradient>
<linearGradient id="g464" gradientUnits="userSpaceOnUse" x1="0" y1="970.6" x2="0" y2="985.2"><stop offset="0" stop-color="#e7e8eb"/><stop offset=".45" stop-color="#b6b7ba"/><stop offset="1" stop-color="#86878a"/></linearGradient>
<linearGradient id="g465" gradientUnits="userSpaceOnUse" x1="0" y1="970.0" x2="0" y2="984.6"><stop offset="0" stop-color="#e7e8eb"/><stop offset=".45" stop-color="#b6b7ba"/><stop offset="1" stop-color="#86878a"/></linearGradient>
<linearGradient id="g466" gradientUnits="userSpaceOnUse" x1="0" y1="969.5" x2="0" y2="984.0"><stop offset="0" stop-color="#e7e8eb"/><stop offset=".45" stop-color="#b6b7ba"/><stop offset="1" stop-color="#86878a"/></linearGradient>
<linearGradient id="g467" gradientUnits="userSpaceOnUse" x1="0" y1="968.9" x2="0" y2="983.3"><stop offset="0" stop-color="#e7e8eb"/><stop offset=".45" stop-color="#b6b7ba"/><stop offset="1" stop-color="#86878a"/></linearGradient>
<linearGradient id="g468" gradientUnits="userSpaceOnUse" x1="0" y1="968.3" x2="0" y2="982.7"><stop offset="0" stop-color="#e7e8eb"/><stop offset=".45" stop-color="#b6b7ba"/><stop offset="1" stop-color="#86878a"/></linearGradient>
<linearGradient id="g469" gradientUnits="userSpaceOnUse" x1="0" y1="967.7" x2="0" y2="982.0"><stop offset="0" stop-color="#e7e8eb"/><stop offset=".45" stop-color="#b6b7ba"/><stop offset="1" stop-color="#86878a"/></linearGradient>
<linearGradient id="g470" gradientUnits="userSpaceOnUse" x1="0" y1="967.1" x2="0" y2="981.2"><stop offset="0" stop-color="#e7e8eb"/><stop offset=".45" stop-color="#b6b7ba"/><stop offset="1" stop-color="#86878a"/></linearGradient>
<linearGradient id="g471" gradientUnits="userSpaceOnUse" x1="0" y1="966.4" x2="0" y2="980.5"><stop offset="0" stop-color="#e7e8eb"/><stop offset=".45" stop-color="#b6b7ba"/><stop offset="1" stop-color="#86878a"/></linearGradient>
<linearGradient id="g472" gradientUnits="userSpaceOnUse" x1="0" y1="965.8" x2="0" y2="979.7"><stop offset="0" stop-color="#e7e8eb"/><stop offset=".45" stop-color="#b6b7ba"/><stop offset="1" stop-color="#86878a"/></linearGradient>
<linearGradient id="g473" gradientUnits="userSpaceOnUse" x1="0" y1="965.0" x2="0" y2="978.9"><stop offset="0" stop-color="#e7e8eb"/><stop offset=".45" stop-color="#b6b7ba"/><stop offset="1" stop-color="#86878a"/></linearGradient>
<linearGradient id="g474" gradientUnits="userSpaceOnUse" x1="0" y1="964.3" x2="0" y2="977.9"><stop offset="0" stop-color="#e7e8eb"/><stop offset=".45" stop-color="#b6b7ba"/><stop offset="1" stop-color="#86878a"/></linearGradient>
<linearGradient id="g475" gradientUnits="userSpaceOnUse" x1="0" y1="963.4" x2="0" y2="976.8"><stop offset="0" stop-color="#e7e8eb"/><stop offset=".45" stop-color="#b6b7ba"/><stop offset="1" stop-color="#86878a"/></linearGradient>
<linearGradient id="g476" gradientUnits="userSpaceOnUse" x1="0" y1="962.5" x2="0" y2="975.6"><stop offset="0" stop-color="#e7e8eb"/><stop offset=".45" stop-color="#b6b7ba"/><stop offset="1" stop-color="#86878a"/></linearGradient>
<linearGradient id="g477" gradientUnits="userSpaceOnUse" x1="0" y1="961.5" x2="0" y2="974.4"><stop offset="0" stop-color="#e7e8eb"/><stop offset=".45" stop-color="#b6b7ba"/><stop offset="1" stop-color="#86878a"/></linearGradient>
<linearGradient id="g478" gradientUnits="userSpaceOnUse" x1="0" y1="960.5" x2="0" y2="973.0"><stop offset="0" stop-color="#e7e8eb"/><stop offset=".45" stop-color="#b6b7ba"/><stop offset="1" stop-color="#86878a"/></linearGradient>
<linearGradient id="g479" gradientUnits="userSpaceOnUse" x1="0" y1="959.4" x2="0" y2="971.5"><stop offset="0" stop-color="#e7e8eb"/><stop offset=".45" stop-color="#b6b7ba"/><stop offset="1" stop-color="#86878a"/></linearGradient>
<linearGradient id="g480" gradientUnits="userSpaceOnUse" x1="0" y1="958.3" x2="0" y2="970.0"><stop offset="0" stop-color="#e7e8eb"/><stop offset=".45" stop-color="#b6b7ba"/><stop offset="1" stop-color="#86878a"/></linearGradient>
<linearGradient id="g481" gradientUnits="userSpaceOnUse" x1="0" y1="957.1" x2="0" y2="968.4"><stop offset="0" stop-color="#e7e8eb"/><stop offset=".45" stop-color="#b6b7ba"/><stop offset="1" stop-color="#86878a"/></linearGradient>
<linearGradient id="g482" gradientUnits="userSpaceOnUse" x1="0" y1="955.9" x2="0" y2="966.7"><stop offset="0" stop-color="#e7e8eb"/><stop offset=".45" stop-color="#b6b7ba"/><stop offset="1" stop-color="#86878a"/></linearGradient>
<linearGradient id="g483" gradientUnits="userSpaceOnUse" x1="0" y1="954.6" x2="0" y2="964.9"><stop offset="0" stop-color="#e7e8eb"/><stop offset=".45" stop-color="#b6b7ba"/><stop offset="1" stop-color="#86878a"/></linearGradient>
<linearGradient id="g484" gradientUnits="userSpaceOnUse" x1="0" y1="953.3" x2="0" y2="963.1"><stop offset="0" stop-color="#e7e8eb"/><stop offset=".45" stop-color="#b6b7ba"/><stop offset="1" stop-color="#86878a"/></linearGradient>
<linearGradient id="g485" gradientUnits="userSpaceOnUse" x1="0" y1="951.9" x2="0" y2="961.2"><stop offset="0" stop-color="#e7e8eb"/><stop offset=".45" stop-color="#b6b7ba"/><stop offset="1" stop-color="#86878a"/></linearGradient>
<linearGradient id="g486" gradientUnits="userSpaceOnUse" x1="0" y1="950.5" x2="0" y2="959.3"><stop offset="0" stop-color="#e7e8eb"/><stop offset=".45" stop-color="#b6b7ba"/><stop offset="1" stop-color="#86878a"/></linearGradient>
<linearGradient id="g487" gradientUnits="userSpaceOnUse" x1="0" y1="949.1" x2="0" y2="957.3"><stop offset="0" stop-color="#e7e8eb"/><stop offset=".45" stop-color="#b6b7ba"/><stop offset="1" stop-color="#86878a"/></linearGradient>
<linearGradient id="g488" gradientUnits="userSpaceOnUse" x1="0" y1="947.6" x2="0" y2="955.2"><stop offset="0" stop-color="#e7e8eb"/><stop offset=".45" stop-color="#b6b7ba"/><stop offset="1" stop-color="#86878a"/></linearGradient>
<linearGradient id="g489" gradientUnits="userSpaceOnUse" x1="0" y1="946.1" x2="0" y2="953.1"><stop offset="0" stop-color="#e7e8eb"/><stop offset=".45" stop-color="#b6b7ba"/><stop offset="1" stop-color="#86878a"/></linearGradient>
<linearGradient id="g490" gradientUnits="userSpaceOnUse" x1="0" y1="944.6" x2="0" y2="951.0"><stop offset="0" stop-color="#e7e8eb"/><stop offset=".45" stop-color="#b6b7ba"/><stop offset="1" stop-color="#86878a"/></linearGradient>
<linearGradient id="g491" gradientUnits="userSpaceOnUse" x1="0" y1="943.1" x2="0" y2="948.8"><stop offset="0" stop-color="#e7e8eb"/><stop offset=".45" stop-color="#b6b7ba"/><stop offset="1" stop-color="#86878a"/></linearGradient>
<linearGradient id="g492" gradientUnits="userSpaceOnUse" x1="0" y1="941.5" x2="0" y2="946.6"><stop offset="0" stop-color="#e7e8eb"/><stop offset=".45" stop-color="#b6b7ba"/><stop offset="1" stop-color="#86878a"/></linearGradient>
<linearGradient id="g493" gradientUnits="userSpaceOnUse" x1="0" y1="939.9" x2="0" y2="944.4"><stop offset="0" stop-color="#e7e8eb"/><stop offset=".45" stop-color="#b6b7ba"/><stop offset="1" stop-color="#86878a"/></linearGradient>
<linearGradient id="g494" gradientUnits="userSpaceOnUse" x1="0" y1="938.3" x2="0" y2="942.1"><stop offset="0" stop-color="#e7e8eb"/><stop offset=".45" stop-color="#b6b7ba"/><stop offset="1" stop-color="#86878a"/></linearGradient>
<linearGradient id="g495" gradientUnits="userSpaceOnUse" x1="0" y1="936.7" x2="0" y2="939.8"><stop offset="0" stop-color="#e7e8eb"/><stop offset=".45" stop-color="#b6b7ba"/><stop offset="1" stop-color="#86878a"/></linearGradient>
<linearGradient id="g496" gradientUnits="userSpaceOnUse" x1="0" y1="935.0" x2="0" y2="937.5"><stop offset="0" stop-color="#e7e8eb"/><stop offset=".45" stop-color="#b6b7ba"/><stop offset="1" stop-color="#86878a"/></linearGradient>
<linearGradient id="g497" gradientUnits="userSpaceOnUse" x1="0" y1="933.4" x2="0" y2="935.2"><stop offset="0" stop-color="#e7e8eb"/><stop offset=".45" stop-color="#b6b7ba"/><stop offset="1" stop-color="#86878a"/></linearGradient>
<linearGradient id="g498" gradientUnits="userSpaceOnUse" x1="0" y1="931.7" x2="0" y2="932.8"><stop offset="0" stop-color="#e7e8eb"/><stop offset=".45" stop-color="#b6b7ba"/><stop offset="1" stop-color="#86878a"/></linearGradient>
<linearGradient id="g499" gradientUnits="userSpaceOnUse" x1="0" y1="930.1" x2="0" y2="931.1"><stop offset="0" stop-color="#e7e8eb"/><stop offset=".45" stop-color="#b6b7ba"/><stop offset="1" stop-color="#86878a"/></linearGradient>
<linearGradient id="g500" gradientUnits="userSpaceOnUse" x1="0" y1="929.1" x2="0" y2="930.1"><stop offset="0" stop-color="#e7e8eb"/><stop offset=".45" stop-color="#b6b7ba"/><stop offset="1" stop-color="#86878a"/></linearGradient>
</defs>
<g clip-path="url(#bc)">
<rect x="0" y="880" width="2880" height="260" fill="#86878a"/>
<rect x="81.3" y="880" width="10.0" height="160.2" fill="url(#g0)" shape-rendering="crispEdges"/>
<rect x="89.3" y="880" width="10.0" height="160.7" fill="url(#g1)" shape-rendering="crispEdges"/>
<rect x="97.3" y="880" width="10.0" height="161.1" fill="url(#g2)" shape-rendering="crispEdges"/>
<rect x="105.3" y="880" width="10.0" height="161.6" fill="url(#g3)" shape-rendering="crispEdges"/>
<rect x="113.3" y="880" width="10.0" height="162.0" fill="url(#g4)" shape-rendering="crispEdges"/>
<rect x="121.3" y="880" width="10.0" height="162.5" fill="url(#g5)" shape-rendering="crispEdges"/>
<rect x="129.3" y="880" width="10.0" height="162.9" fill="url(#g6)" shape-rendering="crispEdges"/>
<rect x="137.3" y="880" width="10.0" height="163.4" fill="url(#g7)" shape-rendering="crispEdges"/>
<rect x="145.3" y="880" width="10.0" height="163.8" fill="url(#g8)" shape-rendering="crispEdges"/>
<rect x="153.3" y="880" width="10.0" height="164.2" fill="url(#g9)" shape-rendering="crispEdges"/>
<rect x="161.3" y="880" width="10.0" height="164.7" fill="url(#g10)" shape-rendering="crispEdges"/>
<rect x="169.3" y="880" width="10.0" height="165.1" fill="url(#g11)" shape-rendering="crispEdges"/>
<rect x="177.3" y="880" width="10.0" height="165.6" fill="url(#g12)" shape-rendering="crispEdges"/>
<rect x="185.3" y="880" width="10.0" height="166.0" fill="url(#g13)" shape-rendering="crispEdges"/>
<rect x="193.3" y="880" width="10.0" height="166.4" fill="url(#g14)" shape-rendering="crispEdges"/>
<rect x="201.3" y="880" width="10.0" height="166.8" fill="url(#g15)" shape-rendering="crispEdges"/>
<rect x="209.3" y="880" width="10.0" height="167.3" fill="url(#g16)" shape-rendering="crispEdges"/>
<rect x="217.3" y="880" width="10.0" height="167.7" fill="url(#g17)" shape-rendering="crispEdges"/>
<rect x="225.3" y="880" width="10.0" height="168.1" fill="url(#g18)" shape-rendering="crispEdges"/>
<rect x="233.3" y="880" width="10.0" height="168.5" fill="url(#g19)" shape-rendering="crispEdges"/>
<rect x="241.3" y="880" width="10.0" height="169.0" fill="url(#g20)" shape-rendering="crispEdges"/>
<rect x="249.3" y="880" width="10.0" height="169.4" fill="url(#g21)" shape-rendering="crispEdges"/>
<rect x="257.3" y="880" width="10.0" height="169.8" fill="url(#g22)" shape-rendering="crispEdges"/>
<rect x="265.3" y="880" width="10.0" height="170.2" fill="url(#g23)" shape-rendering="crispEdges"/>
<rect x="273.3" y="880" width="10.0" height="170.7" fill="url(#g24)" shape-rendering="crispEdges"/>
<rect x="281.3" y="880" width="10.0" height="171.1" fill="url(#g25)" shape-rendering="crispEdges"/>
<rect x="289.3" y="880" width="10.0" height="171.5" fill="url(#g26)" shape-rendering="crispEdges"/>
<rect x="297.3" y="880" width="10.0" height="172.0" fill="url(#g27)" shape-rendering="crispEdges"/>
<rect x="305.3" y="880" width="10.0" height="172.4" fill="url(#g28)" shape-rendering="crispEdges"/>
<rect x="313.3" y="880" width="10.0" height="172.8" fill="url(#g29)" shape-rendering="crispEdges"/>
<rect x="321.3" y="880" width="10.0" height="173.2" fill="url(#g30)" shape-rendering="crispEdges"/>
<rect x="329.3" y="880" width="10.0" height="173.7" fill="url(#g31)" shape-rendering="crispEdges"/>
<rect x="337.3" y="880" width="10.0" height="174.1" fill="url(#g32)" shape-rendering="crispEdges"/>
<rect x="345.3" y="880" width="10.0" height="174.5" fill="url(#g33)" shape-rendering="crispEdges"/>
<rect x="353.3" y="880" width="10.0" height="174.9" fill="url(#g34)" shape-rendering="crispEdges"/>
<rect x="361.3" y="880" width="10.0" height="175.3" fill="url(#g35)" shape-rendering="crispEdges"/>
<rect x="369.3" y="880" width="10.0" height="175.8" fill="url(#g36)" shape-rendering="crispEdges"/>
<rect x="377.3" y="880" width="10.0" height="176.2" fill="url(#g37)" shape-rendering="crispEdges"/>
<rect x="385.3" y="880" width="10.0" height="176.6" fill="url(#g38)" shape-rendering="crispEdges"/>
<rect x="393.3" y="880" width="10.0" height="177.0" fill="url(#g39)" shape-rendering="crispEdges"/>
<rect x="401.3" y="880" width="10.0" height="177.4" fill="url(#g40)" shape-rendering="crispEdges"/>
<rect x="409.3" y="880" width="10.0" height="177.8" fill="url(#g41)" shape-rendering="crispEdges"/>
<rect x="417.3" y="880" width="10.0" height="178.2" fill="url(#g42)" shape-rendering="crispEdges"/>
<rect x="425.3" y="880" width="10.0" height="178.6" fill="url(#g43)" shape-rendering="crispEdges"/>
<rect x="433.3" y="880" width="10.0" height="179.0" fill="url(#g44)" shape-rendering="crispEdges"/>
<rect x="441.3" y="880" width="10.0" height="179.4" fill="url(#g45)" shape-rendering="crispEdges"/>
<rect x="449.3" y="880" width="10.0" height="179.8" fill="url(#g46)" shape-rendering="crispEdges"/>
<rect x="457.3" y="880" width="10.0" height="180.1" fill="url(#g47)" shape-rendering="crispEdges"/>
<rect x="465.3" y="880" width="10.0" height="180.5" fill="url(#g48)" shape-rendering="crispEdges"/>
<rect x="473.3" y="880" width="10.0" height="180.9" fill="url(#g49)" shape-rendering="crispEdges"/>
<rect x="481.3" y="880" width="10.0" height="181.3" fill="url(#g50)" shape-rendering="crispEdges"/>
<rect x="489.3" y="880" width="10.0" height="181.6" fill="url(#g51)" shape-rendering="crispEdges"/>
<rect x="497.3" y="880" width="10.0" height="182.0" fill="url(#g52)" shape-rendering="crispEdges"/>
<rect x="505.3" y="880" width="10.0" height="182.4" fill="url(#g53)" shape-rendering="crispEdges"/>
<rect x="513.3" y="880" width="10.0" height="182.7" fill="url(#g54)" shape-rendering="crispEdges"/>
<rect x="521.3" y="880" width="10.0" height="183.1" fill="url(#g55)" shape-rendering="crispEdges"/>
<rect x="529.3" y="880" width="10.0" height="183.4" fill="url(#g56)" shape-rendering="crispEdges"/>
<rect x="537.3" y="880" width="10.0" height="183.8" fill="url(#g57)" shape-rendering="crispEdges"/>
<rect x="545.3" y="880" width="10.0" height="184.1" fill="url(#g58)" shape-rendering="crispEdges"/>
<rect x="553.3" y="880" width="10.0" height="184.4" fill="url(#g59)" shape-rendering="crispEdges"/>
<rect x="561.3" y="880" width="10.0" height="184.8" fill="url(#g60)" shape-rendering="crispEdges"/>
<rect x="569.3" y="880" width="10.0" height="185.1" fill="url(#g61)" shape-rendering="crispEdges"/>
<rect x="577.3" y="880" width="10.0" height="185.4" fill="url(#g62)" shape-rendering="crispEdges"/>
<rect x="585.3" y="880" width="10.0" height="185.8" fill="url(#g63)" shape-rendering="crispEdges"/>
<rect x="593.3" y="880" width="10.0" height="186.1" fill="url(#g64)" shape-rendering="crispEdges"/>
<rect x="601.3" y="880" width="10.0" height="186.4" fill="url(#g65)" shape-rendering="crispEdges"/>
<rect x="609.3" y="880" width="10.0" height="186.8" fill="url(#g66)" shape-rendering="crispEdges"/>
<rect x="617.3" y="880" width="10.0" height="187.1" fill="url(#g67)" shape-rendering="crispEdges"/>
<rect x="625.3" y="880" width="10.0" height="187.5" fill="url(#g68)" shape-rendering="crispEdges"/>
<rect x="633.3" y="880" width="10.0" height="187.8" fill="url(#g69)" shape-rendering="crispEdges"/>
<rect x="641.3" y="880" width="10.0" height="188.2" fill="url(#g70)" shape-rendering="crispEdges"/>
<rect x="649.3" y="880" width="10.0" height="188.5" fill="url(#g71)" shape-rendering="crispEdges"/>
<rect x="657.3" y="880" width="10.0" height="188.9" fill="url(#g72)" shape-rendering="crispEdges"/>
<rect x="665.3" y="880" width="10.0" height="189.2" fill="url(#g73)" shape-rendering="crispEdges"/>
<rect x="673.3" y="880" width="10.0" height="189.5" fill="url(#g74)" shape-rendering="crispEdges"/>
<rect x="681.3" y="880" width="10.0" height="189.9" fill="url(#g75)" shape-rendering="crispEdges"/>
<rect x="689.3" y="880" width="10.0" height="190.2" fill="url(#g76)" shape-rendering="crispEdges"/>
<rect x="697.3" y="880" width="10.0" height="190.6" fill="url(#g77)" shape-rendering="crispEdges"/>
<rect x="705.3" y="880" width="10.0" height="190.9" fill="url(#g78)" shape-rendering="crispEdges"/>
<rect x="713.3" y="880" width="10.0" height="191.3" fill="url(#g79)" shape-rendering="crispEdges"/>
<rect x="721.3" y="880" width="10.0" height="191.6" fill="url(#g80)" shape-rendering="crispEdges"/>
<rect x="729.3" y="880" width="10.0" height="191.9" fill="url(#g81)" shape-rendering="crispEdges"/>
<rect x="737.3" y="880" width="10.0" height="192.3" fill="url(#g82)" shape-rendering="crispEdges"/>
<rect x="745.3" y="880" width="10.0" height="192.6" fill="url(#g83)" shape-rendering="crispEdges"/>
<rect x="753.3" y="880" width="10.0" height="192.9" fill="url(#g84)" shape-rendering="crispEdges"/>
<rect x="761.3" y="880" width="10.0" height="193.2" fill="url(#g85)" shape-rendering="crispEdges"/>
<rect x="769.3" y="880" width="10.0" height="193.5" fill="url(#g86)" shape-rendering="crispEdges"/>
<rect x="777.3" y="880" width="10.0" height="193.9" fill="url(#g87)" shape-rendering="crispEdges"/>
<rect x="785.3" y="880" width="10.0" height="194.2" fill="url(#g88)" shape-rendering="crispEdges"/>
<rect x="793.3" y="880" width="10.0" height="194.5" fill="url(#g89)" shape-rendering="crispEdges"/>
<rect x="801.3" y="880" width="10.0" height="194.8" fill="url(#g90)" shape-rendering="crispEdges"/>
<rect x="809.3" y="880" width="10.0" height="195.1" fill="url(#g91)" shape-rendering="crispEdges"/>
<rect x="817.3" y="880" width="10.0" height="195.3" fill="url(#g92)" shape-rendering="crispEdges"/>
<rect x="825.3" y="880" width="10.0" height="195.6" fill="url(#g93)" shape-rendering="crispEdges"/>
<rect x="833.3" y="880" width="10.0" height="195.9" fill="url(#g94)" shape-rendering="crispEdges"/>
<rect x="841.3" y="880" width="10.0" height="196.2" fill="url(#g95)" shape-rendering="crispEdges"/>
<rect x="849.3" y="880" width="10.0" height="196.4" fill="url(#g96)" shape-rendering="crispEdges"/>
<rect x="857.3" y="880" width="10.0" height="196.7" fill="url(#g97)" shape-rendering="crispEdges"/>
<rect x="865.3" y="880" width="10.0" height="196.9" fill="url(#g98)" shape-rendering="crispEdges"/>
<rect x="873.3" y="880" width="10.0" height="197.1" fill="url(#g99)" shape-rendering="crispEdges"/>
<rect x="881.3" y="880" width="10.0" height="197.4" fill="url(#g100)" shape-rendering="crispEdges"/>
<rect x="889.3" y="880" width="10.0" height="197.6" fill="url(#g101)" shape-rendering="crispEdges"/>
<rect x="897.3" y="880" width="10.0" height="197.8" fill="url(#g102)" shape-rendering="crispEdges"/>
<rect x="905.3" y="880" width="10.0" height="198.0" fill="url(#g103)" shape-rendering="crispEdges"/>
<rect x="913.3" y="880" width="10.0" height="198.2" fill="url(#g104)" shape-rendering="crispEdges"/>
<rect x="921.3" y="880" width="10.0" height="198.4" fill="url(#g105)" shape-rendering="crispEdges"/>
<rect x="929.3" y="880" width="10.0" height="198.5" fill="url(#g106)" shape-rendering="crispEdges"/>
<rect x="937.3" y="880" width="10.0" height="198.7" fill="url(#g107)" shape-rendering="crispEdges"/>
<rect x="945.3" y="880" width="10.0" height="198.8" fill="url(#g108)" shape-rendering="crispEdges"/>
<rect x="953.3" y="880" width="10.0" height="199.0" fill="url(#g109)" shape-rendering="crispEdges"/>
<rect x="961.3" y="880" width="10.0" height="199.1" fill="url(#g110)" shape-rendering="crispEdges"/>
<rect x="969.3" y="880" width="10.0" height="199.2" fill="url(#g111)" shape-rendering="crispEdges"/>
<rect x="977.3" y="880" width="10.0" height="199.3" fill="url(#g112)" shape-rendering="crispEdges"/>
<rect x="985.3" y="880" width="10.0" height="199.4" fill="url(#g113)" shape-rendering="crispEdges"/>
<rect x="993.3" y="880" width="10.0" height="199.5" fill="url(#g114)" shape-rendering="crispEdges"/>
<rect x="1001.3" y="880" width="10.0" height="199.6" fill="url(#g115)" shape-rendering="crispEdges"/>
<rect x="1009.3" y="880" width="10.0" height="199.6" fill="url(#g116)" shape-rendering="crispEdges"/>
<rect x="1017.3" y="880" width="10.0" height="199.7" fill="url(#g117)" shape-rendering="crispEdges"/>
<rect x="1025.3" y="880" width="10.0" height="199.8" fill="url(#g118)" shape-rendering="crispEdges"/>
<rect x="1033.3" y="880" width="10.0" height="199.8" fill="url(#g119)" shape-rendering="crispEdges"/>
<rect x="1041.3" y="880" width="10.0" height="199.9" fill="url(#g120)" shape-rendering="crispEdges"/>
<rect x="1049.3" y="880" width="10.0" height="200.0" fill="url(#g121)" shape-rendering="crispEdges"/>
<rect x="1057.3" y="880" width="10.0" height="200.0" fill="url(#g122)" shape-rendering="crispEdges"/>
<rect x="1065.3" y="880" width="10.0" height="200.1" fill="url(#g123)" shape-rendering="crispEdges"/>
<rect x="1073.3" y="880" width="10.0" height="200.1" fill="url(#g124)" shape-rendering="crispEdges"/>
<rect x="1081.3" y="880" width="10.0" height="200.2" fill="url(#g125)" shape-rendering="crispEdges"/>
<rect x="1089.3" y="880" width="10.0" height="200.3" fill="url(#g126)" shape-rendering="crispEdges"/>
<rect x="1097.3" y="880" width="10.0" height="200.3" fill="url(#g127)" shape-rendering="crispEdges"/>
<rect x="1105.3" y="880" width="10.0" height="200.4" fill="url(#g128)" shape-rendering="crispEdges"/>
<rect x="1113.3" y="880" width="10.0" height="200.4" fill="url(#g129)" shape-rendering="crispEdges"/>
<rect x="1121.3" y="880" width="10.0" height="200.5" fill="url(#g130)" shape-rendering="crispEdges"/>
<rect x="1129.3" y="880" width="10.0" height="200.5" fill="url(#g131)" shape-rendering="crispEdges"/>
<rect x="1137.3" y="880" width="10.0" height="200.6" fill="url(#g132)" shape-rendering="crispEdges"/>
<rect x="1145.3" y="880" width="10.0" height="200.6" fill="url(#g133)" shape-rendering="crispEdges"/>
<rect x="1153.3" y="880" width="10.0" height="200.7" fill="url(#g134)" shape-rendering="crispEdges"/>
<rect x="1161.3" y="880" width="10.0" height="200.7" fill="url(#g135)" shape-rendering="crispEdges"/>
<rect x="1169.3" y="880" width="10.0" height="200.8" fill="url(#g136)" shape-rendering="crispEdges"/>
<rect x="1177.3" y="880" width="10.0" height="200.8" fill="url(#g137)" shape-rendering="crispEdges"/>
<rect x="1185.3" y="880" width="10.0" height="200.9" fill="url(#g138)" shape-rendering="crispEdges"/>
<rect x="1193.3" y="880" width="10.0" height="200.9" fill="url(#g139)" shape-rendering="crispEdges"/>
<rect x="1201.3" y="880" width="10.0" height="201.0" fill="url(#g140)" shape-rendering="crispEdges"/>
<rect x="1209.3" y="880" width="10.0" height="201.0" fill="url(#g141)" shape-rendering="crispEdges"/>
<rect x="1217.3" y="880" width="10.0" height="201.0" fill="url(#g142)" shape-rendering="crispEdges"/>
<rect x="1225.3" y="880" width="10.0" height="201.1" fill="url(#g143)" shape-rendering="crispEdges"/>
<rect x="1233.3" y="880" width="10.0" height="201.1" fill="url(#g144)" shape-rendering="crispEdges"/>
<rect x="1241.3" y="880" width="10.0" height="201.2" fill="url(#g145)" shape-rendering="crispEdges"/>
<rect x="1249.3" y="880" width="10.0" height="201.2" fill="url(#g146)" shape-rendering="crispEdges"/>
<rect x="1257.3" y="880" width="10.0" height="201.2" fill="url(#g147)" shape-rendering="crispEdges"/>
<rect x="1265.3" y="880" width="10.0" height="201.3" fill="url(#g148)" shape-rendering="crispEdges"/>
<rect x="1273.3" y="880" width="10.0" height="201.3" fill="url(#g149)" shape-rendering="crispEdges"/>
<rect x="1281.3" y="880" width="10.0" height="201.3" fill="url(#g150)" shape-rendering="crispEdges"/>
<rect x="1289.3" y="880" width="10.0" height="201.3" fill="url(#g151)" shape-rendering="crispEdges"/>
<rect x="1297.3" y="880" width="10.0" height="201.4" fill="url(#g152)" shape-rendering="crispEdges"/>
<rect x="1305.3" y="880" width="10.0" height="201.4" fill="url(#g153)" shape-rendering="crispEdges"/>
<rect x="1313.3" y="880" width="10.0" height="201.4" fill="url(#g154)" shape-rendering="crispEdges"/>
<rect x="1321.3" y="880" width="10.0" height="201.4" fill="url(#g155)" shape-rendering="crispEdges"/>
<rect x="1329.3" y="880" width="10.0" height="201.4" fill="url(#g156)" shape-rendering="crispEdges"/>
<rect x="1337.3" y="880" width="10.0" height="201.4" fill="url(#g157)" shape-rendering="crispEdges"/>
<rect x="1345.3" y="880" width="10.0" height="201.5" fill="url(#g158)" shape-rendering="crispEdges"/>
<rect x="1353.3" y="880" width="10.0" height="201.5" fill="url(#g159)" shape-rendering="crispEdges"/>
<rect x="1361.3" y="880" width="10.0" height="201.5" fill="url(#g160)" shape-rendering="crispEdges"/>
<rect x="1369.3" y="880" width="10.0" height="201.5" fill="url(#g161)" shape-rendering="crispEdges"/>
<rect x="1377.3" y="880" width="10.0" height="201.5" fill="url(#g162)" shape-rendering="crispEdges"/>
<rect x="1385.3" y="880" width="10.0" height="201.5" fill="url(#g163)" shape-rendering="crispEdges"/>
<rect x="1393.3" y="880" width="10.0" height="201.5" fill="url(#g164)" shape-rendering="crispEdges"/>
<rect x="1401.3" y="880" width="10.0" height="201.5" fill="url(#g165)" shape-rendering="crispEdges"/>
<rect x="1409.3" y="880" width="10.0" height="201.5" fill="url(#g166)" shape-rendering="crispEdges"/>
<rect x="1417.3" y="880" width="10.0" height="201.4" fill="url(#g167)" shape-rendering="crispEdges"/>
<rect x="1425.3" y="880" width="10.0" height="201.4" fill="url(#g168)" shape-rendering="crispEdges"/>
<rect x="1433.3" y="880" width="10.0" height="201.3" fill="url(#g169)" shape-rendering="crispEdges"/>
<rect x="1441.3" y="880" width="10.0" height="201.2" fill="url(#g170)" shape-rendering="crispEdges"/>
<rect x="1449.3" y="880" width="10.0" height="201.2" fill="url(#g171)" shape-rendering="crispEdges"/>
<rect x="1457.3" y="880" width="10.0" height="201.0" fill="url(#g172)" shape-rendering="crispEdges"/>
<rect x="1465.3" y="880" width="10.0" height="200.9" fill="url(#g173)" shape-rendering="crispEdges"/>
<rect x="1473.3" y="880" width="10.0" height="200.8" fill="url(#g174)" shape-rendering="crispEdges"/>
<rect x="1481.3" y="880" width="10.0" height="200.6" fill="url(#g175)" shape-rendering="crispEdges"/>
<rect x="1489.3" y="880" width="10.0" height="200.5" fill="url(#g176)" shape-rendering="crispEdges"/>
<rect x="1497.3" y="880" width="10.0" height="200.3" fill="url(#g177)" shape-rendering="crispEdges"/>
<rect x="1505.3" y="880" width="10.0" height="200.1" fill="url(#g178)" shape-rendering="crispEdges"/>
<rect x="1513.3" y="880" width="10.0" height="199.9" fill="url(#g179)" shape-rendering="crispEdges"/>
<rect x="1521.3" y="880" width="10.0" height="199.7" fill="url(#g180)" shape-rendering="crispEdges"/>
<rect x="1529.3" y="880" width="10.0" height="199.5" fill="url(#g181)" shape-rendering="crispEdges"/>
<rect x="1537.3" y="880" width="10.0" height="199.2" fill="url(#g182)" shape-rendering="crispEdges"/>
<rect x="1545.3" y="880" width="10.0" height="199.0" fill="url(#g183)" shape-rendering="crispEdges"/>
<rect x="1553.3" y="880" width="10.0" height="198.7" fill="url(#g184)" shape-rendering="crispEdges"/>
<rect x="1561.3" y="880" width="10.0" height="198.5" fill="url(#g185)" shape-rendering="crispEdges"/>
<rect x="1569.3" y="880" width="10.0" height="198.2" fill="url(#g186)" shape-rendering="crispEdges"/>
<rect x="1577.3" y="880" width="10.0" height="197.9" fill="url(#g187)" shape-rendering="crispEdges"/>
<rect x="1585.3" y="880" width="10.0" height="197.6" fill="url(#g188)" shape-rendering="crispEdges"/>
<rect x="1593.3" y="880" width="10.0" height="197.3" fill="url(#g189)" shape-rendering="crispEdges"/>
<rect x="1601.3" y="880" width="10.0" height="197.0" fill="url(#g190)" shape-rendering="crispEdges"/>
<rect x="1609.3" y="880" width="10.0" height="196.7" fill="url(#g191)" shape-rendering="crispEdges"/>
<rect x="1617.3" y="880" width="10.0" height="196.3" fill="url(#g192)" shape-rendering="crispEdges"/>
<rect x="1625.3" y="880" width="10.0" height="196.0" fill="url(#g193)" shape-rendering="crispEdges"/>
<rect x="1633.3" y="880" width="10.0" height="195.6" fill="url(#g194)" shape-rendering="crispEdges"/>
<rect x="1641.3" y="880" width="10.0" height="195.3" fill="url(#g195)" shape-rendering="crispEdges"/>
<rect x="1649.3" y="880" width="10.0" height="194.9" fill="url(#g196)" shape-rendering="crispEdges"/>
<rect x="1657.3" y="880" width="10.0" height="194.5" fill="url(#g197)" shape-rendering="crispEdges"/>
<rect x="1665.3" y="880" width="10.0" height="194.1" fill="url(#g198)" shape-rendering="crispEdges"/>
<rect x="1673.3" y="880" width="10.0" height="193.7" fill="url(#g199)" shape-rendering="crispEdges"/>
<rect x="1681.3" y="880" width="10.0" height="193.3" fill="url(#g200)" shape-rendering="crispEdges"/>
<rect x="1689.3" y="880" width="10.0" height="192.9" fill="url(#g201)" shape-rendering="crispEdges"/>
<rect x="1697.3" y="880" width="10.0" height="192.5" fill="url(#g202)" shape-rendering="crispEdges"/>
<rect x="1705.3" y="880" width="10.0" height="192.1" fill="url(#g203)" shape-rendering="crispEdges"/>
<rect x="1713.3" y="880" width="10.0" height="191.7" fill="url(#g204)" shape-rendering="crispEdges"/>
<rect x="1721.3" y="880" width="10.0" height="191.3" fill="url(#g205)" shape-rendering="crispEdges"/>
<rect x="1729.3" y="880" width="10.0" height="190.8" fill="url(#g206)" shape-rendering="crispEdges"/>
<rect x="1737.3" y="880" width="10.0" height="190.4" fill="url(#g207)" shape-rendering="crispEdges"/>
<rect x="1745.3" y="880" width="10.0" height="189.9" fill="url(#g208)" shape-rendering="crispEdges"/>
<rect x="1753.3" y="880" width="10.0" height="189.5" fill="url(#g209)" shape-rendering="crispEdges"/>
<rect x="1761.3" y="880" width="10.0" height="189.0" fill="url(#g210)" shape-rendering="crispEdges"/>
<rect x="1769.3" y="880" width="10.0" height="188.6" fill="url(#g211)" shape-rendering="crispEdges"/>
<rect x="1777.3" y="880" width="10.0" height="188.1" fill="url(#g212)" shape-rendering="crispEdges"/>
<rect x="1785.3" y="880" width="10.0" height="187.7" fill="url(#g213)" shape-rendering="crispEdges"/>
<rect x="1793.3" y="880" width="7.7" height="187.3" fill="url(#g214)" shape-rendering="crispEdges"/>
<rect x="1799.0" y="880" width="5.5" height="187.0" fill="url(#g215)" shape-rendering="crispEdges"/>
<rect x="1802.5" y="880" width="5.5" height="186.8" fill="url(#g216)" shape-rendering="crispEdges"/>
<rect x="1806.0" y="880" width="5.5" height="186.6" fill="url(#g217)" shape-rendering="crispEdges"/>
<rect x="1809.5" y="880" width="5.5" height="186.4" fill="url(#g218)" shape-rendering="crispEdges"/>
<rect x="1813.0" y="880" width="5.5" height="186.2" fill="url(#g219)" shape-rendering="crispEdges"/>
<rect x="1816.5" y="880" width="5.5" height="186.0" fill="url(#g220)" shape-rendering="crispEdges"/>
<rect x="1820.0" y="880" width="5.5" height="185.7" fill="url(#g221)" shape-rendering="crispEdges"/>
<rect x="1823.5" y="880" width="5.5" height="185.5" fill="url(#g222)" shape-rendering="crispEdges"/>
<rect x="1827.0" y="880" width="5.5" height="185.3" fill="url(#g223)" shape-rendering="crispEdges"/>
<rect x="1830.5" y="880" width="5.5" height="185.1" fill="url(#g224)" shape-rendering="crispEdges"/>
<rect x="1834.0" y="880" width="5.5" height="184.9" fill="url(#g225)" shape-rendering="crispEdges"/>
<rect x="1837.5" y="880" width="5.5" height="184.7" fill="url(#g226)" shape-rendering="crispEdges"/>
<rect x="1841.0" y="880" width="5.5" height="184.5" fill="url(#g227)" shape-rendering="crispEdges"/>
<rect x="1844.5" y="880" width="5.5" height="184.3" fill="url(#g228)" shape-rendering="crispEdges"/>
<rect x="1848.0" y="880" width="5.5" height="184.1" fill="url(#g229)" shape-rendering="crispEdges"/>
<rect x="1851.5" y="880" width="5.5" height="183.8" fill="url(#g230)" shape-rendering="crispEdges"/>
<rect x="1855.0" y="880" width="5.5" height="183.6" fill="url(#g231)" shape-rendering="crispEdges"/>
<rect x="1858.5" y="880" width="5.5" height="183.4" fill="url(#g232)" shape-rendering="crispEdges"/>
<rect x="1862.0" y="880" width="5.5" height="183.2" fill="url(#g233)" shape-rendering="crispEdges"/>
<rect x="1865.5" y="880" width="5.5" height="183.0" fill="url(#g234)" shape-rendering="crispEdges"/>
<rect x="1869.0" y="880" width="5.5" height="182.7" fill="url(#g235)" shape-rendering="crispEdges"/>
<rect x="1872.5" y="880" width="5.5" height="182.5" fill="url(#g236)" shape-rendering="crispEdges"/>
<rect x="1876.0" y="880" width="5.5" height="182.2" fill="url(#g237)" shape-rendering="crispEdges"/>
<rect x="1879.5" y="880" width="5.5" height="181.9" fill="url(#g238)" shape-rendering="crispEdges"/>
<rect x="1883.0" y="880" width="5.5" height="181.6" fill="url(#g239)" shape-rendering="crispEdges"/>
<rect x="1886.5" y="880" width="5.5" height="181.3" fill="url(#g240)" shape-rendering="crispEdges"/>
<rect x="1890.0" y="880" width="5.5" height="181.0" fill="url(#g241)" shape-rendering="crispEdges"/>
<rect x="1893.5" y="880" width="5.5" height="180.7" fill="url(#g242)" shape-rendering="crispEdges"/>
<rect x="1897.0" y="880" width="5.5" height="180.4" fill="url(#g243)" shape-rendering="crispEdges"/>
<rect x="1900.5" y="880" width="5.5" height="180.1" fill="url(#g244)" shape-rendering="crispEdges"/>
<rect x="1904.0" y="880" width="5.5" height="179.8" fill="url(#g245)" shape-rendering="crispEdges"/>
<rect x="1907.5" y="880" width="5.5" height="179.4" fill="url(#g246)" shape-rendering="crispEdges"/>
<rect x="1911.0" y="880" width="5.5" height="179.1" fill="url(#g247)" shape-rendering="crispEdges"/>
<rect x="1914.5" y="880" width="5.5" height="178.7" fill="url(#g248)" shape-rendering="crispEdges"/>
<rect x="1918.0" y="880" width="5.5" height="178.4" fill="url(#g249)" shape-rendering="crispEdges"/>
<rect x="1921.5" y="880" width="5.5" height="178.0" fill="url(#g250)" shape-rendering="crispEdges"/>
<rect x="1925.0" y="880" width="5.5" height="177.6" fill="url(#g251)" shape-rendering="crispEdges"/>
<rect x="1928.5" y="880" width="5.5" height="177.3" fill="url(#g252)" shape-rendering="crispEdges"/>
<rect x="1932.0" y="880" width="5.5" height="176.9" fill="url(#g253)" shape-rendering="crispEdges"/>
<rect x="1935.5" y="880" width="5.5" height="176.5" fill="url(#g254)" shape-rendering="crispEdges"/>
<rect x="1939.0" y="880" width="5.5" height="176.1" fill="url(#g255)" shape-rendering="crispEdges"/>
<rect x="1942.5" y="880" width="5.5" height="175.7" fill="url(#g256)" shape-rendering="crispEdges"/>
<rect x="1946.0" y="880" width="5.5" height="175.3" fill="url(#g257)" shape-rendering="crispEdges"/>
<rect x="1949.5" y="880" width="5.5" height="174.9" fill="url(#g258)" shape-rendering="crispEdges"/>
<rect x="1953.0" y="880" width="5.5" height="174.6" fill="url(#g259)" shape-rendering="crispEdges"/>
<rect x="1956.5" y="880" width="5.5" height="174.2" fill="url(#g260)" shape-rendering="crispEdges"/>
<rect x="1960.0" y="880" width="5.5" height="173.8" fill="url(#g261)" shape-rendering="crispEdges"/>
<rect x="1963.5" y="880" width="5.5" height="173.4" fill="url(#g262)" shape-rendering="crispEdges"/>
<rect x="1967.0" y="880" width="5.5" height="173.0" fill="url(#g263)" shape-rendering="crispEdges"/>
<rect x="1970.5" y="880" width="5.5" height="172.6" fill="url(#g264)" shape-rendering="crispEdges"/>
<rect x="1974.0" y="880" width="5.5" height="172.2" fill="url(#g265)" shape-rendering="crispEdges"/>
<rect x="1977.5" y="880" width="5.5" height="171.8" fill="url(#g266)" shape-rendering="crispEdges"/>
<rect x="1981.0" y="880" width="5.5" height="171.4" fill="url(#g267)" shape-rendering="crispEdges"/>
<rect x="1984.5" y="880" width="5.5" height="171.0" fill="url(#g268)" shape-rendering="crispEdges"/>
<rect x="1988.0" y="880" width="5.5" height="170.6" fill="url(#g269)" shape-rendering="crispEdges"/>
<rect x="1991.5" y="880" width="5.5" height="170.2" fill="url(#g270)" shape-rendering="crispEdges"/>
<rect x="1995.0" y="880" width="5.5" height="169.8" fill="url(#g271)" shape-rendering="crispEdges"/>
<rect x="1998.5" y="880" width="5.5" height="169.4" fill="url(#g272)" shape-rendering="crispEdges"/>
<rect x="2002.0" y="880" width="5.5" height="169.1" fill="url(#g273)" shape-rendering="crispEdges"/>
<rect x="2005.5" y="880" width="5.5" height="168.7" fill="url(#g274)" shape-rendering="crispEdges"/>
<rect x="2009.0" y="880" width="5.5" height="168.3" fill="url(#g275)" shape-rendering="crispEdges"/>
<rect x="2012.5" y="880" width="5.5" height="167.9" fill="url(#g276)" shape-rendering="crispEdges"/>
<rect x="2016.0" y="880" width="5.5" height="167.6" fill="url(#g277)" shape-rendering="crispEdges"/>
<rect x="2019.5" y="880" width="5.5" height="167.2" fill="url(#g278)" shape-rendering="crispEdges"/>
<rect x="2023.0" y="880" width="5.5" height="166.8" fill="url(#g279)" shape-rendering="crispEdges"/>
<rect x="2026.5" y="880" width="5.5" height="166.4" fill="url(#g280)" shape-rendering="crispEdges"/>
<rect x="2030.0" y="880" width="5.5" height="166.0" fill="url(#g281)" shape-rendering="crispEdges"/>
<rect x="2033.5" y="880" width="5.5" height="165.6" fill="url(#g282)" shape-rendering="crispEdges"/>
<rect x="2037.0" y="880" width="5.5" height="165.2" fill="url(#g283)" shape-rendering="crispEdges"/>
<rect x="2040.5" y="880" width="5.5" height="164.7" fill="url(#g284)" shape-rendering="crispEdges"/>
<rect x="2044.0" y="880" width="5.5" height="164.3" fill="url(#g285)" shape-rendering="crispEdges"/>
<rect x="2047.5" y="880" width="5.5" height="163.9" fill="url(#g286)" shape-rendering="crispEdges"/>
<rect x="2051.0" y="880" width="5.5" height="163.5" fill="url(#g287)" shape-rendering="crispEdges"/>
<rect x="2054.5" y="880" width="5.5" height="163.1" fill="url(#g288)" shape-rendering="crispEdges"/>
<rect x="2058.0" y="880" width="5.5" height="162.6" fill="url(#g289)" shape-rendering="crispEdges"/>
<rect x="2061.5" y="880" width="5.5" height="162.2" fill="url(#g290)" shape-rendering="crispEdges"/>
<rect x="2065.0" y="880" width="5.5" height="161.8" fill="url(#g291)" shape-rendering="crispEdges"/>
<rect x="2068.5" y="880" width="5.5" height="161.4" fill="url(#g292)" shape-rendering="crispEdges"/>
<rect x="2072.0" y="880" width="5.5" height="160.9" fill="url(#g293)" shape-rendering="crispEdges"/>
<rect x="2075.5" y="880" width="5.5" height="160.5" fill="url(#g294)" shape-rendering="crispEdges"/>
<rect x="2079.0" y="880" width="5.5" height="160.1" fill="url(#g295)" shape-rendering="crispEdges"/>
<rect x="2082.5" y="880" width="5.5" height="159.7" fill="url(#g296)" shape-rendering="crispEdges"/>
<rect x="2086.0" y="880" width="5.5" height="159.2" fill="url(#g297)" shape-rendering="crispEdges"/>
<rect x="2089.5" y="880" width="5.5" height="158.8" fill="url(#g298)" shape-rendering="crispEdges"/>
<rect x="2093.0" y="880" width="5.5" height="158.4" fill="url(#g299)" shape-rendering="crispEdges"/>
<rect x="2096.5" y="880" width="5.5" height="158.0" fill="url(#g300)" shape-rendering="crispEdges"/>
<rect x="2100.0" y="880" width="5.5" height="157.6" fill="url(#g301)" shape-rendering="crispEdges"/>
<rect x="2103.5" y="880" width="5.5" height="157.2" fill="url(#g302)" shape-rendering="crispEdges"/>
<rect x="2107.0" y="880" width="5.5" height="156.7" fill="url(#g303)" shape-rendering="crispEdges"/>
<rect x="2110.5" y="880" width="5.5" height="156.3" fill="url(#g304)" shape-rendering="crispEdges"/>
<rect x="2114.0" y="880" width="5.5" height="155.9" fill="url(#g305)" shape-rendering="crispEdges"/>
<rect x="2117.5" y="880" width="5.5" height="155.6" fill="url(#g306)" shape-rendering="crispEdges"/>
<rect x="2121.0" y="880" width="5.5" height="155.2" fill="url(#g307)" shape-rendering="crispEdges"/>
<rect x="2124.5" y="880" width="5.5" height="154.8" fill="url(#g308)" shape-rendering="crispEdges"/>
<rect x="2128.0" y="880" width="5.5" height="154.4" fill="url(#g309)" shape-rendering="crispEdges"/>
<rect x="2131.5" y="880" width="5.5" height="154.0" fill="url(#g310)" shape-rendering="crispEdges"/>
<rect x="2135.0" y="880" width="5.5" height="153.7" fill="url(#g311)" shape-rendering="crispEdges"/>
<rect x="2138.5" y="880" width="5.5" height="153.3" fill="url(#g312)" shape-rendering="crispEdges"/>
<rect x="2142.0" y="880" width="5.5" height="152.9" fill="url(#g313)" shape-rendering="crispEdges"/>
<rect x="2145.5" y="880" width="5.5" height="152.6" fill="url(#g314)" shape-rendering="crispEdges"/>
<rect x="2149.0" y="880" width="5.5" height="152.3" fill="url(#g315)" shape-rendering="crispEdges"/>
<rect x="2152.5" y="880" width="5.5" height="151.9" fill="url(#g316)" shape-rendering="crispEdges"/>
<rect x="2156.0" y="880" width="5.5" height="151.6" fill="url(#g317)" shape-rendering="crispEdges"/>
<rect x="2159.5" y="880" width="5.5" height="151.3" fill="url(#g318)" shape-rendering="crispEdges"/>
<rect x="2163.0" y="880" width="5.5" height="151.0" fill="url(#g319)" shape-rendering="crispEdges"/>
<rect x="2166.5" y="880" width="5.5" height="150.7" fill="url(#g320)" shape-rendering="crispEdges"/>
<rect x="2170.0" y="880" width="5.5" height="150.4" fill="url(#g321)" shape-rendering="crispEdges"/>
<rect x="2173.5" y="880" width="5.5" height="150.1" fill="url(#g322)" shape-rendering="crispEdges"/>
<rect x="2177.0" y="880" width="5.5" height="149.8" fill="url(#g323)" shape-rendering="crispEdges"/>
<rect x="2180.5" y="880" width="5.5" height="149.5" fill="url(#g324)" shape-rendering="crispEdges"/>
<rect x="2184.0" y="880" width="5.5" height="149.2" fill="url(#g325)" shape-rendering="crispEdges"/>
<rect x="2187.5" y="880" width="5.5" height="148.9" fill="url(#g326)" shape-rendering="crispEdges"/>
<rect x="2191.0" y="880" width="5.5" height="148.7" fill="url(#g327)" shape-rendering="crispEdges"/>
<rect x="2194.5" y="880" width="5.5" height="148.4" fill="url(#g328)" shape-rendering="crispEdges"/>
<rect x="2198.0" y="880" width="5.5" height="148.1" fill="url(#g329)" shape-rendering="crispEdges"/>
<rect x="2201.5" y="880" width="5.5" height="147.9" fill="url(#g330)" shape-rendering="crispEdges"/>
<rect x="2205.0" y="880" width="5.5" height="147.6" fill="url(#g331)" shape-rendering="crispEdges"/>
<rect x="2208.5" y="880" width="5.5" height="147.3" fill="url(#g332)" shape-rendering="crispEdges"/>
<rect x="2212.0" y="880" width="5.5" height="147.1" fill="url(#g333)" shape-rendering="crispEdges"/>
<rect x="2215.5" y="880" width="5.5" height="146.8" fill="url(#g334)" shape-rendering="crispEdges"/>
<rect x="2219.0" y="880" width="5.5" height="146.6" fill="url(#g335)" shape-rendering="crispEdges"/>
<rect x="2222.5" y="880" width="5.5" height="146.3" fill="url(#g336)" shape-rendering="crispEdges"/>
<rect x="2226.0" y="880" width="5.5" height="146.1" fill="url(#g337)" shape-rendering="crispEdges"/>
<rect x="2229.5" y="880" width="5.5" height="145.8" fill="url(#g338)" shape-rendering="crispEdges"/>
<rect x="2233.0" y="880" width="5.5" height="145.6" fill="url(#g339)" shape-rendering="crispEdges"/>
<rect x="2236.5" y="880" width="5.5" height="145.3" fill="url(#g340)" shape-rendering="crispEdges"/>
<rect x="2240.0" y="880" width="5.5" height="145.1" fill="url(#g341)" shape-rendering="crispEdges"/>
<rect x="2243.5" y="880" width="5.5" height="144.8" fill="url(#g342)" shape-rendering="crispEdges"/>
<rect x="2247.0" y="880" width="5.5" height="144.6" fill="url(#g343)" shape-rendering="crispEdges"/>
<rect x="2250.5" y="880" width="5.5" height="144.4" fill="url(#g344)" shape-rendering="crispEdges"/>
<rect x="2254.0" y="880" width="5.5" height="144.1" fill="url(#g345)" shape-rendering="crispEdges"/>
<rect x="2257.5" y="880" width="5.5" height="143.9" fill="url(#g346)" shape-rendering="crispEdges"/>
<rect x="2261.0" y="880" width="5.5" height="143.7" fill="url(#g347)" shape-rendering="crispEdges"/>
<rect x="2264.5" y="880" width="5.5" height="143.5" fill="url(#g348)" shape-rendering="crispEdges"/>
<rect x="2268.0" y="880" width="5.5" height="143.2" fill="url(#g349)" shape-rendering="crispEdges"/>
<rect x="2271.5" y="880" width="5.5" height="143.0" fill="url(#g350)" shape-rendering="crispEdges"/>
<rect x="2275.0" y="880" width="5.5" height="142.8" fill="url(#g351)" shape-rendering="crispEdges"/>
<rect x="2278.5" y="880" width="5.5" height="142.5" fill="url(#g352)" shape-rendering="crispEdges"/>
<rect x="2282.0" y="880" width="5.5" height="142.3" fill="url(#g353)" shape-rendering="crispEdges"/>
<rect x="2285.5" y="880" width="5.5" height="142.1" fill="url(#g354)" shape-rendering="crispEdges"/>
<rect x="2289.0" y="880" width="5.5" height="141.9" fill="url(#g355)" shape-rendering="crispEdges"/>
<rect x="2292.5" y="880" width="5.5" height="141.7" fill="url(#g356)" shape-rendering="crispEdges"/>
<rect x="2296.0" y="880" width="5.5" height="141.4" fill="url(#g357)" shape-rendering="crispEdges"/>
<rect x="2299.5" y="880" width="5.5" height="141.2" fill="url(#g358)" shape-rendering="crispEdges"/>
<rect x="2303.0" y="880" width="5.5" height="141.0" fill="url(#g359)" shape-rendering="crispEdges"/>
<rect x="2306.5" y="880" width="5.5" height="140.8" fill="url(#g360)" shape-rendering="crispEdges"/>
<rect x="2310.0" y="880" width="5.5" height="140.5" fill="url(#g361)" shape-rendering="crispEdges"/>
<rect x="2313.5" y="880" width="5.5" height="140.3" fill="url(#g362)" shape-rendering="crispEdges"/>
<rect x="2317.0" y="880" width="5.5" height="140.1" fill="url(#g363)" shape-rendering="crispEdges"/>
<rect x="2320.5" y="880" width="5.5" height="139.9" fill="url(#g364)" shape-rendering="crispEdges"/>
<rect x="2324.0" y="880" width="5.5" height="139.7" fill="url(#g365)" shape-rendering="crispEdges"/>
<rect x="2327.5" y="880" width="5.5" height="139.4" fill="url(#g366)" shape-rendering="crispEdges"/>
<rect x="2331.0" y="880" width="5.5" height="139.2" fill="url(#g367)" shape-rendering="crispEdges"/>
<rect x="2334.5" y="880" width="5.5" height="139.0" fill="url(#g368)" shape-rendering="crispEdges"/>
<rect x="2338.0" y="880" width="5.5" height="138.8" fill="url(#g369)" shape-rendering="crispEdges"/>
<rect x="2341.5" y="880" width="5.5" height="138.5" fill="url(#g370)" shape-rendering="crispEdges"/>
<rect x="2345.0" y="880" width="5.5" height="138.3" fill="url(#g371)" shape-rendering="crispEdges"/>
<rect x="2348.5" y="880" width="5.5" height="138.1" fill="url(#g372)" shape-rendering="crispEdges"/>
<rect x="2352.0" y="880" width="5.5" height="137.8" fill="url(#g373)" shape-rendering="crispEdges"/>
<rect x="2355.5" y="880" width="5.5" height="137.6" fill="url(#g374)" shape-rendering="crispEdges"/>
<rect x="2359.0" y="880" width="5.5" height="137.4" fill="url(#g375)" shape-rendering="crispEdges"/>
<rect x="2362.5" y="880" width="5.5" height="137.1" fill="url(#g376)" shape-rendering="crispEdges"/>
<rect x="2366.0" y="880" width="5.5" height="136.9" fill="url(#g377)" shape-rendering="crispEdges"/>
<rect x="2369.5" y="880" width="5.5" height="136.7" fill="url(#g378)" shape-rendering="crispEdges"/>
<rect x="2373.0" y="880" width="5.5" height="136.4" fill="url(#g379)" shape-rendering="crispEdges"/>
<rect x="2376.5" y="880" width="5.5" height="136.2" fill="url(#g380)" shape-rendering="crispEdges"/>
<rect x="2380.0" y="880" width="5.5" height="135.9" fill="url(#g381)" shape-rendering="crispEdges"/>
<rect x="2383.5" y="880" width="5.5" height="135.7" fill="url(#g382)" shape-rendering="crispEdges"/>
<rect x="2387.0" y="880" width="5.5" height="135.4" fill="url(#g383)" shape-rendering="crispEdges"/>
<rect x="2390.5" y="880" width="5.5" height="135.2" fill="url(#g384)" shape-rendering="crispEdges"/>
<rect x="2394.0" y="880" width="5.5" height="134.9" fill="url(#g385)" shape-rendering="crispEdges"/>
<rect x="2397.5" y="880" width="5.5" height="134.7" fill="url(#g386)" shape-rendering="crispEdges"/>
<rect x="2401.0" y="880" width="5.5" height="134.4" fill="url(#g387)" shape-rendering="crispEdges"/>
<rect x="2404.5" y="880" width="5.5" height="134.1" fill="url(#g388)" shape-rendering="crispEdges"/>
<rect x="2408.0" y="880" width="5.5" height="133.9" fill="url(#g389)" shape-rendering="crispEdges"/>
<rect x="2411.5" y="880" width="5.5" height="133.6" fill="url(#g390)" shape-rendering="crispEdges"/>
<rect x="2415.0" y="880" width="5.5" height="133.3" fill="url(#g391)" shape-rendering="crispEdges"/>
<rect x="2418.5" y="880" width="5.5" height="133.0" fill="url(#g392)" shape-rendering="crispEdges"/>
<rect x="2422.0" y="880" width="5.5" height="132.8" fill="url(#g393)" shape-rendering="crispEdges"/>
<rect x="2425.5" y="880" width="5.5" height="132.5" fill="url(#g394)" shape-rendering="crispEdges"/>
<rect x="2429.0" y="880" width="5.5" height="132.2" fill="url(#g395)" shape-rendering="crispEdges"/>
<rect x="2432.5" y="880" width="5.5" height="131.9" fill="url(#g396)" shape-rendering="crispEdges"/>
<rect x="2436.0" y="880" width="5.5" height="131.6" fill="url(#g397)" shape-rendering="crispEdges"/>
<rect x="2439.5" y="880" width="5.5" height="131.3" fill="url(#g398)" shape-rendering="crispEdges"/>
<rect x="2443.0" y="880" width="5.5" height="131.0" fill="url(#g399)" shape-rendering="crispEdges"/>
<rect x="2446.5" y="880" width="5.5" height="130.7" fill="url(#g400)" shape-rendering="crispEdges"/>
<rect x="2450.0" y="880" width="5.5" height="130.4" fill="url(#g401)" shape-rendering="crispEdges"/>
<rect x="2453.5" y="880" width="5.5" height="130.1" fill="url(#g402)" shape-rendering="crispEdges"/>
<rect x="2457.0" y="880" width="5.5" height="129.7" fill="url(#g403)" shape-rendering="crispEdges"/>
<rect x="2460.5" y="880" width="5.5" height="129.4" fill="url(#g404)" shape-rendering="crispEdges"/>
<rect x="2464.0" y="880" width="5.5" height="129.1" fill="url(#g405)" shape-rendering="crispEdges"/>
<rect x="2467.5" y="880" width="5.5" height="128.8" fill="url(#g406)" shape-rendering="crispEdges"/>
<rect x="2471.0" y="880" width="5.5" height="128.4" fill="url(#g407)" shape-rendering="crispEdges"/>
<rect x="2474.5" y="880" width="5.5" height="128.1" fill="url(#g408)" shape-rendering="crispEdges"/>
<rect x="2478.0" y="880" width="5.5" height="127.8" fill="url(#g409)" shape-rendering="crispEdges"/>
<rect x="2481.5" y="880" width="5.5" height="127.4" fill="url(#g410)" shape-rendering="crispEdges"/>
<rect x="2485.0" y="880" width="5.5" height="127.1" fill="url(#g411)" shape-rendering="crispEdges"/>
<rect x="2488.5" y="880" width="5.5" height="126.7" fill="url(#g412)" shape-rendering="crispEdges"/>
<rect x="2492.0" y="880" width="5.5" height="126.4" fill="url(#g413)" shape-rendering="crispEdges"/>
<rect x="2495.5" y="880" width="5.5" height="126.0" fill="url(#g414)" shape-rendering="crispEdges"/>
<rect x="2499.0" y="880" width="5.5" height="125.6" fill="url(#g415)" shape-rendering="crispEdges"/>
<rect x="2502.5" y="880" width="5.5" height="125.3" fill="url(#g416)" shape-rendering="crispEdges"/>
<rect x="2506.0" y="880" width="5.5" height="124.9" fill="url(#g417)" shape-rendering="crispEdges"/>
<rect x="2509.5" y="880" width="5.5" height="124.5" fill="url(#g418)" shape-rendering="crispEdges"/>
<rect x="2513.0" y="880" width="5.5" height="124.2" fill="url(#g419)" shape-rendering="crispEdges"/>
<rect x="2516.5" y="880" width="5.5" height="123.8" fill="url(#g420)" shape-rendering="crispEdges"/>
<rect x="2520.0" y="880" width="5.5" height="123.4" fill="url(#g421)" shape-rendering="crispEdges"/>
<rect x="2523.5" y="880" width="5.5" height="123.0" fill="url(#g422)" shape-rendering="crispEdges"/>
<rect x="2527.0" y="880" width="5.5" height="122.6" fill="url(#g423)" shape-rendering="crispEdges"/>
<rect x="2530.5" y="880" width="5.5" height="122.3" fill="url(#g424)" shape-rendering="crispEdges"/>
<rect x="2534.0" y="880" width="5.5" height="121.9" fill="url(#g425)" shape-rendering="crispEdges"/>
<rect x="2537.5" y="880" width="5.5" height="121.5" fill="url(#g426)" shape-rendering="crispEdges"/>
<rect x="2541.0" y="880" width="5.5" height="121.1" fill="url(#g427)" shape-rendering="crispEdges"/>
<rect x="2544.5" y="880" width="5.5" height="120.7" fill="url(#g428)" shape-rendering="crispEdges"/>
<rect x="2548.0" y="880" width="5.5" height="120.3" fill="url(#g429)" shape-rendering="crispEdges"/>
<rect x="2551.5" y="880" width="5.5" height="120.0" fill="url(#g430)" shape-rendering="crispEdges"/>
<rect x="2555.0" y="880" width="5.5" height="119.6" fill="url(#g431)" shape-rendering="crispEdges"/>
<rect x="2558.5" y="880" width="5.5" height="119.2" fill="url(#g432)" shape-rendering="crispEdges"/>
<rect x="2562.0" y="880" width="5.5" height="118.9" fill="url(#g433)" shape-rendering="crispEdges"/>
<rect x="2565.5" y="880" width="5.5" height="118.5" fill="url(#g434)" shape-rendering="crispEdges"/>
<rect x="2569.0" y="880" width="5.5" height="118.2" fill="url(#g435)" shape-rendering="crispEdges"/>
<rect x="2572.5" y="880" width="5.5" height="117.8" fill="url(#g436)" shape-rendering="crispEdges"/>
<rect x="2576.0" y="880" width="5.5" height="117.5" fill="url(#g437)" shape-rendering="crispEdges"/>
<rect x="2579.5" y="880" width="5.5" height="117.1" fill="url(#g438)" shape-rendering="crispEdges"/>
<rect x="2583.0" y="880" width="5.5" height="116.8" fill="url(#g439)" shape-rendering="crispEdges"/>
<rect x="2586.5" y="880" width="5.5" height="116.4" fill="url(#g440)" shape-rendering="crispEdges"/>
<rect x="2590.0" y="880" width="5.5" height="116.1" fill="url(#g441)" shape-rendering="crispEdges"/>
<rect x="2593.5" y="880" width="5.5" height="115.7" fill="url(#g442)" shape-rendering="crispEdges"/>
<rect x="2597.0" y="880" width="5.5" height="115.3" fill="url(#g443)" shape-rendering="crispEdges"/>
<rect x="2600.5" y="880" width="5.5" height="115.0" fill="url(#g444)" shape-rendering="crispEdges"/>
<rect x="2604.0" y="880" width="5.5" height="114.6" fill="url(#g445)" shape-rendering="crispEdges"/>
<rect x="2607.5" y="880" width="5.5" height="114.2" fill="url(#g446)" shape-rendering="crispEdges"/>
<rect x="2611.0" y="880" width="5.5" height="113.9" fill="url(#g447)" shape-rendering="crispEdges"/>
<rect x="2614.5" y="880" width="5.5" height="113.5" fill="url(#g448)" shape-rendering="crispEdges"/>
<rect x="2618.0" y="880" width="5.5" height="113.1" fill="url(#g449)" shape-rendering="crispEdges"/>
<rect x="2621.5" y="880" width="5.5" height="112.7" fill="url(#g450)" shape-rendering="crispEdges"/>
<rect x="2625.0" y="880" width="5.5" height="112.3" fill="url(#g451)" shape-rendering="crispEdges"/>
<rect x="2628.5" y="880" width="5.5" height="111.8" fill="url(#g452)" shape-rendering="crispEdges"/>
<rect x="2632.0" y="880" width="5.5" height="111.4" fill="url(#g453)" shape-rendering="crispEdges"/>
<rect x="2635.5" y="880" width="5.5" height="111.0" fill="url(#g454)" shape-rendering="crispEdges"/>
<rect x="2639.0" y="880" width="5.5" height="110.5" fill="url(#g455)" shape-rendering="crispEdges"/>
<rect x="2642.5" y="880" width="5.5" height="110.0" fill="url(#g456)" shape-rendering="crispEdges"/>
<rect x="2646.0" y="880" width="5.5" height="109.5" fill="url(#g457)" shape-rendering="crispEdges"/>
<rect x="2649.5" y="880" width="5.5" height="109.0" fill="url(#g458)" shape-rendering="crispEdges"/>
<rect x="2653.0" y="880" width="5.5" height="108.5" fill="url(#g459)" shape-rendering="crispEdges"/>
<rect x="2656.5" y="880" width="5.5" height="108.0" fill="url(#g460)" shape-rendering="crispEdges"/>
<rect x="2660.0" y="880" width="5.5" height="107.5" fill="url(#g461)" shape-rendering="crispEdges"/>
<rect x="2663.5" y="880" width="5.5" height="106.9" fill="url(#g462)" shape-rendering="crispEdges"/>
<rect x="2667.0" y="880" width="5.5" height="106.3" fill="url(#g463)" shape-rendering="crispEdges"/>
<rect x="2670.5" y="880" width="5.5" height="105.7" fill="url(#g464)" shape-rendering="crispEdges"/>
<rect x="2674.0" y="880" width="5.5" height="105.1" fill="url(#g465)" shape-rendering="crispEdges"/>
<rect x="2677.5" y="880" width="5.5" height="104.5" fill="url(#g466)" shape-rendering="crispEdges"/>
<rect x="2681.0" y="880" width="5.5" height="103.8" fill="url(#g467)" shape-rendering="crispEdges"/>
<rect x="2684.5" y="880" width="5.5" height="103.2" fill="url(#g468)" shape-rendering="crispEdges"/>
<rect x="2688.0" y="880" width="5.5" height="102.5" fill="url(#g469)" shape-rendering="crispEdges"/>
<rect x="2691.5" y="880" width="5.5" height="101.7" fill="url(#g470)" shape-rendering="crispEdges"/>
<rect x="2695.0" y="880" width="5.5" height="101.0" fill="url(#g471)" shape-rendering="crispEdges"/>
<rect x="2698.5" y="880" width="5.5" height="100.2" fill="url(#g472)" shape-rendering="crispEdges"/>
<rect x="2702.0" y="880" width="5.5" height="99.4" fill="url(#g473)" shape-rendering="crispEdges"/>
<rect x="2705.5" y="880" width="5.5" height="98.4" fill="url(#g474)" shape-rendering="crispEdges"/>
<rect x="2709.0" y="880" width="5.5" height="97.3" fill="url(#g475)" shape-rendering="crispEdges"/>
<rect x="2712.5" y="880" width="5.5" height="96.1" fill="url(#g476)" shape-rendering="crispEdges"/>
<rect x="2716.0" y="880" width="5.5" height="94.9" fill="url(#g477)" shape-rendering="crispEdges"/>
<rect x="2719.5" y="880" width="5.5" height="93.5" fill="url(#g478)" shape-rendering="crispEdges"/>
<rect x="2723.0" y="880" width="5.5" height="92.0" fill="url(#g479)" shape-rendering="crispEdges"/>
<rect x="2726.5" y="880" width="5.5" height="90.5" fill="url(#g480)" shape-rendering="crispEdges"/>
<rect x="2730.0" y="880" width="5.5" height="88.9" fill="url(#g481)" shape-rendering="crispEdges"/>
<rect x="2733.5" y="880" width="5.5" height="87.2" fill="url(#g482)" shape-rendering="crispEdges"/>
<rect x="2737.0" y="880" width="5.5" height="85.4" fill="url(#g483)" shape-rendering="crispEdges"/>
<rect x="2740.5" y="880" width="5.5" height="83.6" fill="url(#g484)" shape-rendering="crispEdges"/>
<rect x="2744.0" y="880" width="5.5" height="81.7" fill="url(#g485)" shape-rendering="crispEdges"/>
<rect x="2747.5" y="880" width="5.5" height="79.8" fill="url(#g486)" shape-rendering="crispEdges"/>
<rect x="2751.0" y="880" width="5.5" height="77.8" fill="url(#g487)" shape-rendering="crispEdges"/>
<rect x="2754.5" y="880" width="5.5" height="75.7" fill="url(#g488)" shape-rendering="crispEdges"/>
<rect x="2758.0" y="880" width="5.5" height="73.6" fill="url(#g489)" shape-rendering="crispEdges"/>
<rect x="2761.5" y="880" width="5.5" height="71.5" fill="url(#g490)" shape-rendering="crispEdges"/>
<rect x="2765.0" y="880" width="5.5" height="69.3" fill="url(#g491)" shape-rendering="crispEdges"/>
<rect x="2768.5" y="880" width="5.5" height="67.1" fill="url(#g492)" shape-rendering="crispEdges"/>
<rect x="2772.0" y="880" width="5.5" height="64.9" fill="url(#g493)" shape-rendering="crispEdges"/>
<rect x="2775.5" y="880" width="5.5" height="62.6" fill="url(#g494)" shape-rendering="crispEdges"/>
<rect x="2779.0" y="880" width="5.5" height="60.3" fill="url(#g495)" shape-rendering="crispEdges"/>
<rect x="2782.5" y="880" width="5.5" height="58.0" fill="url(#g496)" shape-rendering="crispEdges"/>
<rect x="2786.0" y="880" width="5.5" height="55.7" fill="url(#g497)" shape-rendering="crispEdges"/>
<rect x="2789.5" y="880" width="5.5" height="53.3" fill="url(#g498)" shape-rendering="crispEdges"/>
<rect x="2793.0" y="880" width="5.5" height="51.0" fill="url(#g499)" shape-rendering="crispEdges"/>
<rect x="2796.5" y="880" width="2.5" height="49.7" fill="url(#g500)" shape-rendering="crispEdges"/>
<path d="M82.3,1039.5 91.4,1032.8 100.5,1031.2 109.5,1030.4 118.6,1029.7 127.7,1028.7 136.8,1027.9 145.9,1027.3 155.0,1026.8 164.0,1026.3 173.1,1025.9 182.2,1025.4 191.3,1025.0 200.4,1024.4 209.5,1023.8 218.5,1023.2 227.6,1022.6 236.7,1022.1 245.8,1021.5 254.9,1021.1 264.0,1020.6 273.0,1020.2 282.1,1019.9 291.2,1019.5 300.3,1019.2 309.4,1018.9 318.4,1018.6 327.5,1018.3 336.6,1018.1 345.7,1017.8 354.8,1017.6 363.9,1017.4 372.9,1017.1 382.0,1016.9 391.1,1016.6 400.2,1016.4 409.3,1016.1 418.4,1015.9 427.4,1015.6 436.5,1015.4 445.6,1015.1 454.7,1014.9 463.8,1014.6 472.9,1014.4 481.9,1014.2 491.0,1014.0 500.1,1013.8 509.2,1013.6 518.3,1013.4 527.3,1013.3 536.4,1013.1 545.5,1013.0 554.6,1012.8 563.7,1012.6 572.8,1012.4 581.8,1012.1 590.9,1011.8 600.0,1011.5 609.1,1011.2 618.2,1010.8 627.3,1010.5 636.3,1010.2 645.4,1009.9 654.5,1009.6 663.6,1009.4 672.7,1009.2 681.8,1009.0 690.8,1008.8 699.9,1008.6 709.0,1008.5 718.1,1008.3 727.2,1008.1 736.2,1008.0 745.3,1007.8 754.4,1007.7 763.5,1007.5 772.6,1007.4 781.7,1007.2 790.7,1007.0 799.8,1006.9 808.9,1006.7 818.0,1006.5 827.1,1006.4 836.2,1006.2 845.2,1006.0 854.3,1005.8 863.4,1005.7 872.5,1005.5 881.6,1005.3 890.7,1005.1 899.7,1005.0 908.8,1004.8 917.9,1004.6 927.0,1004.4 936.1,1004.3 945.1,1004.1 954.2,1003.9 963.3,1003.7 972.4,1003.6 981.5,1003.4 990.6,1003.2 999.6,1003.1 1008.7,1002.9 1017.8,1002.7 1026.9,1002.6 1036.0,1002.4 1045.1,1002.2 1054.1,1002.1 1063.2,1001.9 1072.3,1001.7 1081.4,1001.6 1090.5,1001.4 1099.6,1001.2 1108.6,1001.0 1117.7,1000.8 1126.8,1000.6 1135.9,1000.4 1145.0,1000.2 1154.0,1000.0 1163.1,999.8 1172.2,999.6 1181.3,999.4 1190.4,999.1 1199.5,998.9 1208.5,998.7 1217.6,998.5 1226.7,998.3 1235.8,998.1 1244.9,997.8 1254.0,997.6 1263.0,997.4 1272.1,997.2 1281.2,997.0 1290.3,996.8 1299.4,996.7 1308.5,996.5 1317.5,996.3 1326.6,996.1 1335.7,995.9 1344.8,995.7 1353.9,995.5 1362.9,995.3 1372.0,995.1 1381.1,994.9 1390.2,994.7 1399.3,994.4 1408.4,994.2 1417.4,994.0 1426.5,993.7 1435.6,993.4 1444.7,993.1 1453.8,992.8 1462.9,992.5 1471.9,992.1 1481.0,991.8 1490.1,991.5 1499.2,991.1 1508.3,990.8 1517.4,990.5 1526.4,990.2 1535.5,989.9 1544.6,989.6 1553.7,989.3 1562.8,989.0 1571.8,988.8 1580.9,988.5 1590.0,988.3 1599.1,988.1 1608.2,987.9 1617.3,987.6 1626.3,987.4 1635.4,987.2 1644.5,987.0 1653.6,986.8 1662.7,986.6 1671.8,986.4 1680.8,986.1 1689.9,985.9 1699.0,985.7 1708.1,985.4 1717.2,985.2 1726.3,984.9 1735.3,984.6 1744.4,984.3 1753.5,984.1 1762.6,983.8 1771.7,983.5 1780.7,983.2 1789.8,982.9 1798.9,982.6 1808.0,982.3 1817.1,982.0 1826.2,981.6 1835.2,981.3 1844.3,981.0 1853.4,980.7 1862.5,980.4 1871.6,980.1 1880.7,979.8 1889.7,979.5 1898.8,979.2 1907.9,978.9 1917.0,978.6 1926.1,978.3 1935.2,978.0 1944.2,977.7 1953.3,977.4 1962.4,977.0 1971.5,976.7 1980.6,976.4 1989.6,976.0 1998.7,975.7 2007.8,975.3 2016.9,975.0 2026.0,974.6 2035.1,974.2 2044.1,973.8 2053.2,973.5 2062.3,973.1 2071.4,972.7 2080.5,972.3 2089.6,971.8 2098.6,971.4 2107.7,971.0 2116.8,970.5 2125.9,970.1 2135.0,969.7 2144.1,969.2 2153.1,968.8 2162.2,968.3 2171.3,967.8 2180.4,967.3 2189.5,966.8 2198.5,966.3 2207.6,965.8 2216.7,965.2 2225.8,964.7 2234.9,964.1 2244.0,963.6 2253.0,963.0 2262.1,962.5 2271.2,961.9 2280.3,961.4 2289.4,960.8 2298.5,960.3 2307.5,959.8 2316.6,959.3 2325.7,958.7 2334.8,958.2 2343.9,957.7 2353.0,957.2 2362.0,956.7 2371.1,956.2 2380.2,955.7 2389.3,955.2 2398.4,954.7 2407.4,954.2 2416.5,953.7 2425.6,953.2 2434.7,952.7 2443.8,952.2 2452.9,951.6 2461.9,951.1 2471.0,950.6 2480.1,950.2 2489.2,949.7 2498.3,949.2 2507.4,948.7 2516.4,948.1 2525.5,947.6 2534.6,947.0 2543.7,946.3 2552.8,945.6 2561.9,944.9 2570.9,944.0 2580.0,943.2 2589.1,942.3 2598.2,941.5 2607.3,940.6 2616.3,939.8 2625.4,939.0 2634.5,938.2 2643.6,937.6 2652.7,936.9 2661.8,936.2 2670.8,935.5 2679.9,934.7 2689.0,934.0 2698.1,933.2 2707.2,932.3 2716.3,931.5 2725.3,930.6 2734.4,929.6 2743.5,928.6 2752.6,927.7 2761.7,926.8 2770.8,925.8 2779.8,925.1 2788.9,925.2 2798.0,929.0 L2798.0,931.0 2788.9,927.4 2779.8,927.3 2770.8,928.2 2761.7,929.4 2752.6,930.4 2743.5,931.5 2734.4,932.6 2725.3,933.7 2716.3,934.7 2707.2,935.7 2698.1,936.7 2689.0,937.6 2679.9,938.5 2670.8,939.4 2661.8,940.3 2652.7,941.1 2643.6,941.9 2634.5,942.7 2625.4,943.6 2616.3,944.5 2607.3,945.5 2598.2,946.5 2589.1,947.5 2580.0,948.5 2570.9,949.5 2561.9,950.4 2552.8,951.3 2543.7,952.2 2534.6,952.9 2525.5,953.7 2516.4,954.4 2507.4,955.0 2498.3,955.7 2489.2,956.2 2480.1,956.7 2471.0,957.1 2461.9,957.6 2452.9,958.1 2443.8,958.7 2434.7,959.2 2425.6,959.7 2416.5,960.2 2407.4,960.7 2398.4,961.2 2389.3,961.7 2380.2,962.2 2371.1,962.7 2362.0,963.2 2353.0,963.7 2343.9,964.2 2334.8,964.7 2325.7,965.2 2316.6,965.8 2307.5,966.3 2298.5,966.8 2289.4,967.3 2280.3,967.9 2271.2,968.4 2262.1,969.0 2253.0,969.5 2244.0,970.1 2234.9,970.6 2225.8,971.2 2216.7,971.7 2207.6,972.3 2198.5,972.8 2189.5,973.3 2180.4,973.8 2171.3,974.3 2162.2,974.8 2153.1,975.3 2144.1,975.7 2135.0,976.2 2125.9,976.6 2116.8,977.0 2107.7,977.5 2098.6,977.9 2089.6,978.3 2080.5,978.8 2071.4,979.2 2062.3,979.6 2053.2,980.0 2044.1,980.3 2035.1,980.7 2026.0,981.1 2016.9,981.5 2007.8,981.8 1998.7,982.2 1989.6,982.5 1980.6,982.9 1971.5,983.2 1962.4,983.5 1953.3,983.9 1944.2,984.2 1935.2,984.5 1926.1,984.8 1917.0,985.1 1907.9,985.4 1898.8,985.7 1889.7,986.0 1880.7,986.3 1871.6,986.6 1862.5,986.9 1853.4,987.2 1844.3,987.5 1835.2,987.8 1826.2,988.1 1817.1,988.5 1808.0,988.8 1798.9,989.1 1789.8,989.4 1780.7,989.7 1771.7,990.0 1762.6,990.3 1753.5,990.6 1744.4,990.8 1735.3,991.1 1726.3,991.4 1717.2,991.7 1708.1,991.9 1699.0,992.2 1689.9,992.4 1680.8,992.6 1671.8,992.9 1662.7,993.1 1653.6,993.3 1644.5,993.5 1635.4,993.7 1626.3,993.9 1617.3,994.1 1608.2,994.4 1599.1,994.6 1590.0,994.8 1580.9,995.0 1571.8,995.3 1562.8,995.5 1553.7,995.8 1544.6,996.1 1535.5,996.4 1526.4,996.7 1517.4,997.0 1508.3,997.3 1499.2,997.6 1490.1,998.0 1481.0,998.3 1471.9,998.6 1462.9,999.0 1453.8,999.3 1444.7,999.6 1435.6,999.9 1426.5,1000.2 1417.4,1000.5 1408.4,1000.7 1399.3,1000.9 1390.2,1001.2 1381.1,1001.4 1372.0,1001.6 1362.9,1001.8 1353.9,1002.0 1344.8,1002.2 1335.7,1002.4 1326.6,1002.6 1317.5,1002.8 1308.5,1003.0 1299.4,1003.2 1290.3,1003.3 1281.2,1003.5 1272.1,1003.7 1263.0,1003.9 1254.0,1004.1 1244.9,1004.3 1235.8,1004.6 1226.7,1004.8 1217.6,1005.0 1208.5,1005.2 1199.5,1005.4 1190.4,1005.6 1181.3,1005.9 1172.2,1006.1 1163.1,1006.3 1154.0,1006.5 1145.0,1006.7 1135.9,1006.9 1126.8,1007.1 1117.7,1007.3 1108.6,1007.5 1099.6,1007.7 1090.5,1007.9 1081.4,1008.1 1072.3,1008.2 1063.2,1008.4 1054.1,1008.6 1045.1,1008.7 1036.0,1008.9 1026.9,1009.1 1017.8,1009.2 1008.7,1009.4 999.6,1009.6 990.6,1009.7 981.5,1009.9 972.4,1010.1 963.3,1010.2 954.2,1010.4 945.1,1010.6 936.1,1010.8 927.0,1010.9 917.9,1011.1 908.8,1011.3 899.7,1011.5 890.7,1011.6 881.6,1011.8 872.5,1012.0 863.4,1012.2 854.3,1012.3 845.2,1012.5 836.2,1012.7 827.1,1012.9 818.0,1013.0 808.9,1013.2 799.8,1013.4 790.7,1013.5 781.7,1013.7 772.6,1013.9 763.5,1014.0 754.4,1014.2 745.3,1014.3 736.2,1014.5 727.2,1014.6 718.1,1014.8 709.0,1015.0 699.9,1015.1 690.8,1015.3 681.8,1015.5 672.7,1015.7 663.6,1015.9 654.5,1016.1 645.4,1016.4 636.3,1016.7 627.3,1017.0 618.2,1017.3 609.1,1017.7 600.0,1018.0 590.9,1018.3 581.8,1018.6 572.8,1018.9 563.7,1019.1 554.6,1019.3 545.5,1019.5 536.4,1019.6 527.3,1019.8 518.3,1019.9 509.2,1020.1 500.1,1020.3 491.0,1020.5 481.9,1020.7 472.9,1020.9 463.8,1021.1 454.7,1021.4 445.6,1021.6 436.5,1021.9 427.4,1022.1 418.4,1022.4 409.3,1022.6 400.2,1022.9 391.1,1023.0 382.0,1023.1 372.9,1023.2 363.9,1023.3 354.8,1023.4 345.7,1023.5 336.6,1023.6 327.5,1023.7 318.4,1023.9 309.4,1024.0 300.3,1024.2 291.2,1024.4 282.1,1024.6 273.0,1024.8 264.0,1025.1 254.9,1025.4 245.8,1025.7 236.7,1026.1 227.6,1026.6 218.5,1027.0 209.5,1027.5 200.4,1027.9 191.3,1028.3 182.2,1028.6 173.1,1028.9 164.0,1029.2 155.0,1029.6 145.9,1029.9 136.8,1030.4 127.7,1031.0 118.6,1031.9 109.5,1032.4 100.5,1033.1 91.4,1034.5 82.3,1041.0Z" fill="#a4a5a8"/>
<path d="M82.3,1041.0 91.4,1034.5 100.5,1033.1 109.5,1032.4 118.6,1031.9 127.7,1031.0 136.8,1030.4 145.9,1029.9 155.0,1029.6 164.0,1029.2 173.1,1028.9 182.2,1028.6 191.3,1028.3 200.4,1027.9 209.5,1027.5 218.5,1027.0 227.6,1026.6 236.7,1026.1 245.8,1025.7 254.9,1025.4 264.0,1025.1 273.0,1024.8 282.1,1024.6 291.2,1024.4 300.3,1024.2 309.4,1024.0 318.4,1023.9 327.5,1023.7 336.6,1023.6 345.7,1023.5 354.8,1023.4 363.9,1023.3 372.9,1023.2 382.0,1023.1 391.1,1023.0 400.2,1022.9 409.3,1022.6 418.4,1022.4 427.4,1022.1 436.5,1021.9 445.6,1021.6 454.7,1021.4 463.8,1021.1 472.9,1020.9 481.9,1020.7 491.0,1020.5 500.1,1020.3 509.2,1020.1 518.3,1019.9 527.3,1019.8 536.4,1019.6 545.5,1019.5 554.6,1019.3 563.7,1019.1 572.8,1018.9 581.8,1018.6 590.9,1018.3 600.0,1018.0 609.1,1017.7 618.2,1017.3 627.3,1017.0 636.3,1016.7 645.4,1016.4 654.5,1016.1 663.6,1015.9 672.7,1015.7 681.8,1015.5 690.8,1015.3 699.9,1015.1 709.0,1015.0 718.1,1014.8 727.2,1014.6 736.2,1014.5 745.3,1014.3 754.4,1014.2 763.5,1014.0 772.6,1013.9 781.7,1013.7 790.7,1013.5 799.8,1013.4 808.9,1013.2 818.0,1013.0 827.1,1012.9 836.2,1012.7 845.2,1012.5 854.3,1012.3 863.4,1012.2 872.5,1012.0 881.6,1011.8 890.7,1011.6 899.7,1011.5 908.8,1011.3 917.9,1011.1 927.0,1010.9 936.1,1010.8 945.1,1010.6 954.2,1010.4 963.3,1010.2 972.4,1010.1 981.5,1009.9 990.6,1009.7 999.6,1009.6 1008.7,1009.4 1017.8,1009.2 1026.9,1009.1 1036.0,1008.9 1045.1,1008.7 1054.1,1008.6 1063.2,1008.4 1072.3,1008.2 1081.4,1008.1 1090.5,1007.9 1099.6,1007.7 1108.6,1007.5 1117.7,1007.3 1126.8,1007.1 1135.9,1006.9 1145.0,1006.7 1154.0,1006.5 1163.1,1006.3 1172.2,1006.1 1181.3,1005.9 1190.4,1005.6 1199.5,1005.4 1208.5,1005.2 1217.6,1005.0 1226.7,1004.8 1235.8,1004.6 1244.9,1004.3 1254.0,1004.1 1263.0,1003.9 1272.1,1003.7 1281.2,1003.5 1290.3,1003.3 1299.4,1003.2 1308.5,1003.0 1317.5,1002.8 1326.6,1002.6 1335.7,1002.4 1344.8,1002.2 1353.9,1002.0 1362.9,1001.8 1372.0,1001.6 1381.1,1001.4 1390.2,1001.2 1399.3,1000.9 1408.4,1000.7 1417.4,1000.5 1426.5,1000.2 1435.6,999.9 1444.7,999.6 1453.8,999.3 1462.9,999.0 1471.9,998.6 1481.0,998.3 1490.1,998.0 1499.2,997.6 1508.3,997.3 1517.4,997.0 1526.4,996.7 1535.5,996.4 1544.6,996.1 1553.7,995.8 1562.8,995.5 1571.8,995.3 1580.9,995.0 1590.0,994.8 1599.1,994.6 1608.2,994.4 1617.3,994.1 1626.3,993.9 1635.4,993.7 1644.5,993.5 1653.6,993.3 1662.7,993.1 1671.8,992.9 1680.8,992.6 1689.9,992.4 1699.0,992.2 1708.1,991.9 1717.2,991.7 1726.3,991.4 1735.3,991.1 1744.4,990.8 1753.5,990.6 1762.6,990.3 1771.7,990.0 1780.7,989.7 1789.8,989.4 1798.9,989.1 1808.0,988.8 1817.1,988.5 1826.2,988.1 1835.2,987.8 1844.3,987.5 1853.4,987.2 1862.5,986.9 1871.6,986.6 1880.7,986.3 1889.7,986.0 1898.8,985.7 1907.9,985.4 1917.0,985.1 1926.1,984.8 1935.2,984.5 1944.2,984.2 1953.3,983.9 1962.4,983.5 1971.5,983.2 1980.6,982.9 1989.6,982.5 1998.7,982.2 2007.8,981.8 2016.9,981.5 2026.0,981.1 2035.1,980.7 2044.1,980.3 2053.2,980.0 2062.3,979.6 2071.4,979.2 2080.5,978.8 2089.6,978.3 2098.6,977.9 2107.7,977.5 2116.8,977.0 2125.9,976.6 2135.0,976.2 2144.1,975.7 2153.1,975.3 2162.2,974.8 2171.3,974.3 2180.4,973.8 2189.5,973.3 2198.5,972.8 2207.6,972.3 2216.7,971.7 2225.8,971.2 2234.9,970.6 2244.0,970.1 2253.0,969.5 2262.1,969.0 2271.2,968.4 2280.3,967.9 2289.4,967.3 2298.5,966.8 2307.5,966.3 2316.6,965.8 2325.7,965.2 2334.8,964.7 2343.9,964.2 2353.0,963.7 2362.0,963.2 2371.1,962.7 2380.2,962.2 2389.3,961.7 2398.4,961.2 2407.4,960.7 2416.5,960.2 2425.6,959.7 2434.7,959.2 2443.8,958.7 2452.9,958.1 2461.9,957.6 2471.0,957.1 2480.1,956.7 2489.2,956.2 2498.3,955.7 2507.4,955.0 2516.4,954.4 2525.5,953.7 2534.6,952.9 2543.7,952.2 2552.8,951.3 2561.9,950.4 2570.9,949.5 2580.0,948.5 2589.1,947.5 2598.2,946.5 2607.3,945.5 2616.3,944.5 2625.4,943.6 2634.5,942.7 2643.6,941.9 2652.7,941.1 2661.8,940.3 2670.8,939.4 2679.9,938.5 2689.0,937.6 2698.1,936.7 2707.2,935.7 2716.3,934.7 2725.3,933.7 2734.4,932.6 2743.5,931.5 2752.6,930.4 2761.7,929.4 2770.8,928.2 2779.8,927.3 2788.9,927.4 2798.0,931.0" fill="none" stroke="#707174" stroke-width="1.6"/>
<path d="M82.30,1039.50 82.80,1039.47 83.30,1039.43 83.80,1039.40 84.30,1039.36 84.80,1039.33 85.30,1039.30 85.80,1039.26 86.30,1039.23 86.80,1039.19 87.30,1039.16 87.80,1039.13 88.30,1039.09 88.80,1039.06 89.30,1039.02 89.80,1038.99 90.30,1038.96 90.80,1038.92 91.30,1038.89 91.80,1038.85 92.30,1038.82 92.80,1038.79 93.30,1038.75 93.80,1038.72 94.30,1038.68 99.30,1038.35 104.30,1038.01 109.30,1037.68 114.30,1037.34 119.30,1037.01 124.30,1036.68 129.30,1036.35 134.30,1036.03 139.30,1035.70 144.30,1035.38 149.30,1035.06 154.30,1034.73 159.30,1034.42 164.30,1034.10 169.30,1033.78 174.30,1033.47 179.30,1033.15 184.30,1032.84 189.30,1032.53 194.30,1032.22 199.30,1031.92 204.30,1031.61 209.30,1031.31 214.30,1031.01 219.30,1030.71 224.30,1030.41 229.30,1030.11 234.30,1029.82 239.30,1029.52 244.30,1029.23 249.30,1028.94 254.30,1028.65 259.30,1028.36 264.30,1028.08 269.30,1027.80 274.30,1027.51 279.30,1027.23 284.30,1026.96 289.30,1026.68 294.30,1026.40 299.30,1026.13 304.30,1025.86 309.30,1025.59 314.30,1025.32 319.30,1025.06 324.30,1024.79 329.30,1024.53 334.30,1024.27 339.30,1024.01 344.30,1023.75 349.30,1023.50 354.30,1023.24 359.30,1022.99 364.30,1022.74 369.30,1022.49 374.30,1022.25 379.30,1022.00 384.30,1021.76 389.30,1021.52 394.30,1021.28 399.30,1021.04 404.30,1020.81 409.30,1020.58 414.30,1020.35 419.30,1020.12 424.30,1019.89 429.30,1019.66 434.30,1019.44 439.30,1019.22 444.30,1019.00 449.30,1018.78 454.30,1018.57 459.30,1018.35 464.30,1018.14 469.30,1017.93 474.30,1017.72 479.30,1017.52 484.30,1017.32 489.30,1017.11 494.30,1016.91 499.30,1016.72 504.30,1016.52 509.30,1016.33 514.30,1016.14 519.30,1015.95 524.30,1015.76 529.30,1015.58 534.30,1015.39 539.30,1015.21 544.30,1015.03 549.30,1014.86 554.30,1014.68 559.30,1014.51 564.30,1014.34 569.30,1014.17 574.30,1014.00 579.30,1013.84 584.30,1013.68 589.30,1013.52 594.30,1013.36 599.30,1013.21 604.30,1013.05 609.30,1012.90 614.30,1012.75 619.30,1012.61 624.30,1012.46 629.30,1012.32 634.30,1012.18 639.30,1012.05 644.30,1011.91 649.30,1011.78 654.30,1011.65 659.30,1011.52 664.30,1011.39 669.30,1011.27 674.30,1011.15 679.30,1011.03 684.30,1010.91 689.30,1010.79 694.30,1010.68 699.30,1010.57 704.30,1010.46 709.30,1010.35 714.30,1010.24 719.30,1010.14 724.30,1010.03 729.30,1009.93 734.30,1009.83 739.30,1009.73 744.30,1009.63 749.30,1009.54 754.30,1009.44 759.30,1009.35 764.30,1009.25 769.30,1009.16 774.30,1009.07 779.30,1008.98 784.30,1008.89 789.30,1008.81 794.30,1008.72 799.30,1008.63 804.30,1008.55 809.30,1008.46 814.30,1008.38 819.30,1008.30 824.30,1008.21 829.30,1008.13 834.30,1008.05 839.30,1007.97 844.30,1007.89 849.30,1007.81 854.30,1007.73 859.30,1007.65 864.30,1007.57 869.30,1007.49 874.30,1007.41 879.30,1007.33 884.30,1007.25 889.30,1007.17 894.30,1007.09 899.30,1007.01 904.30,1006.93 909.30,1006.85 914.30,1006.77 919.30,1006.69 924.30,1006.60 929.30,1006.52 934.30,1006.44 939.30,1006.35 944.30,1006.27 949.30,1006.18 954.30,1006.10 959.30,1006.01 964.30,1005.93 969.30,1005.84 974.30,1005.75 979.30,1005.67 984.30,1005.58 989.30,1005.50 994.30,1005.42 999.30,1005.33 1004.30,1005.25 1009.30,1005.17 1014.30,1005.09 1019.30,1005.01 1024.30,1004.93 1029.30,1004.85 1034.30,1004.77 1039.30,1004.69 1044.30,1004.61 1049.30,1004.53 1054.30,1004.45 1059.30,1004.37 1064.30,1004.29 1069.30,1004.21 1074.30,1004.14 1079.30,1004.06 1084.30,1003.98 1089.30,1003.90 1094.30,1003.82 1099.30,1003.74 1104.30,1003.66 1109.30,1003.59 1114.30,1003.51 1119.30,1003.43 1124.30,1003.35 1129.30,1003.27 1134.30,1003.19 1139.30,1003.11 1144.30,1003.03 1149.30,1002.95 1154.30,1002.87 1159.30,1002.78 1164.30,1002.70 1169.30,1002.62 1174.30,1002.54 1179.30,1002.45 1184.30,1002.37 1189.30,1002.28 1194.30,1002.20 1199.30,1002.11 1204.30,1002.02 1209.30,1001.94 1214.30,1001.85 1219.30,1001.76 1224.30,1001.67 1229.30,1001.58 1234.30,1001.49 1239.30,1001.39 1244.30,1001.30 1249.30,1001.21 1254.30,1001.11 1259.30,1001.01 1264.30,1000.92 1269.30,1000.82 1274.30,1000.72 1279.30,1000.62 1284.30,1000.52 1289.30,1000.41 1294.30,1000.31 1299.30,1000.21 1304.30,1000.10 1309.30,1000.00 1314.30,999.89 1319.30,999.78 1324.30,999.67 1329.30,999.56 1334.30,999.45 1339.30,999.34 1344.30,999.23 1349.30,999.12 1354.30,999.01 1359.30,998.89 1364.30,998.78 1369.30,998.66 1374.30,998.55 1379.30,998.43 1384.30,998.32 1389.30,998.20 1394.30,998.08 1399.30,997.96 1404.30,997.85 1409.30,997.73 1414.30,997.61 1419.30,997.49 1424.30,997.37 1429.30,997.25 1434.30,997.12 1439.30,997.00 1444.30,996.88 1449.30,996.76 1454.30,996.64 1459.30,996.51 1464.30,996.39 1469.30,996.27 1474.30,996.14 1479.30,996.02 1484.30,995.89 1489.30,995.77 1494.30,995.64 1499.30,995.52 1504.30,995.40 1509.30,995.27 1514.30,995.15 1519.30,995.02 1524.30,994.89 1529.30,994.77 1534.30,994.64 1539.30,994.52 1544.30,994.39 1549.30,994.27 1554.30,994.14 1559.30,994.02 1564.30,993.89 1569.30,993.77 1574.30,993.64 1579.30,993.51 1584.30,993.39 1589.30,993.26 1594.30,993.13 1599.30,993.01 1604.30,992.88 1609.30,992.75 1614.30,992.62 1619.30,992.49 1624.30,992.36 1629.30,992.23 1634.30,992.10 1639.30,991.97 1644.30,991.84 1649.30,991.71 1654.30,991.58 1659.30,991.45 1664.30,991.32 1669.30,991.19 1674.30,991.05 1679.30,990.92 1684.30,990.79 1689.30,990.65 1694.30,990.52 1699.30,990.39 1704.30,990.25 1709.30,990.12 1714.30,989.98 1719.30,989.85 1724.30,989.71 1729.30,989.58 1734.30,989.44 1739.30,989.30 1744.30,989.17 1749.30,989.03 1754.30,988.89 1759.30,988.75 1764.30,988.61 1769.30,988.48 1774.30,988.34 1779.30,988.20 1784.30,988.06 1789.30,987.92 1794.30,987.78 1799.30,987.64 1804.30,987.49 1809.30,987.35 1814.30,987.21 1819.30,987.07 1824.30,986.93 1829.30,986.78 1834.30,986.64 1839.30,986.50 1844.30,986.35 1849.30,986.21 1854.30,986.07 1859.30,985.92 1864.30,985.78 1869.30,985.63 1874.30,985.49 1879.30,985.34 1884.30,985.20 1889.30,985.06 1894.30,984.91 1899.30,984.77 1904.30,984.63 1909.30,984.48 1914.30,984.34 1919.30,984.20 1924.30,984.06 1929.30,983.91 1934.30,983.77 1939.30,983.63 1944.30,983.48 1949.30,983.34 1954.30,983.19 1959.30,983.05 1964.30,982.91 1969.30,982.76 1974.30,982.61 1979.30,982.47 1984.30,982.32 1989.30,982.17 1994.30,982.03 1999.30,981.88 2004.30,981.73 2009.30,981.58 2014.30,981.43 2019.30,981.28 2024.30,981.12 2029.30,980.97 2034.30,980.81 2039.30,980.66 2044.30,980.50 2049.30,980.35 2054.30,980.19 2059.30,980.03 2064.30,979.87 2069.30,979.70 2074.30,979.54 2079.30,979.38 2084.30,979.21 2089.30,979.04 2094.30,978.87 2099.30,978.70 2104.30,978.53 2109.30,978.36 2114.30,978.18 2119.30,978.01 2124.30,977.83 2129.30,977.65 2134.30,977.46 2139.30,977.28 2144.30,977.10 2149.30,976.91 2154.30,976.72 2159.30,976.53 2164.30,976.33 2169.30,976.14 2174.30,975.94 2179.30,975.74 2184.30,975.54 2189.30,975.33 2194.30,975.12 2199.30,974.92 2204.30,974.70 2209.30,974.49 2214.30,974.27 2219.30,974.06 2224.30,973.84 2229.30,973.62 2234.30,973.39 2239.30,973.17 2244.30,972.94 2249.30,972.71 2254.30,972.48 2259.30,972.24 2264.30,972.01 2269.30,971.77 2274.30,971.53 2279.30,971.29 2284.30,971.04 2289.30,970.80 2294.30,970.55 2299.30,970.30 2304.30,970.05 2309.30,969.80 2314.30,969.55 2319.30,969.29 2324.30,969.03 2329.30,968.78 2334.30,968.52 2339.30,968.25 2344.30,967.99 2349.30,967.72 2354.30,967.46 2359.30,967.19 2364.30,966.92 2369.30,966.65 2374.30,966.38 2379.30,966.10 2384.30,965.83 2389.30,965.55 2394.30,965.27 2399.30,964.99 2404.30,964.71 2409.30,964.43 2414.30,964.15 2419.30,963.86 2424.30,963.58 2429.30,963.29 2434.30,963.00 2439.30,962.71 2444.30,962.42 2449.30,962.13 2454.30,961.84 2459.30,961.54 2464.30,961.25 2469.30,960.95 2474.30,960.66 2479.30,960.36 2484.30,960.06 2489.30,959.76 2494.30,959.46 2499.30,959.16 2504.30,958.86 2509.30,958.55 2514.30,958.25 2519.30,957.93 2524.30,957.62 2529.30,957.30 2534.30,956.98 2539.30,956.66 2544.30,956.33 2549.30,956.00 2554.30,955.67 2559.30,955.33 2564.30,954.98 2569.30,954.63 2574.30,954.27 2579.30,953.91 2584.30,953.55 2589.30,953.17 2594.30,952.79 2599.30,952.41 2604.30,952.02 2609.30,951.62 2614.30,951.21 2619.30,950.80 2624.30,950.38 2629.30,949.95 2634.30,949.51 2639.30,949.06 2644.30,948.61 2649.30,948.14 2654.30,947.65 2659.30,947.15 2664.30,946.64 2669.30,946.12 2674.30,945.58 2679.30,945.03 2684.30,944.46 2689.30,943.89 2694.30,943.30 2699.30,942.71 2704.30,942.10 2709.30,941.48 2714.30,940.85 2719.30,940.21 2724.30,939.56 2729.30,938.90 2734.30,938.23 2739.30,937.55 2744.30,936.86 2749.30,936.16 2754.30,935.46 2759.30,934.75 2764.30,934.03 2769.30,933.30 2774.30,932.57 2779.30,931.83 2784.30,931.08 2786.00,930.82 2786.50,930.75 2787.00,930.67 2787.50,930.60 2788.00,930.52 2788.50,930.45 2789.00,930.37 2789.50,930.29 2790.00,930.22 2790.50,930.14 2791.00,930.07 2791.50,929.99 2792.00,929.92 2792.50,929.84 2793.00,929.76 2793.50,929.69 2794.00,929.61 2794.50,929.54 2795.00,929.46 2795.50,929.38 2796.00,929.31 2796.50,929.23 2797.00,929.15 2797.50,929.08 2798.00,929.00" fill="none" stroke="#858689" stroke-width="1.8"/>
<path d="M82.30,1039.50 82.80,1039.45 83.30,1039.41 83.80,1039.36 84.30,1039.31 84.80,1039.27 85.30,1039.22 85.80,1039.18 86.30,1039.13 86.80,1039.08 87.30,1039.04 87.80,1038.99 88.30,1038.95 88.80,1038.90 89.30,1038.85 89.80,1038.81 90.30,1038.76 90.80,1038.72 91.30,1038.67 91.80,1038.62 92.30,1038.58 92.80,1038.53 93.30,1038.49 93.80,1038.44 94.30,1038.39 99.30,1037.94 104.30,1037.48 109.30,1037.03 114.30,1036.58 119.30,1036.13 124.30,1035.69 129.30,1035.25 134.30,1034.81 139.30,1034.38 144.30,1033.94 149.30,1033.51 154.30,1033.09 159.30,1032.67 164.30,1032.25 169.30,1031.83 174.30,1031.42 179.30,1031.02 184.30,1030.61 189.30,1030.22 194.30,1029.82 199.30,1029.43 204.30,1029.05 209.30,1028.67 214.30,1028.29 219.30,1027.92 224.30,1027.55 229.30,1027.19 234.30,1026.83 239.30,1026.48 244.30,1026.14 249.30,1025.80 254.30,1025.46 259.30,1025.13 264.30,1024.81 269.30,1024.49 274.30,1024.18 279.30,1023.87 284.30,1023.57 289.30,1023.28 294.30,1022.99 299.30,1022.71 304.30,1022.44 309.30,1022.17 314.30,1021.91 319.30,1021.66 324.30,1021.41 329.30,1021.17 334.30,1020.94 339.30,1020.71 344.30,1020.50 349.30,1020.29 354.30,1020.08 359.30,1019.89 364.30,1019.70 369.30,1019.52 374.30,1019.35 379.30,1019.18 384.30,1019.02 389.30,1018.85 394.30,1018.70 399.30,1018.54 404.30,1018.38 409.30,1018.23 414.30,1018.09 419.30,1017.94 424.30,1017.80 429.30,1017.66 434.30,1017.52 439.30,1017.39 444.30,1017.25 449.30,1017.12 454.30,1017.00 459.30,1016.87 464.30,1016.75 469.30,1016.62 474.30,1016.50 479.30,1016.39 484.30,1016.27 489.30,1016.16 494.30,1016.04 499.30,1015.93 504.30,1015.82 509.30,1015.72 514.30,1015.61 519.30,1015.50 524.30,1015.40 529.30,1015.30 534.30,1015.20 539.30,1015.10 544.30,1015.00 549.30,1014.90 554.30,1014.80 559.30,1014.70 564.30,1014.61 569.30,1014.51 574.30,1014.41 579.30,1014.32 584.30,1014.23 589.30,1014.13 594.30,1014.04 599.30,1013.94 604.30,1013.85 609.30,1013.76 614.30,1013.66 619.30,1013.57 624.30,1013.48 629.30,1013.38 634.30,1013.29 639.30,1013.20 644.30,1013.10 649.30,1013.01 654.30,1012.91 659.30,1012.81 664.30,1012.72 669.30,1012.62 674.30,1012.52 679.30,1012.43 684.30,1012.34 689.30,1012.24 694.30,1012.15 699.30,1012.05 704.30,1011.96 709.30,1011.87 714.30,1011.78 719.30,1011.69 724.30,1011.60 729.30,1011.51 734.30,1011.42 739.30,1011.33 744.30,1011.24 749.30,1011.15 754.30,1011.06 759.30,1010.97 764.30,1010.89 769.30,1010.80 774.30,1010.71 779.30,1010.63 784.30,1010.54 789.30,1010.46 794.30,1010.37 799.30,1010.29 804.30,1010.21 809.30,1010.12 814.30,1010.04 819.30,1009.96 824.30,1009.88 829.30,1009.80 834.30,1009.72 839.30,1009.63 844.30,1009.55 849.30,1009.47 854.30,1009.40 859.30,1009.32 864.30,1009.24 869.30,1009.16 874.30,1009.08 879.30,1009.00 884.30,1008.93 889.30,1008.85 894.30,1008.77 899.30,1008.70 904.30,1008.62 909.30,1008.55 914.30,1008.47 919.30,1008.40 924.30,1008.32 929.30,1008.25 934.30,1008.17 939.30,1008.10 944.30,1008.03 949.30,1007.95 954.30,1007.88 959.30,1007.81 964.30,1007.74 969.30,1007.67 974.30,1007.60 979.30,1007.53 984.30,1007.46 989.30,1007.40 994.30,1007.33 999.30,1007.27 1004.30,1007.20 1009.30,1007.14 1014.30,1007.08 1019.30,1007.02 1024.30,1006.96 1029.30,1006.90 1034.30,1006.84 1039.30,1006.78 1044.30,1006.72 1049.30,1006.66 1054.30,1006.60 1059.30,1006.54 1064.30,1006.49 1069.30,1006.43 1074.30,1006.37 1079.30,1006.32 1084.30,1006.26 1089.30,1006.20 1094.30,1006.15 1099.30,1006.09 1104.30,1006.03 1109.30,1005.98 1114.30,1005.92 1119.30,1005.86 1124.30,1005.81 1129.30,1005.75 1134.30,1005.69 1139.30,1005.63 1144.30,1005.57 1149.30,1005.52 1154.30,1005.46 1159.30,1005.40 1164.30,1005.34 1169.30,1005.27 1174.30,1005.21 1179.30,1005.15 1184.30,1005.09 1189.30,1005.02 1194.30,1004.96 1199.30,1004.89 1204.30,1004.82 1209.30,1004.76 1214.30,1004.69 1219.30,1004.62 1224.30,1004.55 1229.30,1004.47 1234.30,1004.40 1239.30,1004.32 1244.30,1004.25 1249.30,1004.17 1254.30,1004.09 1259.30,1004.01 1264.30,1003.93 1269.30,1003.85 1274.30,1003.76 1279.30,1003.67 1284.30,1003.58 1289.30,1003.49 1294.30,1003.40 1299.30,1003.30 1304.30,1003.20 1309.30,1003.10 1314.30,1003.00 1319.30,1002.90 1324.30,1002.80 1329.30,1002.69 1334.30,1002.59 1339.30,1002.48 1344.30,1002.37 1349.30,1002.26 1354.30,1002.15 1359.30,1002.04 1364.30,1001.92 1369.30,1001.81 1374.30,1001.69 1379.30,1001.58 1384.30,1001.46 1389.30,1001.34 1394.30,1001.22 1399.30,1001.10 1404.30,1000.98 1409.30,1000.86 1414.30,1000.74 1419.30,1000.62 1424.30,1000.50 1429.30,1000.38 1434.30,1000.25 1439.30,1000.13 1444.30,1000.01 1449.30,999.88 1454.30,999.76 1459.30,999.63 1464.30,999.51 1469.30,999.39 1474.30,999.26 1479.30,999.14 1484.30,999.01 1489.30,998.89 1494.30,998.77 1499.30,998.65 1504.30,998.52 1509.30,998.40 1514.30,998.28 1519.30,998.16 1524.30,998.04 1529.30,997.92 1534.30,997.80 1539.30,997.68 1544.30,997.56 1549.30,997.45 1554.30,997.33 1559.30,997.22 1564.30,997.10 1569.30,996.99 1574.30,996.88 1579.30,996.77 1584.30,996.65 1589.30,996.54 1594.30,996.44 1599.30,996.33 1604.30,996.22 1609.30,996.11 1614.30,996.00 1619.30,995.90 1624.30,995.79 1629.30,995.68 1634.30,995.58 1639.30,995.47 1644.30,995.36 1649.30,995.26 1654.30,995.15 1659.30,995.05 1664.30,994.94 1669.30,994.84 1674.30,994.73 1679.30,994.62 1684.30,994.52 1689.30,994.41 1694.30,994.31 1699.30,994.20 1704.30,994.09 1709.30,993.98 1714.30,993.87 1719.30,993.77 1724.30,993.66 1729.30,993.55 1734.30,993.44 1739.30,993.32 1744.30,993.21 1749.30,993.10 1754.30,992.99 1759.30,992.87 1764.30,992.76 1769.30,992.64 1774.30,992.52 1779.30,992.40 1784.30,992.28 1789.30,992.16 1794.30,992.04 1799.30,991.92 1804.30,991.79 1809.30,991.66 1814.30,991.54 1819.30,991.41 1824.30,991.28 1829.30,991.15 1834.30,991.01 1839.30,990.88 1844.30,990.74 1849.30,990.60 1854.30,990.46 1859.30,990.32 1864.30,990.17 1869.30,990.02 1874.30,989.87 1879.30,989.70 1884.30,989.54 1889.30,989.37 1894.30,989.19 1899.30,989.02 1904.30,988.83 1909.30,988.65 1914.30,988.46 1919.30,988.28 1924.30,988.09 1929.30,987.89 1934.30,987.70 1939.30,987.51 1944.30,987.32 1949.30,987.12 1954.30,986.93 1959.30,986.74 1964.30,986.55 1969.30,986.37 1974.30,986.18 1979.30,986.00 1984.30,985.82 1989.30,985.65 1994.30,985.47 1999.30,985.31 2004.30,985.14 2009.30,984.98 2014.30,984.83 2019.30,984.68 2024.30,984.53 2029.30,984.39 2034.30,984.25 2039.30,984.11 2044.30,983.98 2049.30,983.85 2054.30,983.72 2059.30,983.59 2064.30,983.46 2069.30,983.33 2074.30,983.20 2079.30,983.08 2084.30,982.95 2089.30,982.82 2094.30,982.69 2099.30,982.56 2104.30,982.43 2109.30,982.30 2114.30,982.17 2119.30,982.03 2124.30,981.89 2129.30,981.75 2134.30,981.61 2139.30,981.46 2144.30,981.31 2149.30,981.15 2154.30,980.99 2159.30,980.82 2164.30,980.65 2169.30,980.48 2174.30,980.31 2179.30,980.13 2184.30,979.95 2189.30,979.77 2194.30,979.59 2199.30,979.41 2204.30,979.22 2209.30,979.03 2214.30,978.84 2219.30,978.64 2224.30,978.44 2229.30,978.25 2234.30,978.05 2239.30,977.84 2244.30,977.64 2249.30,977.43 2254.30,977.22 2259.30,977.01 2264.30,976.80 2269.30,976.58 2274.30,976.37 2279.30,976.15 2284.30,975.93 2289.30,975.70 2294.30,975.48 2299.30,975.25 2304.30,975.02 2309.30,974.79 2314.30,974.56 2319.30,974.33 2324.30,974.09 2329.30,973.85 2334.30,973.62 2339.30,973.37 2344.30,973.13 2349.30,972.89 2354.30,972.64 2359.30,972.40 2364.30,972.15 2369.30,971.90 2374.30,971.64 2379.30,971.39 2384.30,971.13 2389.30,970.88 2394.30,970.62 2399.30,970.36 2404.30,970.10 2409.30,969.84 2414.30,969.57 2419.30,969.31 2424.30,969.04 2429.30,968.77 2434.30,968.50 2439.30,968.23 2444.30,967.96 2449.30,967.69 2454.30,967.41 2459.30,967.14 2464.30,966.86 2469.30,966.59 2474.30,966.31 2479.30,966.04 2484.30,965.77 2489.30,965.49 2494.30,965.22 2499.30,964.94 2504.30,964.66 2509.30,964.38 2514.30,964.10 2519.30,963.81 2524.30,963.52 2529.30,963.23 2534.30,962.94 2539.30,962.63 2544.30,962.33 2549.30,962.02 2554.30,961.70 2559.30,961.38 2564.30,961.05 2569.30,960.71 2574.30,960.37 2579.30,960.02 2584.30,959.66 2589.30,959.29 2594.30,958.92 2599.30,958.53 2604.30,958.14 2609.30,957.73 2614.30,957.31 2619.30,956.89 2624.30,956.45 2629.30,956.00 2634.30,955.54 2639.30,955.07 2644.30,954.58 2649.30,954.06 2654.30,953.51 2659.30,952.93 2664.30,952.33 2669.30,951.71 2674.30,951.06 2679.30,950.38 2684.30,949.68 2689.30,948.96 2694.30,948.22 2699.30,947.45 2704.30,946.67 2709.30,945.86 2714.30,945.04 2719.30,944.20 2724.30,943.33 2729.30,942.46 2734.30,941.56 2739.30,940.65 2744.30,939.72 2749.30,938.78 2754.30,937.83 2759.30,936.86 2764.30,935.88 2769.30,934.89 2774.30,933.89 2779.30,932.87 2784.30,931.85 2786.00,931.50 2786.50,931.40 2787.00,931.29 2787.50,931.19 2788.00,931.09 2788.50,930.98 2789.00,930.88 2789.50,930.77 2790.00,930.67 2790.50,930.57 2791.00,930.46 2791.50,930.36 2792.00,930.25 2792.50,930.15 2793.00,930.05 2793.50,929.94 2794.00,929.84 2794.50,929.73 2795.00,929.63 2795.50,929.52 2796.00,929.42 2796.50,929.31 2797.00,929.21 2797.50,929.10 2798.00,929.00" fill="none" stroke="#7a7b7e" stroke-width="1.8"/>
<path d="M82.30,1039.50 82.80,1039.46 83.30,1039.41 83.80,1039.37 84.30,1039.32 84.80,1039.28 85.30,1039.23 85.80,1039.19 86.30,1039.14 86.80,1039.10 87.30,1039.05 87.80,1039.01 88.30,1038.96 88.80,1038.92 89.30,1038.88 89.80,1038.83 90.30,1038.79 90.80,1038.74 91.30,1038.70 91.80,1038.65 92.30,1038.61 92.80,1038.56 93.30,1038.52 93.80,1038.47 94.30,1038.43 99.30,1037.99 104.30,1037.55 109.30,1037.11 114.30,1036.67 119.30,1036.23 124.30,1035.80 129.30,1035.37 134.30,1034.94 139.30,1034.52 144.30,1034.10 149.30,1033.68 154.30,1033.27 159.30,1032.86 164.30,1032.45 169.30,1032.05 174.30,1031.65 179.30,1031.26 184.30,1030.87 189.30,1030.49 194.30,1030.11 199.30,1029.74 204.30,1029.37 209.30,1029.01 214.30,1028.65 219.30,1028.30 224.30,1027.96 229.30,1027.62 234.30,1027.29 239.30,1026.96 244.30,1026.64 249.30,1026.33 254.30,1026.03 259.30,1025.74 264.30,1025.45 269.30,1025.17 274.30,1024.90 279.30,1024.63 284.30,1024.38 289.30,1024.13 294.30,1023.89 299.30,1023.66 304.30,1023.45 309.30,1023.24 314.30,1023.03 319.30,1022.84 324.30,1022.66 329.30,1022.49 334.30,1022.33 339.30,1022.18 344.30,1022.04 349.30,1021.91 354.30,1021.80 359.30,1021.69 364.30,1021.59 369.30,1021.51 374.30,1021.44 379.30,1021.36 384.30,1021.29 389.30,1021.23 394.30,1021.16 399.30,1021.10 404.30,1021.04 409.30,1020.98 414.30,1020.92 419.30,1020.87 424.30,1020.82 429.30,1020.76 434.30,1020.72 439.30,1020.67 444.30,1020.62 449.30,1020.58 454.30,1020.53 459.30,1020.49 464.30,1020.45 469.30,1020.41 474.30,1020.37 479.30,1020.34 484.30,1020.30 489.30,1020.27 494.30,1020.23 499.30,1020.20 504.30,1020.16 509.30,1020.13 514.30,1020.10 519.30,1020.07 524.30,1020.03 529.30,1020.00 534.30,1019.97 539.30,1019.94 544.30,1019.91 549.30,1019.88 554.30,1019.85 559.30,1019.81 564.30,1019.78 569.30,1019.75 574.30,1019.72 579.30,1019.68 584.30,1019.65 589.30,1019.61 594.30,1019.58 599.30,1019.54 604.30,1019.50 609.30,1019.47 614.30,1019.43 619.30,1019.39 624.30,1019.34 629.30,1019.30 634.30,1019.26 639.30,1019.21 644.30,1019.16 649.30,1019.11 654.30,1019.06 659.30,1019.01 664.30,1018.95 669.30,1018.90 674.30,1018.84 679.30,1018.78 684.30,1018.73 689.30,1018.67 694.30,1018.61 699.30,1018.54 704.30,1018.48 709.30,1018.42 714.30,1018.36 719.30,1018.29 724.30,1018.23 729.30,1018.16 734.30,1018.10 739.30,1018.03 744.30,1017.96 749.30,1017.89 754.30,1017.82 759.30,1017.75 764.30,1017.68 769.30,1017.61 774.30,1017.54 779.30,1017.47 784.30,1017.39 789.30,1017.32 794.30,1017.25 799.30,1017.17 804.30,1017.10 809.30,1017.02 814.30,1016.94 819.30,1016.87 824.30,1016.79 829.30,1016.71 834.30,1016.64 839.30,1016.56 844.30,1016.48 849.30,1016.40 854.30,1016.32 859.30,1016.24 864.30,1016.16 869.30,1016.08 874.30,1016.00 879.30,1015.92 884.30,1015.84 889.30,1015.76 894.30,1015.68 899.30,1015.60 904.30,1015.51 909.30,1015.43 914.30,1015.35 919.30,1015.27 924.30,1015.19 929.30,1015.10 934.30,1015.02 939.30,1014.94 944.30,1014.86 949.30,1014.78 954.30,1014.69 959.30,1014.61 964.30,1014.53 969.30,1014.45 974.30,1014.36 979.30,1014.27 984.30,1014.19 989.30,1014.10 994.30,1014.01 999.30,1013.92 1004.30,1013.83 1009.30,1013.74 1014.30,1013.65 1019.30,1013.56 1024.30,1013.46 1029.30,1013.37 1034.30,1013.28 1039.30,1013.18 1044.30,1013.09 1049.30,1012.99 1054.30,1012.89 1059.30,1012.80 1064.30,1012.70 1069.30,1012.60 1074.30,1012.50 1079.30,1012.41 1084.30,1012.31 1089.30,1012.21 1094.30,1012.11 1099.30,1012.01 1104.30,1011.91 1109.30,1011.81 1114.30,1011.71 1119.30,1011.62 1124.30,1011.52 1129.30,1011.42 1134.30,1011.32 1139.30,1011.22 1144.30,1011.12 1149.30,1011.03 1154.30,1010.93 1159.30,1010.83 1164.30,1010.73 1169.30,1010.64 1174.30,1010.54 1179.30,1010.45 1184.30,1010.35 1189.30,1010.26 1194.30,1010.16 1199.30,1010.07 1204.30,1009.98 1209.30,1009.88 1214.30,1009.79 1219.30,1009.70 1224.30,1009.61 1229.30,1009.52 1234.30,1009.44 1239.30,1009.35 1244.30,1009.26 1249.30,1009.18 1254.30,1009.09 1259.30,1009.01 1264.30,1008.93 1269.30,1008.85 1274.30,1008.77 1279.30,1008.69 1284.30,1008.61 1289.30,1008.53 1294.30,1008.46 1299.30,1008.38 1304.30,1008.31 1309.30,1008.23 1314.30,1008.16 1319.30,1008.09 1324.30,1008.01 1329.30,1007.94 1334.30,1007.87 1339.30,1007.80 1344.30,1007.73 1349.30,1007.66 1354.30,1007.59 1359.30,1007.52 1364.30,1007.45 1369.30,1007.38 1374.30,1007.31 1379.30,1007.24 1384.30,1007.17 1389.30,1007.11 1394.30,1007.04 1399.30,1006.97 1404.30,1006.90 1409.30,1006.83 1414.30,1006.76 1419.30,1006.70 1424.30,1006.63 1429.30,1006.56 1434.30,1006.49 1439.30,1006.42 1444.30,1006.35 1449.30,1006.28 1454.30,1006.21 1459.30,1006.14 1464.30,1006.07 1469.30,1006.00 1474.30,1005.93 1479.30,1005.86 1484.30,1005.79 1489.30,1005.71 1494.30,1005.64 1499.30,1005.56 1504.30,1005.49 1509.30,1005.41 1514.30,1005.34 1519.30,1005.26 1524.30,1005.18 1529.30,1005.10 1534.30,1005.02 1539.30,1004.94 1544.30,1004.86 1549.30,1004.78 1554.30,1004.70 1559.30,1004.61 1564.30,1004.53 1569.30,1004.44 1574.30,1004.36 1579.30,1004.27 1584.30,1004.18 1589.30,1004.10 1594.30,1004.01 1599.30,1003.93 1604.30,1003.84 1609.30,1003.75 1614.30,1003.67 1619.30,1003.58 1624.30,1003.49 1629.30,1003.40 1634.30,1003.31 1639.30,1003.22 1644.30,1003.13 1649.30,1003.04 1654.30,1002.95 1659.30,1002.86 1664.30,1002.77 1669.30,1002.68 1674.30,1002.59 1679.30,1002.49 1684.30,1002.40 1689.30,1002.30 1694.30,1002.21 1699.30,1002.11 1704.30,1002.02 1709.30,1001.92 1714.30,1001.82 1719.30,1001.72 1724.30,1001.62 1729.30,1001.52 1734.30,1001.42 1739.30,1001.32 1744.30,1001.21 1749.30,1001.11 1754.30,1001.00 1759.30,1000.90 1764.30,1000.79 1769.30,1000.68 1774.30,1000.57 1779.30,1000.46 1784.30,1000.35 1789.30,1000.23 1794.30,1000.12 1799.30,1000.00 1804.30,999.89 1809.30,999.77 1814.30,999.65 1819.30,999.53 1824.30,999.41 1829.30,999.29 1834.30,999.16 1839.30,999.04 1844.30,998.91 1849.30,998.78 1854.30,998.65 1859.30,998.52 1864.30,998.38 1869.30,998.24 1874.30,998.10 1879.30,997.94 1884.30,997.79 1889.30,997.62 1894.30,997.46 1899.30,997.29 1904.30,997.11 1909.30,996.94 1914.30,996.76 1919.30,996.57 1924.30,996.39 1929.30,996.20 1934.30,996.02 1939.30,995.83 1944.30,995.64 1949.30,995.45 1954.30,995.26 1959.30,995.07 1964.30,994.88 1969.30,994.69 1974.30,994.51 1979.30,994.32 1984.30,994.14 1989.30,993.96 1994.30,993.79 1999.30,993.62 2004.30,993.45 2009.30,993.28 2014.30,993.12 2019.30,992.96 2024.30,992.81 2029.30,992.66 2034.30,992.51 2039.30,992.36 2044.30,992.21 2049.30,992.06 2054.30,991.92 2059.30,991.77 2064.30,991.63 2069.30,991.49 2074.30,991.35 2079.30,991.20 2084.30,991.06 2089.30,990.92 2094.30,990.77 2099.30,990.63 2104.30,990.48 2109.30,990.33 2114.30,990.18 2119.30,990.03 2124.30,989.88 2129.30,989.72 2134.30,989.56 2139.30,989.40 2144.30,989.24 2149.30,989.07 2154.30,988.90 2159.30,988.72 2164.30,988.55 2169.30,988.37 2174.30,988.19 2179.30,988.01 2184.30,987.82 2189.30,987.64 2194.30,987.46 2199.30,987.27 2204.30,987.08 2209.30,986.89 2214.30,986.71 2219.30,986.51 2224.30,986.32 2229.30,986.13 2234.30,985.93 2239.30,985.74 2244.30,985.54 2249.30,985.34 2254.30,985.14 2259.30,984.94 2264.30,984.73 2269.30,984.53 2274.30,984.32 2279.30,984.11 2284.30,983.90 2289.30,983.69 2294.30,983.47 2299.30,983.26 2304.30,983.04 2309.30,982.82 2314.30,982.60 2319.30,982.38 2324.30,982.15 2329.30,981.93 2334.30,981.70 2339.30,981.47 2344.30,981.23 2349.30,981.00 2354.30,980.76 2359.30,980.52 2364.30,980.28 2369.30,980.03 2374.30,979.79 2379.30,979.54 2384.30,979.29 2389.30,979.04 2394.30,978.78 2399.30,978.53 2404.30,978.27 2409.30,978.00 2414.30,977.74 2419.30,977.47 2424.30,977.20 2429.30,976.93 2434.30,976.65 2439.30,976.38 2444.30,976.10 2449.30,975.81 2454.30,975.53 2459.30,975.24 2464.30,974.95 2469.30,974.66 2474.30,974.37 2479.30,974.07 2484.30,973.78 2489.30,973.48 2494.30,973.18 2499.30,972.88 2504.30,972.57 2509.30,972.26 2514.30,971.94 2519.30,971.62 2524.30,971.30 2529.30,970.97 2534.30,970.63 2539.30,970.29 2544.30,969.94 2549.30,969.58 2554.30,969.22 2559.30,968.85 2564.30,968.46 2569.30,968.08 2574.30,967.68 2579.30,967.27 2584.30,966.85 2589.30,966.42 2594.30,965.98 2599.30,965.53 2604.30,965.07 2609.30,964.60 2614.30,964.11 2619.30,963.61 2624.30,963.10 2629.30,962.57 2634.30,962.03 2639.30,961.48 2644.30,960.90 2649.30,960.28 2654.30,959.63 2659.30,958.94 2664.30,958.21 2669.30,957.45 2674.30,956.66 2679.30,955.83 2684.30,954.97 2689.30,954.08 2694.30,953.16 2699.30,952.21 2704.30,951.23 2709.30,950.23 2714.30,949.20 2719.30,948.15 2724.30,947.07 2729.30,945.96 2734.30,944.84 2739.30,943.69 2744.30,942.53 2749.30,941.34 2754.30,940.14 2759.30,938.92 2764.30,937.68 2769.30,936.43 2774.30,935.17 2779.30,933.89 2784.30,932.60 2786.00,932.15 2786.50,932.02 2787.00,931.89 2787.50,931.76 2788.00,931.63 2788.50,931.50 2789.00,931.37 2789.50,931.24 2790.00,931.11 2790.50,930.98 2791.00,930.85 2791.50,930.72 2792.00,930.58 2792.50,930.45 2793.00,930.32 2793.50,930.19 2794.00,930.06 2794.50,929.93 2795.00,929.79 2795.50,929.66 2796.00,929.53 2796.50,929.40 2797.00,929.26 2797.50,929.13 2798.00,929.00" fill="none" stroke="#78797c" stroke-width="2"/>
<path d="M82.30,1039.50 82.80,1039.46 83.30,1039.42 83.80,1039.38 84.30,1039.34 84.80,1039.30 85.30,1039.26 85.80,1039.22 86.30,1039.17 86.80,1039.13 87.30,1039.09 87.80,1039.05 88.30,1039.01 88.80,1038.97 89.30,1038.93 89.80,1038.89 90.30,1038.85 90.80,1038.81 91.30,1038.77 91.80,1038.73 92.30,1038.69 92.80,1038.65 93.30,1038.61 93.80,1038.57 94.30,1038.53 99.30,1038.14 104.30,1037.75 109.30,1037.36 114.30,1036.99 119.30,1036.61 124.30,1036.24 129.30,1035.88 134.30,1035.52 139.30,1035.17 144.30,1034.82 149.30,1034.48 154.30,1034.14 159.30,1033.81 164.30,1033.49 169.30,1033.17 174.30,1032.86 179.30,1032.56 184.30,1032.26 189.30,1031.97 194.30,1031.69 199.30,1031.41 204.30,1031.14 209.30,1030.87 214.30,1030.62 219.30,1030.37 224.30,1030.13 229.30,1029.89 234.30,1029.66 239.30,1029.44 244.30,1029.23 249.30,1029.03 254.30,1028.83 259.30,1028.62 264.30,1028.42 269.30,1028.21 274.30,1028.00 279.30,1027.79 284.30,1027.59 289.30,1027.39 294.30,1027.19 299.30,1027.00 304.30,1026.81 309.30,1026.63 314.30,1026.46 319.30,1026.29 324.30,1026.14 329.30,1026.00 334.30,1025.87 339.30,1025.75 344.30,1025.65 349.30,1025.57 354.30,1025.50 359.30,1025.45 364.30,1025.41 369.30,1025.40 374.30,1025.40 379.30,1025.42 384.30,1025.44 389.30,1025.47 394.30,1025.51 399.30,1025.56 404.30,1025.61 409.30,1025.66 414.30,1025.72 419.30,1025.79 424.30,1025.85 429.30,1025.92 434.30,1025.99 439.30,1026.06 444.30,1026.13 449.30,1026.19 454.30,1026.26 459.30,1026.32 464.30,1026.38 469.30,1026.43 474.30,1026.48 479.30,1026.52 484.30,1026.55 489.30,1026.58 494.30,1026.59 499.30,1026.60 504.30,1026.60 509.30,1026.60 514.30,1026.60 519.30,1026.60 524.30,1026.60 529.30,1026.60 534.30,1026.60 539.30,1026.60 544.30,1026.60 549.30,1026.60 554.30,1026.60 559.30,1026.60 564.30,1026.60 569.30,1026.61 574.30,1026.62 579.30,1026.64 584.30,1026.66 589.30,1026.68 594.30,1026.71 599.30,1026.74 604.30,1026.77 609.30,1026.80 614.30,1026.83 619.30,1026.86 624.30,1026.88 629.30,1026.91 634.30,1026.93 639.30,1026.96 644.30,1026.97 649.30,1026.99 654.30,1027.00 659.30,1027.00 664.30,1027.00 669.30,1027.00 674.30,1026.99 679.30,1026.98 684.30,1026.97 689.30,1026.96 694.30,1026.95 699.30,1026.93 704.30,1026.91 709.30,1026.89 714.30,1026.87 719.30,1026.85 724.30,1026.82 729.30,1026.80 734.30,1026.77 739.30,1026.74 744.30,1026.71 749.30,1026.67 754.30,1026.64 759.30,1026.60 764.30,1026.56 769.30,1026.52 774.30,1026.48 779.30,1026.44 784.30,1026.40 789.30,1026.36 794.30,1026.31 799.30,1026.27 804.30,1026.22 809.30,1026.17 814.30,1026.13 819.30,1026.08 824.30,1026.03 829.30,1025.98 834.30,1025.93 839.30,1025.88 844.30,1025.82 849.30,1025.77 854.30,1025.72 859.30,1025.67 864.30,1025.61 869.30,1025.56 874.30,1025.50 879.30,1025.45 884.30,1025.40 889.30,1025.34 894.30,1025.29 899.30,1025.23 904.30,1025.18 909.30,1025.13 914.30,1025.07 919.30,1025.02 924.30,1024.97 929.30,1024.91 934.30,1024.86 939.30,1024.81 944.30,1024.76 949.30,1024.71 954.30,1024.66 959.30,1024.61 964.30,1024.56 969.30,1024.51 974.30,1024.46 979.30,1024.40 984.30,1024.35 989.30,1024.30 994.30,1024.24 999.30,1024.19 1004.30,1024.13 1009.30,1024.07 1014.30,1024.02 1019.30,1023.96 1024.30,1023.90 1029.30,1023.84 1034.30,1023.78 1039.30,1023.72 1044.30,1023.66 1049.30,1023.60 1054.30,1023.53 1059.30,1023.47 1064.30,1023.41 1069.30,1023.34 1074.30,1023.28 1079.30,1023.22 1084.30,1023.15 1089.30,1023.09 1094.30,1023.02 1099.30,1022.95 1104.30,1022.89 1109.30,1022.82 1114.30,1022.75 1119.30,1022.69 1124.30,1022.62 1129.30,1022.55 1134.30,1022.48 1139.30,1022.42 1144.30,1022.35 1149.30,1022.28 1154.30,1022.21 1159.30,1022.14 1164.30,1022.08 1169.30,1022.01 1174.30,1021.94 1179.30,1021.87 1184.30,1021.80 1189.30,1021.74 1194.30,1021.67 1199.30,1021.60 1204.30,1021.53 1209.30,1021.47 1214.30,1021.40 1219.30,1021.33 1224.30,1021.27 1229.30,1021.20 1234.30,1021.13 1239.30,1021.07 1244.30,1021.00 1249.30,1020.94 1254.30,1020.87 1259.30,1020.81 1264.30,1020.75 1269.30,1020.68 1274.30,1020.62 1279.30,1020.55 1284.30,1020.49 1289.30,1020.42 1294.30,1020.36 1299.30,1020.30 1304.30,1020.23 1309.30,1020.17 1314.30,1020.10 1319.30,1020.04 1324.30,1019.97 1329.30,1019.91 1334.30,1019.84 1339.30,1019.78 1344.30,1019.71 1349.30,1019.65 1354.30,1019.58 1359.30,1019.52 1364.30,1019.46 1369.30,1019.39 1374.30,1019.33 1379.30,1019.26 1384.30,1019.20 1389.30,1019.14 1394.30,1019.07 1399.30,1019.01 1404.30,1018.95 1409.30,1018.88 1414.30,1018.82 1419.30,1018.76 1424.30,1018.70 1429.30,1018.64 1434.30,1018.57 1439.30,1018.51 1444.30,1018.45 1449.30,1018.39 1454.30,1018.33 1459.30,1018.27 1464.30,1018.21 1469.30,1018.15 1474.30,1018.09 1479.30,1018.03 1484.30,1017.97 1489.30,1017.91 1494.30,1017.84 1499.30,1017.78 1504.30,1017.72 1509.30,1017.66 1514.30,1017.60 1519.30,1017.53 1524.30,1017.47 1529.30,1017.41 1534.30,1017.34 1539.30,1017.28 1544.30,1017.21 1549.30,1017.14 1554.30,1017.08 1559.30,1017.01 1564.30,1016.94 1569.30,1016.87 1574.30,1016.81 1579.30,1016.74 1584.30,1016.67 1589.30,1016.61 1594.30,1016.54 1599.30,1016.48 1604.30,1016.41 1609.30,1016.35 1614.30,1016.28 1619.30,1016.22 1624.30,1016.15 1629.30,1016.09 1634.30,1016.02 1639.30,1015.96 1644.30,1015.89 1649.30,1015.83 1654.30,1015.76 1659.30,1015.70 1664.30,1015.63 1669.30,1015.57 1674.30,1015.50 1679.30,1015.43 1684.30,1015.37 1689.30,1015.30 1694.30,1015.23 1699.30,1015.16 1704.30,1015.09 1709.30,1015.02 1714.30,1014.95 1719.30,1014.88 1724.30,1014.81 1729.30,1014.74 1734.30,1014.66 1739.30,1014.59 1744.30,1014.51 1749.30,1014.43 1754.30,1014.36 1759.30,1014.28 1764.30,1014.20 1769.30,1014.12 1774.30,1014.03 1779.30,1013.95 1784.30,1013.87 1789.30,1013.78 1794.30,1013.69 1799.30,1013.60 1804.30,1013.51 1809.30,1013.42 1814.30,1013.33 1819.30,1013.23 1824.30,1013.14 1829.30,1013.04 1834.30,1012.94 1839.30,1012.84 1844.30,1012.74 1849.30,1012.63 1854.30,1012.52 1859.30,1012.42 1864.30,1012.30 1869.30,1012.18 1874.30,1012.05 1879.30,1011.92 1884.30,1011.78 1889.30,1011.63 1894.30,1011.48 1899.30,1011.32 1904.30,1011.16 1909.30,1010.99 1914.30,1010.82 1919.30,1010.65 1924.30,1010.47 1929.30,1010.29 1934.30,1010.11 1939.30,1009.92 1944.30,1009.74 1949.30,1009.55 1954.30,1009.37 1959.30,1009.18 1964.30,1008.99 1969.30,1008.80 1974.30,1008.62 1979.30,1008.43 1984.30,1008.25 1989.30,1008.07 1994.30,1007.89 1999.30,1007.72 2004.30,1007.55 2009.30,1007.38 2014.30,1007.22 2019.30,1007.06 2024.30,1006.90 2029.30,1006.74 2034.30,1006.58 2039.30,1006.43 2044.30,1006.27 2049.30,1006.12 2054.30,1005.97 2059.30,1005.81 2064.30,1005.66 2069.30,1005.51 2074.30,1005.36 2079.30,1005.20 2084.30,1005.05 2089.30,1004.90 2094.30,1004.74 2099.30,1004.58 2104.30,1004.43 2109.30,1004.27 2114.30,1004.10 2119.30,1003.94 2124.30,1003.77 2129.30,1003.60 2134.30,1003.43 2139.30,1003.26 2144.30,1003.08 2149.30,1002.90 2154.30,1002.72 2159.30,1002.53 2164.30,1002.33 2169.30,1002.14 2174.30,1001.94 2179.30,1001.74 2184.30,1001.54 2189.30,1001.34 2194.30,1001.13 2199.30,1000.92 2204.30,1000.71 2209.30,1000.49 2214.30,1000.27 2219.30,1000.05 2224.30,999.83 2229.30,999.60 2234.30,999.37 2239.30,999.14 2244.30,998.90 2249.30,998.66 2254.30,998.42 2259.30,998.18 2264.30,997.93 2269.30,997.68 2274.30,997.43 2279.30,997.17 2284.30,996.91 2289.30,996.65 2294.30,996.39 2299.30,996.12 2304.30,995.85 2309.30,995.57 2314.30,995.29 2319.30,995.01 2324.30,994.72 2329.30,994.43 2334.30,994.13 2339.30,993.83 2344.30,993.52 2349.30,993.21 2354.30,992.89 2359.30,992.57 2364.30,992.24 2369.30,991.91 2374.30,991.57 2379.30,991.23 2384.30,990.89 2389.30,990.54 2394.30,990.19 2399.30,989.83 2404.30,989.47 2409.30,989.11 2414.30,988.74 2419.30,988.37 2424.30,988.00 2429.30,987.62 2434.30,987.24 2439.30,986.85 2444.30,986.46 2449.30,986.06 2454.30,985.65 2459.30,985.24 2464.30,984.81 2469.30,984.38 2474.30,983.94 2479.30,983.49 2484.30,983.04 2489.30,982.59 2494.30,982.13 2499.30,981.66 2504.30,981.19 2509.30,980.72 2514.30,980.25 2519.30,979.77 2524.30,979.30 2529.30,978.82 2534.30,978.34 2539.30,977.87 2544.30,977.39 2549.30,976.92 2554.30,976.46 2559.30,975.99 2564.30,975.53 2569.30,975.07 2574.30,974.60 2579.30,974.14 2584.30,973.66 2589.30,973.18 2594.30,972.70 2599.30,972.20 2604.30,971.70 2609.30,971.18 2614.30,970.66 2619.30,970.12 2624.30,969.56 2629.30,968.99 2634.30,968.40 2639.30,967.79 2644.30,967.16 2649.30,966.53 2654.30,965.88 2659.30,965.22 2664.30,964.54 2669.30,963.84 2674.30,963.11 2679.30,962.37 2684.30,961.59 2689.30,960.78 2694.30,959.94 2699.30,959.07 2704.30,958.15 2709.30,957.20 2714.30,956.20 2719.30,955.15 2724.30,954.04 2729.30,952.84 2734.30,951.54 2739.30,950.17 2744.30,948.71 2749.30,947.17 2754.30,945.56 2759.30,943.89 2764.30,942.15 2769.30,940.34 2774.30,938.48 2779.30,936.57 2784.30,934.60 2786.00,933.92 2786.50,933.72 2787.00,933.52 2787.50,933.32 2788.00,933.12 2788.50,932.92 2789.00,932.72 2789.50,932.51 2790.00,932.31 2790.50,932.10 2791.00,931.90 2791.50,931.70 2792.00,931.49 2792.50,931.29 2793.00,931.08 2793.50,930.87 2794.00,930.67 2794.50,930.46 2795.00,930.25 2795.50,930.04 2796.00,929.84 2796.50,929.63 2797.00,929.42 2797.50,929.21 2798.00,929.00" fill="none" stroke="#7a7b7e" stroke-width="2.2"/>
<path d="M82.30,1039.50 82.80,1039.54 83.30,1039.58 83.80,1039.62 84.30,1039.67 84.80,1039.71 85.30,1039.75 85.80,1039.79 86.30,1039.83 86.80,1039.87 87.30,1039.91 87.80,1039.95 88.30,1039.99 88.80,1040.03 89.30,1040.07 89.80,1040.11 90.30,1040.15 90.80,1040.19 91.30,1040.23 91.80,1040.27 92.30,1040.31 92.80,1040.35 93.30,1040.39 93.80,1040.43 94.30,1040.47 99.30,1040.85 104.30,1041.21 109.30,1041.56 114.30,1041.88 119.30,1042.18 124.30,1042.45 129.30,1042.68 134.30,1042.89 139.30,1043.07 144.30,1043.24 149.30,1043.38 154.30,1043.52 159.30,1043.64 164.30,1043.76 169.30,1043.88 174.30,1044.01 179.30,1044.14 184.30,1044.28 189.30,1044.44 194.30,1044.61 199.30,1044.81 204.30,1045.02 209.30,1045.25 214.30,1045.49 219.30,1045.75 224.30,1046.01 229.30,1046.28 234.30,1046.55 239.30,1046.82 244.30,1047.09 249.30,1047.36 254.30,1047.61 259.30,1047.86 264.30,1048.11 269.30,1048.34 274.30,1048.58 279.30,1048.82 284.30,1049.05 289.30,1049.29 294.30,1049.53 299.30,1049.78 304.30,1050.04 309.30,1050.31 314.30,1050.59 319.30,1050.88 324.30,1051.19 329.30,1051.53 334.30,1051.89 339.30,1052.26 344.30,1052.64 349.30,1053.02 354.30,1053.40 359.30,1053.76 364.30,1054.12 369.30,1054.45 374.30,1054.77 379.30,1055.09 384.30,1055.39 389.30,1055.70 394.30,1055.99 399.30,1056.29 404.30,1056.58 409.30,1056.86 414.30,1057.15 419.30,1057.43 424.30,1057.70 429.30,1057.98 434.30,1058.25 439.30,1058.53 444.30,1058.80 449.30,1059.07 454.30,1059.34 459.30,1059.62 464.30,1059.89 469.30,1060.16 474.30,1060.44 479.30,1060.72 484.30,1061.00 489.30,1061.28 494.30,1061.57 499.30,1061.86 504.30,1062.15 509.30,1062.45 514.30,1062.75 519.30,1063.05 524.30,1063.35 529.30,1063.65 534.30,1063.95 539.30,1064.25 544.30,1064.56 549.30,1064.86 554.30,1065.16 559.30,1065.46 564.30,1065.76 569.30,1066.05 574.30,1066.35 579.30,1066.64 584.30,1066.94 589.30,1067.23 594.30,1067.53 599.30,1067.82 604.30,1068.12 609.30,1068.42 614.30,1068.72 619.30,1069.02 624.30,1069.33 629.30,1069.65 634.30,1069.96 639.30,1070.28 644.30,1070.59 649.30,1070.89 654.30,1071.18 659.30,1071.46 664.30,1071.73 669.30,1072.00 674.30,1072.26 679.30,1072.52 684.30,1072.77 689.30,1073.02 694.30,1073.26 699.30,1073.50 704.30,1073.74 709.30,1073.98 714.30,1074.21 719.30,1074.44 724.30,1074.67 729.30,1074.89 734.30,1075.11 739.30,1075.34 744.30,1075.56 749.30,1075.77 754.30,1075.99 759.30,1076.20 764.30,1076.40 769.30,1076.61 774.30,1076.81 779.30,1077.01 784.30,1077.20 789.30,1077.40 794.30,1077.59 799.30,1077.78 804.30,1077.97 809.30,1078.16 814.30,1078.35 819.30,1078.55 824.30,1078.74 829.30,1078.93 834.30,1079.12 839.30,1079.31 844.30,1079.51 849.30,1079.70 854.30,1079.90 859.30,1080.10 864.30,1080.31 869.30,1080.52 874.30,1080.73 879.30,1080.94 884.30,1081.16 889.30,1081.39 894.30,1081.63 899.30,1081.87 904.30,1082.12 909.30,1082.38 914.30,1082.63 919.30,1082.89 924.30,1083.14 929.30,1083.39 934.30,1083.63 939.30,1083.86 944.30,1084.08 949.30,1084.30 954.30,1084.49 959.30,1084.68 964.30,1084.85 969.30,1085.01 974.30,1085.17 979.30,1085.33 984.30,1085.49 989.30,1085.64 994.30,1085.78 999.30,1085.93 1004.30,1086.07 1009.30,1086.21 1014.30,1086.34 1019.30,1086.47 1024.30,1086.60 1029.30,1086.73 1034.30,1086.85 1039.30,1086.98 1044.30,1087.10 1049.30,1087.22 1054.30,1087.34 1059.30,1087.45 1064.30,1087.57 1069.30,1087.68 1074.30,1087.79 1079.30,1087.91 1084.30,1088.02 1089.30,1088.13 1094.30,1088.24 1099.30,1088.35 1104.30,1088.46 1109.30,1088.57 1114.30,1088.68 1119.30,1088.80 1124.30,1088.91 1129.30,1089.02 1134.30,1089.14 1139.30,1089.25 1144.30,1089.37 1149.30,1089.49 1154.30,1089.61 1159.30,1089.73 1164.30,1089.85 1169.30,1089.98 1174.30,1090.10 1179.30,1090.23 1184.30,1090.37 1189.30,1090.51 1194.30,1090.66 1199.30,1090.81 1204.30,1090.96 1209.30,1091.11 1214.30,1091.26 1219.30,1091.41 1224.30,1091.55 1229.30,1091.69 1234.30,1091.83 1239.30,1091.96 1244.30,1092.08 1249.30,1092.19 1254.30,1092.30 1259.30,1092.39 1264.30,1092.47 1269.30,1092.55 1274.30,1092.63 1279.30,1092.71 1284.30,1092.79 1289.30,1092.86 1294.30,1092.93 1299.30,1093.01 1304.30,1093.08 1309.30,1093.14 1314.30,1093.21 1319.30,1093.27 1324.30,1093.34 1329.30,1093.40 1334.30,1093.45 1339.30,1093.51 1344.30,1093.56 1349.30,1093.61 1354.30,1093.66 1359.30,1093.71 1364.30,1093.76 1369.30,1093.80 1374.30,1093.84 1379.30,1093.87 1384.30,1093.91 1389.30,1093.94 1394.30,1093.97 1399.30,1094.00 1404.30,1094.02 1409.30,1094.05 1414.30,1094.07 1419.30,1094.09 1424.30,1094.12 1429.30,1094.14 1434.30,1094.16 1439.30,1094.19 1444.30,1094.21 1449.30,1094.23 1454.30,1094.25 1459.30,1094.27 1464.30,1094.29 1469.30,1094.31 1474.30,1094.33 1479.30,1094.35 1484.30,1094.36 1489.30,1094.38 1494.30,1094.40 1499.30,1094.41 1504.30,1094.42 1509.30,1094.44 1514.30,1094.45 1519.30,1094.46 1524.30,1094.47 1529.30,1094.48 1534.30,1094.48 1539.30,1094.49 1544.30,1094.49 1549.30,1094.50 1554.30,1094.50 1559.30,1094.50 1564.30,1094.50 1569.30,1094.49 1574.30,1094.47 1579.30,1094.45 1584.30,1094.42 1589.30,1094.38 1594.30,1094.34 1599.30,1094.30 1604.30,1094.25 1609.30,1094.19 1614.30,1094.13 1619.30,1094.07 1624.30,1094.00 1629.30,1093.93 1634.30,1093.86 1639.30,1093.78 1644.30,1093.71 1649.30,1093.62 1654.30,1093.54 1659.30,1093.46 1664.30,1093.37 1669.30,1093.28 1674.30,1093.20 1679.30,1093.11 1684.30,1093.02 1689.30,1092.93 1694.30,1092.85 1699.30,1092.76 1704.30,1092.68 1709.30,1092.59 1714.30,1092.51 1719.30,1092.42 1724.30,1092.33 1729.30,1092.24 1734.30,1092.14 1739.30,1092.04 1744.30,1091.94 1749.30,1091.84 1754.30,1091.74 1759.30,1091.63 1764.30,1091.52 1769.30,1091.41 1774.30,1091.29 1779.30,1091.18 1784.30,1091.06 1789.30,1090.94 1794.30,1090.81 1799.30,1090.69 1804.30,1090.56 1809.30,1090.43 1814.30,1090.30 1819.30,1090.16 1824.30,1090.03 1829.30,1089.89 1834.30,1089.75 1839.30,1089.61 1844.30,1089.46 1849.30,1089.32 1854.30,1089.17 1859.30,1089.02 1864.30,1088.87 1869.30,1088.71 1874.30,1088.55 1879.30,1088.39 1884.30,1088.22 1889.30,1088.05 1894.30,1087.87 1899.30,1087.70 1904.30,1087.51 1909.30,1087.33 1914.30,1087.14 1919.30,1086.94 1924.30,1086.75 1929.30,1086.55 1934.30,1086.34 1939.30,1086.13 1944.30,1085.92 1949.30,1085.71 1954.30,1085.49 1959.30,1085.27 1964.30,1085.04 1969.30,1084.82 1974.30,1084.58 1979.30,1084.35 1984.30,1084.11 1989.30,1083.87 1994.30,1083.63 1999.30,1083.38 2004.30,1083.13 2009.30,1082.87 2014.30,1082.62 2019.30,1082.35 2024.30,1082.08 2029.30,1081.80 2034.30,1081.51 2039.30,1081.22 2044.30,1080.92 2049.30,1080.61 2054.30,1080.30 2059.30,1079.99 2064.30,1079.66 2069.30,1079.34 2074.30,1079.00 2079.30,1078.67 2084.30,1078.32 2089.30,1077.98 2094.30,1077.63 2099.30,1077.27 2104.30,1076.91 2109.30,1076.55 2114.30,1076.18 2119.30,1075.82 2124.30,1075.44 2129.30,1075.07 2134.30,1074.69 2139.30,1074.31 2144.30,1073.92 2149.30,1073.53 2154.30,1073.15 2159.30,1072.75 2164.30,1072.36 2169.30,1071.96 2174.30,1071.56 2179.30,1071.15 2184.30,1070.74 2189.30,1070.32 2194.30,1069.90 2199.30,1069.47 2204.30,1069.04 2209.30,1068.60 2214.30,1068.15 2219.30,1067.71 2224.30,1067.25 2229.30,1066.79 2234.30,1066.33 2239.30,1065.86 2244.30,1065.39 2249.30,1064.91 2254.30,1064.42 2259.30,1063.93 2264.30,1063.44 2269.30,1062.94 2274.30,1062.43 2279.30,1061.92 2284.30,1061.41 2289.30,1060.89 2294.30,1060.36 2299.30,1059.83 2304.30,1059.29 2309.30,1058.75 2314.30,1058.19 2319.30,1057.63 2324.30,1057.06 2329.30,1056.48 2334.30,1055.88 2339.30,1055.28 2344.30,1054.67 2349.30,1054.05 2354.30,1053.42 2359.30,1052.79 2364.30,1052.14 2369.30,1051.49 2374.30,1050.83 2379.30,1050.16 2384.30,1049.49 2389.30,1048.81 2394.30,1048.12 2399.30,1047.43 2404.30,1046.73 2409.30,1046.03 2414.30,1045.32 2419.30,1044.60 2424.30,1043.88 2429.30,1043.16 2434.30,1042.43 2439.30,1041.69 2444.30,1040.96 2449.30,1040.22 2454.30,1039.48 2459.30,1038.73 2464.30,1037.98 2469.30,1037.23 2474.30,1036.48 2479.30,1035.72 2484.30,1034.97 2489.30,1034.21 2494.30,1033.45 2499.30,1032.69 2504.30,1031.93 2509.30,1031.18 2514.30,1030.42 2519.30,1029.66 2524.30,1028.90 2529.30,1028.14 2534.30,1027.39 2539.30,1026.63 2544.30,1025.88 2549.30,1025.13 2554.30,1024.38 2559.30,1023.63 2564.30,1022.89 2569.30,1022.15 2574.30,1021.41 2579.30,1020.68 2584.30,1019.95 2589.30,1019.23 2594.30,1018.51 2599.30,1017.79 2604.30,1017.08 2609.30,1016.38 2614.30,1015.68 2619.30,1014.98 2624.30,1014.30 2629.30,1013.62 2634.30,1012.94 2639.30,1012.27 2644.30,1011.61 2649.30,1010.96 2654.30,1010.32 2659.30,1009.68 2664.30,1009.05 2669.30,1008.43 2674.30,1007.82 2679.30,1007.22 2684.30,1006.63 2689.30,1006.04 2694.30,1005.47 2699.30,1004.91 2704.30,1004.35 2709.30,1003.81 2714.30,1003.28 2719.30,1002.76 2724.30,1002.26 2729.30,1001.76 2734.30,1001.28 2739.30,1000.81 2744.30,1000.35 2749.30,999.90 2754.30,999.47 2759.30,999.05 2764.30,998.65 2769.30,998.26 2774.30,997.88 2779.30,997.52 2784.30,997.17 2786.00,997.06 2786.50,997.02 2787.00,996.99 2787.50,996.96 2788.00,996.92 2788.50,996.89 2789.00,996.86 2789.50,996.83 2790.00,996.79 2790.50,996.76 2791.00,996.73 2791.50,996.70 2792.00,996.67 2792.50,996.63 2793.00,996.60 2793.50,996.57 2794.00,996.54 2794.50,996.51 2795.00,996.48 2795.50,996.45 2796.00,996.42 2796.50,996.39 2797.00,996.36 2797.50,996.33 2798.00,996.30" fill="none" stroke="#38393c" stroke-width="2.6"/>
<linearGradient id="l2g" gradientUnits="userSpaceOnUse" x1="1650" y1="0" x2="2050" y2="0"><stop offset="0" stop-color="#939497"/><stop offset="1" stop-color="#4e4f52"/></linearGradient>
<path d="M82.30,1039.50 82.80,1039.47 83.30,1039.45 83.80,1039.42 84.30,1039.39 84.80,1039.36 85.30,1039.34 85.80,1039.31 86.30,1039.28 86.80,1039.26 87.30,1039.23 87.80,1039.21 88.30,1039.18 88.80,1039.15 89.30,1039.13 89.80,1039.10 90.30,1039.07 90.80,1039.05 91.30,1039.02 91.80,1039.00 92.30,1038.97 92.80,1038.95 93.30,1038.92 93.80,1038.89 94.30,1038.87 99.30,1038.62 104.30,1038.38 109.30,1038.14 114.30,1037.91 119.30,1037.69 124.30,1037.48 129.30,1037.28 134.30,1037.08 139.30,1036.89 144.30,1036.71 149.30,1036.53 154.30,1036.37 159.30,1036.21 164.30,1036.06 169.30,1035.92 174.30,1035.78 179.30,1035.65 184.30,1035.53 189.30,1035.42 194.30,1035.32 199.30,1035.22 204.30,1035.13 209.30,1035.06 214.30,1034.98 219.30,1034.92 224.30,1034.86 229.30,1034.82 234.30,1034.78 239.30,1034.75 244.30,1034.72 249.30,1034.71 254.30,1034.70 259.30,1034.70 264.30,1034.72 269.30,1034.75 274.30,1034.79 279.30,1034.84 284.30,1034.91 289.30,1034.98 294.30,1035.06 299.30,1035.15 304.30,1035.25 309.30,1035.35 314.30,1035.45 319.30,1035.56 324.30,1035.67 329.30,1035.78 334.30,1035.89 339.30,1036.00 344.30,1036.11 349.30,1036.21 354.30,1036.31 359.30,1036.41 364.30,1036.50 369.30,1036.59 374.30,1036.67 379.30,1036.75 384.30,1036.82 389.30,1036.90 394.30,1036.97 399.30,1037.04 404.30,1037.12 409.30,1037.19 414.30,1037.26 419.30,1037.33 424.30,1037.40 429.30,1037.47 434.30,1037.54 439.30,1037.61 444.30,1037.69 449.30,1037.76 454.30,1037.83 459.30,1037.91 464.30,1037.99 469.30,1038.07 474.30,1038.15 479.30,1038.23 484.30,1038.32 489.30,1038.40 494.30,1038.49 499.30,1038.59 504.30,1038.69 509.30,1038.79 514.30,1038.91 519.30,1039.03 524.30,1039.16 529.30,1039.29 534.30,1039.42 539.30,1039.54 544.30,1039.67 549.30,1039.78 554.30,1039.89 559.30,1039.99 564.30,1040.07 569.30,1040.15 574.30,1040.22 579.30,1040.29 584.30,1040.35 589.30,1040.41 594.30,1040.48 599.30,1040.55 604.30,1040.62 609.30,1040.71 614.30,1040.81 619.30,1040.93 624.30,1041.09 629.30,1041.27 634.30,1041.46 639.30,1041.65 644.30,1041.84 649.30,1042.02 654.30,1042.17 659.30,1042.29 664.30,1042.38 669.30,1042.47 674.30,1042.55 679.30,1042.64 684.30,1042.72 689.30,1042.80 694.30,1042.88 699.30,1042.96 704.30,1043.03 709.30,1043.11 714.30,1043.18 719.30,1043.25 724.30,1043.32 729.30,1043.38 734.30,1043.45 739.30,1043.51 744.30,1043.57 749.30,1043.63 754.30,1043.69 759.30,1043.75 764.30,1043.80 769.30,1043.85 774.30,1043.91 779.30,1043.96 784.30,1044.01 789.30,1044.05 794.30,1044.10 799.30,1044.14 804.30,1044.19 809.30,1044.23 814.30,1044.27 819.30,1044.31 824.30,1044.35 829.30,1044.39 834.30,1044.42 839.30,1044.46 844.30,1044.49 849.30,1044.52 854.30,1044.55 859.30,1044.58 864.30,1044.61 869.30,1044.64 874.30,1044.67 879.30,1044.70 884.30,1044.72 889.30,1044.75 894.30,1044.77 899.30,1044.79 904.30,1044.81 909.30,1044.83 914.30,1044.84 919.30,1044.86 924.30,1044.88 929.30,1044.89 934.30,1044.91 939.30,1044.93 944.30,1044.94 949.30,1044.96 954.30,1044.98 959.30,1045.00 964.30,1045.02 969.30,1045.04 974.30,1045.06 979.30,1045.08 984.30,1045.10 989.30,1045.12 994.30,1045.15 999.30,1045.17 1004.30,1045.19 1009.30,1045.22 1014.30,1045.24 1019.30,1045.27 1024.30,1045.29 1029.30,1045.32 1034.30,1045.35 1039.30,1045.37 1044.30,1045.40 1049.30,1045.43 1054.30,1045.45 1059.30,1045.48 1064.30,1045.51 1069.30,1045.53 1074.30,1045.56 1079.30,1045.58 1084.30,1045.61 1089.30,1045.64 1094.30,1045.66 1099.30,1045.69 1104.30,1045.72 1109.30,1045.74 1114.30,1045.77 1119.30,1045.79 1124.30,1045.81 1129.30,1045.84 1134.30,1045.86 1139.30,1045.89 1144.30,1045.91 1149.30,1045.93 1154.30,1045.95 1159.30,1045.97 1164.30,1045.99 1169.30,1046.01 1174.30,1046.03 1179.30,1046.05 1184.30,1046.06 1189.30,1046.08 1194.30,1046.10 1199.30,1046.11 1204.30,1046.12 1209.30,1046.14 1214.30,1046.15 1219.30,1046.16 1224.30,1046.17 1229.30,1046.18 1234.30,1046.18 1239.30,1046.19 1244.30,1046.19 1249.30,1046.20 1254.30,1046.20 1259.30,1046.20 1264.30,1046.20 1269.30,1046.20 1274.30,1046.20 1279.30,1046.19 1284.30,1046.19 1289.30,1046.19 1294.30,1046.18 1299.30,1046.18 1304.30,1046.17 1309.30,1046.17 1314.30,1046.16 1319.30,1046.16 1324.30,1046.15 1329.30,1046.14 1334.30,1046.13 1339.30,1046.12 1344.30,1046.12 1349.30,1046.11 1354.30,1046.10 1359.30,1046.09 1364.30,1046.08 1369.30,1046.07 1374.30,1046.06 1379.30,1046.05 1384.30,1046.04 1389.30,1046.02 1394.30,1046.01 1399.30,1046.00 1404.30,1045.99 1409.30,1045.98 1414.30,1045.96 1419.30,1045.94 1424.30,1045.92 1429.30,1045.90 1434.30,1045.88 1439.30,1045.86 1444.30,1045.84 1449.30,1045.81 1454.30,1045.78 1459.30,1045.75 1464.30,1045.72 1469.30,1045.69 1474.30,1045.66 1479.30,1045.63 1484.30,1045.60 1489.30,1045.56 1494.30,1045.53 1499.30,1045.49 1504.30,1045.45 1509.30,1045.42 1514.30,1045.38 1519.30,1045.34 1524.30,1045.30 1529.30,1045.26 1534.30,1045.22 1539.30,1045.18 1544.30,1045.13 1549.30,1045.09 1554.30,1045.05 1559.30,1045.01 1564.30,1044.96 1569.30,1044.92 1574.30,1044.87 1579.30,1044.81 1584.30,1044.76 1589.30,1044.70 1594.30,1044.64 1599.30,1044.58 1604.30,1044.52 1609.30,1044.45 1614.30,1044.38 1619.30,1044.31 1624.30,1044.25 1629.30,1044.17 1634.30,1044.10 1639.30,1044.03 1644.30,1043.96 1649.30,1043.88 1654.30,1043.81 1659.30,1043.73 1664.30,1043.66 1669.30,1043.58 1674.30,1043.50 1679.30,1043.43 1684.30,1043.35 1689.30,1043.28 1694.30,1043.21 1699.30,1043.13 1704.30,1043.06 1709.30,1042.99 1714.30,1042.92 1719.30,1042.85 1724.30,1042.79 1729.30,1042.72 1734.30,1042.65 1739.30,1042.58 1744.30,1042.51 1749.30,1042.44 1754.30,1042.37 1759.30,1042.30 1764.30,1042.24 1769.30,1042.17 1774.30,1042.10 1779.30,1042.03 1784.30,1041.96 1789.30,1041.89 1794.30,1041.81 1799.30,1041.74 1804.30,1041.67 1809.30,1041.60 1814.30,1041.52 1819.30,1041.45 1824.30,1041.37 1829.30,1041.30 1834.30,1041.22 1839.30,1041.14 1844.30,1041.06 1849.30,1040.98 1854.30,1040.90 1859.30,1040.81 1864.30,1040.73 1869.30,1040.64 1874.30,1040.56 1879.30,1040.47 1884.30,1040.38 1889.30,1040.30 1894.30,1040.21 1899.30,1040.12 1904.30,1040.03 1909.30,1039.93 1914.30,1039.84 1919.30,1039.75 1924.30,1039.65 1929.30,1039.56 1934.30,1039.46 1939.30,1039.36 1944.30,1039.26 1949.30,1039.16 1954.30,1039.05 1959.30,1038.95 1964.30,1038.84 1969.30,1038.73 1974.30,1038.62 1979.30,1038.51 1984.30,1038.39 1989.30,1038.28 1994.30,1038.16 1999.30,1038.04 2004.30,1037.91 2009.30,1037.79 2014.30,1037.66 2019.30,1037.52 2024.30,1037.39 2029.30,1037.25 2034.30,1037.10 2039.30,1036.95 2044.30,1036.80 2049.30,1036.65 2054.30,1036.49 2059.30,1036.33 2064.30,1036.17 2069.30,1036.00 2074.30,1035.83 2079.30,1035.66 2084.30,1035.48 2089.30,1035.31 2094.30,1035.13 2099.30,1034.95 2104.30,1034.76 2109.30,1034.58 2114.30,1034.39 2119.30,1034.20 2124.30,1034.01 2129.30,1033.81 2134.30,1033.62 2139.30,1033.42 2144.30,1033.23 2149.30,1033.03 2154.30,1032.83 2159.30,1032.63 2164.30,1032.43 2169.30,1032.22 2174.30,1032.01 2179.30,1031.80 2184.30,1031.59 2189.30,1031.37 2194.30,1031.15 2199.30,1030.93 2204.30,1030.70 2209.30,1030.47 2214.30,1030.24 2219.30,1030.01 2224.30,1029.77 2229.30,1029.53 2234.30,1029.29 2239.30,1029.05 2244.30,1028.80 2249.30,1028.55 2254.30,1028.30 2259.30,1028.04 2264.30,1027.79 2269.30,1027.53 2274.30,1027.27 2279.30,1027.00 2284.30,1026.74 2289.30,1026.47 2294.30,1026.20 2299.30,1025.92 2304.30,1025.65 2309.30,1025.37 2314.30,1025.09 2319.30,1024.82 2324.30,1024.54 2329.30,1024.26 2334.30,1023.97 2339.30,1023.69 2344.30,1023.40 2349.30,1023.11 2354.30,1022.82 2359.30,1022.52 2364.30,1022.22 2369.30,1021.91 2374.30,1021.60 2379.30,1021.29 2384.30,1020.97 2389.30,1020.64 2394.30,1020.31 2399.30,1019.97 2404.30,1019.62 2409.30,1019.26 2414.30,1018.90 2419.30,1018.53 2424.30,1018.15 2429.30,1017.76 2434.30,1017.37 2439.30,1016.96 2444.30,1016.54 2449.30,1016.09 2454.30,1015.63 2459.30,1015.15 2464.30,1014.66 2469.30,1014.14 2474.30,1013.62 2479.30,1013.07 2484.30,1012.52 2489.30,1011.95 2494.30,1011.38 2499.30,1010.79 2504.30,1010.19 2509.30,1009.59 2514.30,1008.98 2519.30,1008.37 2524.30,1007.75 2529.30,1007.13 2534.30,1006.51 2539.30,1005.89 2544.30,1005.25 2549.30,1004.59 2554.30,1003.91 2559.30,1003.21 2564.30,1002.50 2569.30,1001.77 2574.30,1001.03 2579.30,1000.30 2584.30,999.56 2589.30,998.82 2594.30,998.10 2599.30,997.38 2604.30,996.68 2609.30,996.00 2614.30,995.34 2619.30,994.71 2624.30,994.12 2629.30,993.55 2634.30,992.99 2639.30,992.44 2644.30,991.88 2649.30,991.31 2654.30,990.72 2659.30,990.09 2664.30,989.45 2669.30,988.83 2674.30,988.19 2679.30,987.53 2684.30,986.80 2689.30,985.99 2694.30,985.06 2699.30,983.97 2704.30,982.62 2709.30,981.00 2714.30,979.14 2719.30,977.07 2724.30,974.82 2729.30,972.42 2734.30,969.88 2739.30,967.24 2744.30,964.53 2749.30,961.77 2754.30,959.00 2759.30,956.20 2764.30,953.23 2769.30,950.06 2774.30,946.71 2779.30,943.21 2784.30,939.56 2786.00,938.29 2786.50,937.91 2787.00,937.54 2787.50,937.16 2788.00,936.78 2788.50,936.40 2789.00,936.02 2789.50,935.64 2790.00,935.25 2790.50,934.87 2791.00,934.48 2791.50,934.10 2792.00,933.71 2792.50,933.32 2793.00,932.93 2793.50,932.55 2794.00,932.15 2794.50,931.76 2795.00,931.37 2795.50,930.98 2796.00,930.58 2796.50,930.19 2797.00,929.79 2797.50,929.40 2798.00,929.00" fill="none" stroke="url(#l2g)" stroke-width="3"/>
</g>
<path d="M82.30,1039.50 82.80,1037.32 83.30,1036.34 83.80,1035.70 84.30,1035.20 84.80,1034.82 85.30,1034.52 85.80,1034.28 86.30,1034.09 86.80,1033.91 87.30,1033.74 87.80,1033.59 88.30,1033.45 88.80,1033.33 89.30,1033.21 89.80,1033.10 90.30,1033.00 90.80,1032.91 91.30,1032.82 91.80,1032.73 92.30,1032.65 92.80,1032.57 93.30,1032.49 93.80,1032.41 94.30,1032.32 99.30,1031.43 104.30,1030.77 109.30,1030.42 114.30,1030.13 119.30,1029.66 124.30,1029.08 129.30,1028.54 134.30,1028.12 139.30,1027.77 144.30,1027.44 149.30,1027.14 154.30,1026.86 159.30,1026.59 164.30,1026.34 169.30,1026.09 174.30,1025.84 179.30,1025.59 184.30,1025.34 189.30,1025.07 194.30,1024.78 199.30,1024.48 204.30,1024.17 209.30,1023.84 214.30,1023.52 219.30,1023.19 224.30,1022.86 229.30,1022.53 234.30,1022.22 239.30,1021.91 244.30,1021.62 249.30,1021.34 254.30,1021.08 259.30,1020.85 264.30,1020.62 269.30,1020.40 274.30,1020.19 279.30,1019.98 284.30,1019.78 289.30,1019.59 294.30,1019.40 299.30,1019.22 304.30,1019.05 309.30,1018.88 314.30,1018.72 319.30,1018.56 324.30,1018.41 329.30,1018.26 334.30,1018.12 339.30,1017.99 344.30,1017.86 349.30,1017.73 354.30,1017.60 359.30,1017.48 364.30,1017.35 369.30,1017.22 374.30,1017.09 379.30,1016.95 384.30,1016.82 389.30,1016.68 394.30,1016.54 399.30,1016.40 404.30,1016.26 409.30,1016.12 414.30,1015.99 419.30,1015.85 424.30,1015.71 429.30,1015.57 434.30,1015.43 439.30,1015.30 444.30,1015.16 449.30,1015.03 454.30,1014.89 459.30,1014.76 464.30,1014.63 469.30,1014.51 474.30,1014.38 479.30,1014.26 484.30,1014.14 489.30,1014.02 494.30,1013.91 499.30,1013.80 504.30,1013.69 509.30,1013.59 514.30,1013.49 519.30,1013.40 524.30,1013.32 529.30,1013.24 534.30,1013.16 539.30,1013.08 544.30,1013.00 549.30,1012.91 554.30,1012.82 559.30,1012.72 564.30,1012.60 569.30,1012.47 574.30,1012.33 579.30,1012.18 584.30,1012.03 589.30,1011.86 594.30,1011.69 599.30,1011.51 604.30,1011.33 609.30,1011.15 614.30,1010.97 619.30,1010.79 624.30,1010.61 629.30,1010.43 634.30,1010.26 639.30,1010.09 644.30,1009.94 649.30,1009.79 654.30,1009.65 659.30,1009.52 664.30,1009.40 669.30,1009.28 674.30,1009.17 679.30,1009.06 684.30,1008.95 689.30,1008.85 694.30,1008.75 699.30,1008.65 704.30,1008.55 709.30,1008.46 714.30,1008.36 719.30,1008.27 724.30,1008.18 729.30,1008.09 734.30,1008.01 739.30,1007.92 744.30,1007.83 749.30,1007.75 754.30,1007.66 759.30,1007.58 764.30,1007.49 769.30,1007.41 774.30,1007.32 779.30,1007.23 784.30,1007.15 789.30,1007.06 794.30,1006.97 799.30,1006.88 804.30,1006.78 809.30,1006.69 814.30,1006.60 819.30,1006.50 824.30,1006.40 829.30,1006.31 834.30,1006.21 839.30,1006.12 844.30,1006.02 849.30,1005.93 854.30,1005.83 859.30,1005.73 864.30,1005.64 869.30,1005.54 874.30,1005.44 879.30,1005.35 884.30,1005.25 889.30,1005.16 894.30,1005.06 899.30,1004.96 904.30,1004.87 909.30,1004.77 914.30,1004.67 919.30,1004.58 924.30,1004.48 929.30,1004.39 934.30,1004.29 939.30,1004.19 944.30,1004.10 949.30,1004.00 954.30,1003.91 959.30,1003.81 964.30,1003.72 969.30,1003.62 974.30,1003.53 979.30,1003.44 984.30,1003.35 989.30,1003.25 994.30,1003.16 999.30,1003.07 1004.30,1002.98 1009.30,1002.89 1014.30,1002.80 1019.30,1002.71 1024.30,1002.62 1029.30,1002.53 1034.30,1002.43 1039.30,1002.34 1044.30,1002.25 1049.30,1002.16 1054.30,1002.07 1059.30,1001.97 1064.30,1001.88 1069.30,1001.78 1074.30,1001.69 1079.30,1001.59 1084.30,1001.49 1089.30,1001.40 1094.30,1001.30 1099.30,1001.19 1104.30,1001.09 1109.30,1000.99 1114.30,1000.88 1119.30,1000.78 1124.30,1000.67 1129.30,1000.56 1134.30,1000.45 1139.30,1000.34 1144.30,1000.22 1149.30,1000.11 1154.30,1000.00 1159.30,999.88 1164.30,999.76 1169.30,999.64 1174.30,999.53 1179.30,999.41 1184.30,999.29 1189.30,999.17 1194.30,999.05 1199.30,998.93 1204.30,998.81 1209.30,998.69 1214.30,998.57 1219.30,998.45 1224.30,998.33 1229.30,998.21 1234.30,998.09 1239.30,997.98 1244.30,997.86 1249.30,997.74 1254.30,997.63 1259.30,997.52 1264.30,997.40 1269.30,997.29 1274.30,997.18 1279.30,997.08 1284.30,996.97 1289.30,996.86 1294.30,996.76 1299.30,996.65 1304.30,996.55 1309.30,996.45 1314.30,996.34 1319.30,996.24 1324.30,996.14 1329.30,996.03 1334.30,995.93 1339.30,995.82 1344.30,995.72 1349.30,995.61 1354.30,995.50 1359.30,995.39 1364.30,995.28 1369.30,995.17 1374.30,995.06 1379.30,994.94 1384.30,994.82 1389.30,994.70 1394.30,994.57 1399.30,994.45 1404.30,994.32 1409.30,994.19 1414.30,994.05 1419.30,993.91 1424.30,993.76 1429.30,993.60 1434.30,993.44 1439.30,993.28 1444.30,993.12 1449.30,992.94 1454.30,992.77 1459.30,992.60 1464.30,992.42 1469.30,992.24 1474.30,992.06 1479.30,991.87 1484.30,991.69 1489.30,991.51 1494.30,991.32 1499.30,991.14 1504.30,990.96 1509.30,990.77 1514.30,990.59 1519.30,990.42 1524.30,990.24 1529.30,990.07 1534.30,989.90 1539.30,989.74 1544.30,989.58 1549.30,989.42 1554.30,989.27 1559.30,989.12 1564.30,988.98 1569.30,988.84 1574.30,988.70 1579.30,988.57 1584.30,988.44 1589.30,988.32 1594.30,988.19 1599.30,988.07 1604.30,987.95 1609.30,987.83 1614.30,987.71 1619.30,987.59 1624.30,987.47 1629.30,987.36 1634.30,987.24 1639.30,987.13 1644.30,987.01 1649.30,986.90 1654.30,986.78 1659.30,986.66 1664.30,986.54 1669.30,986.42 1674.30,986.30 1679.30,986.18 1684.30,986.05 1689.30,985.92 1694.30,985.79 1699.30,985.66 1704.30,985.53 1709.30,985.39 1714.30,985.24 1719.30,985.10 1724.30,984.95 1729.30,984.80 1734.30,984.65 1739.30,984.50 1744.30,984.35 1749.30,984.19 1754.30,984.03 1759.30,983.87 1764.30,983.71 1769.30,983.55 1774.30,983.39 1779.30,983.22 1784.30,983.06 1789.30,982.89 1794.30,982.72 1799.30,982.56 1804.30,982.39 1809.30,982.22 1814.30,982.05 1819.30,981.88 1824.30,981.71 1829.30,981.54 1834.30,981.37 1839.30,981.20 1844.30,981.03 1849.30,980.86 1854.30,980.69 1859.30,980.52 1864.30,980.36 1869.30,980.19 1874.30,980.02 1879.30,979.85 1884.30,979.69 1889.30,979.52 1894.30,979.36 1899.30,979.19 1904.30,979.02 1909.30,978.86 1914.30,978.69 1919.30,978.52 1924.30,978.35 1929.30,978.18 1934.30,978.01 1939.30,977.84 1944.30,977.67 1949.30,977.50 1954.30,977.32 1959.30,977.15 1964.30,976.97 1969.30,976.79 1974.30,976.61 1979.30,976.42 1984.30,976.24 1989.30,976.05 1994.30,975.86 1999.30,975.67 2004.30,975.48 2009.30,975.28 2014.30,975.08 2019.30,974.88 2024.30,974.68 2029.30,974.47 2034.30,974.26 2039.30,974.05 2044.30,973.84 2049.30,973.63 2054.30,973.41 2059.30,973.19 2064.30,972.97 2069.30,972.75 2074.30,972.53 2079.30,972.30 2084.30,972.08 2089.30,971.85 2094.30,971.61 2099.30,971.38 2104.30,971.15 2109.30,970.91 2114.30,970.67 2119.30,970.43 2124.30,970.19 2129.30,969.94 2134.30,969.69 2139.30,969.45 2144.30,969.20 2149.30,968.94 2154.30,968.69 2159.30,968.44 2164.30,968.18 2169.30,967.91 2174.30,967.65 2179.30,967.37 2184.30,967.10 2189.30,966.82 2194.30,966.53 2199.30,966.25 2204.30,965.95 2209.30,965.66 2214.30,965.37 2219.30,965.07 2224.30,964.77 2229.30,964.47 2234.30,964.17 2239.30,963.86 2244.30,963.56 2249.30,963.25 2254.30,962.95 2259.30,962.64 2264.30,962.34 2269.30,962.04 2274.30,961.73 2279.30,961.43 2284.30,961.13 2289.30,960.84 2294.30,960.54 2299.30,960.25 2304.30,959.96 2309.30,959.67 2314.30,959.39 2319.30,959.10 2324.30,958.82 2329.30,958.54 2334.30,958.26 2339.30,957.98 2344.30,957.70 2349.30,957.42 2354.30,957.14 2359.30,956.86 2364.30,956.58 2369.30,956.31 2374.30,956.03 2379.30,955.75 2384.30,955.47 2389.30,955.20 2394.30,954.92 2399.30,954.64 2404.30,954.36 2409.30,954.09 2414.30,953.81 2419.30,953.53 2424.30,953.25 2429.30,952.97 2434.30,952.69 2439.30,952.41 2444.30,952.12 2449.30,951.84 2454.30,951.56 2459.30,951.28 2464.30,951.01 2469.30,950.73 2474.30,950.47 2479.30,950.20 2484.30,949.93 2489.30,949.66 2494.30,949.39 2499.30,949.11 2504.30,948.83 2509.30,948.54 2514.30,948.25 2519.30,947.95 2524.30,947.64 2529.30,947.32 2534.30,946.99 2539.30,946.65 2544.30,946.29 2549.30,945.91 2554.30,945.50 2559.30,945.08 2564.30,944.65 2569.30,944.20 2574.30,943.73 2579.30,943.27 2584.30,942.79 2589.30,942.31 2594.30,941.83 2599.30,941.35 2604.30,940.88 2609.30,940.41 2614.30,939.95 2619.30,939.51 2624.30,939.07 2629.30,938.66 2634.30,938.26 2639.30,937.88 2644.30,937.51 2649.30,937.14 2654.30,936.77 2659.30,936.40 2664.30,936.02 2669.30,935.62 2674.30,935.21 2679.30,934.80 2684.30,934.38 2689.30,933.95 2694.30,933.51 2699.30,933.06 2704.30,932.61 2709.30,932.15 2714.30,931.67 2719.30,931.19 2724.30,930.68 2729.30,930.15 2734.30,929.60 2739.30,929.07 2744.30,928.56 2749.30,928.05 2754.30,927.55 2759.30,927.07 2764.30,926.55 2769.30,925.98 2774.30,925.45 2779.30,925.09 2784.30,925.01 2786.00,925.05 2786.50,925.08 2787.00,925.10 2787.50,925.13 2788.00,925.16 2788.50,925.19 2789.00,925.23 2789.50,925.27 2790.00,925.31 2790.50,925.36 2791.00,925.41 2791.50,925.47 2792.00,925.53 2792.50,925.59 2793.00,925.65 2793.50,925.73 2794.00,925.80 2794.50,925.94 2795.00,926.20 2795.50,926.55 2796.00,926.98 2796.50,927.46 2797.00,927.97 2797.50,928.49 2798.00,929.00" fill="none" stroke="#111" stroke-width="2.6"/>
<path d="M82.30,1039.50 82.80,1041.92 83.30,1043.02 83.80,1043.76 84.30,1044.33 84.80,1044.78 85.30,1045.13 85.80,1045.41 86.30,1045.63 86.80,1045.84 87.30,1046.03 87.80,1046.21 88.30,1046.37 88.80,1046.52 89.30,1046.66 89.80,1046.79 90.30,1046.92 90.80,1047.03 91.30,1047.13 91.80,1047.23 92.30,1047.33 92.80,1047.42 93.30,1047.51 93.80,1047.59 94.30,1047.68 99.30,1048.41 104.30,1049.04 109.30,1049.84 114.30,1050.70 119.30,1051.60 124.30,1052.53 129.30,1053.38 134.30,1054.15 139.30,1054.91 144.30,1055.66 149.30,1056.40 154.30,1057.13 159.30,1057.85 164.30,1058.57 169.30,1059.27 174.30,1059.96 179.30,1060.65 184.30,1061.32 189.30,1061.99 194.30,1062.64 199.30,1063.29 204.30,1063.93 209.30,1064.56 214.30,1065.19 219.30,1065.81 224.30,1066.42 229.30,1067.02 234.30,1067.61 239.30,1068.19 244.30,1068.75 249.30,1069.30 254.30,1069.82 259.30,1070.33 264.30,1070.82 269.30,1071.30 274.30,1071.76 279.30,1072.20 284.30,1072.64 289.30,1073.07 294.30,1073.50 299.30,1073.93 304.30,1074.37 309.30,1074.81 314.30,1075.26 319.30,1075.72 324.30,1076.20 329.30,1076.69 334.30,1077.18 339.30,1077.68 344.30,1078.18 349.30,1078.67 354.30,1079.16 359.30,1079.63 364.30,1080.10 369.30,1080.54 374.30,1080.97 379.30,1081.39 384.30,1081.81 389.30,1082.23 394.30,1082.64 399.30,1083.04 404.30,1083.45 409.30,1083.84 414.30,1084.24 419.30,1084.63 424.30,1085.01 429.30,1085.40 434.30,1085.77 439.30,1086.15 444.30,1086.52 449.30,1086.88 454.30,1087.25 459.30,1087.61 464.30,1087.96 469.30,1088.31 474.30,1088.66 479.30,1089.01 484.30,1089.35 489.30,1089.69 494.30,1090.02 499.30,1090.35 504.30,1090.68 509.30,1091.00 514.30,1091.31 519.30,1091.61 524.30,1091.91 529.30,1092.21 534.30,1092.50 539.30,1092.79 544.30,1093.08 549.30,1093.37 554.30,1093.66 559.30,1093.96 564.30,1094.25 569.30,1094.54 574.30,1094.83 579.30,1095.12 584.30,1095.40 589.30,1095.69 594.30,1095.98 599.30,1096.28 604.30,1096.58 609.30,1096.90 614.30,1097.22 619.30,1097.57 624.30,1097.94 629.30,1098.33 634.30,1098.73 639.30,1099.14 644.30,1099.53 649.30,1099.90 654.30,1100.25 659.30,1100.56 664.30,1100.84 669.30,1101.12 674.30,1101.39 679.30,1101.65 684.30,1101.90 689.30,1102.15 694.30,1102.39 699.30,1102.63 704.30,1102.86 709.30,1103.09 714.30,1103.31 719.30,1103.53 724.30,1103.74 729.30,1103.95 734.30,1104.16 739.30,1104.36 744.30,1104.56 749.30,1104.76 754.30,1104.96 759.30,1105.15 764.30,1105.34 769.30,1105.53 774.30,1105.72 779.30,1105.90 784.30,1106.09 789.30,1106.27 794.30,1106.46 799.30,1106.65 804.30,1106.83 809.30,1107.02 814.30,1107.21 819.30,1107.39 824.30,1107.58 829.30,1107.77 834.30,1107.96 839.30,1108.15 844.30,1108.34 849.30,1108.52 854.30,1108.71 859.30,1108.90 864.30,1109.08 869.30,1109.26 874.30,1109.44 879.30,1109.62 884.30,1109.79 889.30,1109.97 894.30,1110.14 899.30,1110.30 904.30,1110.47 909.30,1110.63 914.30,1110.78 919.30,1110.94 924.30,1111.08 929.30,1111.23 934.30,1111.37 939.30,1111.50 944.30,1111.63 949.30,1111.75 954.30,1111.87 959.30,1111.98 964.30,1112.09 969.30,1112.20 974.30,1112.30 979.30,1112.41 984.30,1112.51 989.30,1112.61 994.30,1112.71 999.30,1112.81 1004.30,1112.90 1009.30,1113.00 1014.30,1113.09 1019.30,1113.18 1024.30,1113.27 1029.30,1113.36 1034.30,1113.44 1039.30,1113.52 1044.30,1113.60 1049.30,1113.68 1054.30,1113.75 1059.30,1113.83 1064.30,1113.90 1069.30,1113.96 1074.30,1114.03 1079.30,1114.09 1084.30,1114.15 1089.30,1114.21 1094.30,1114.26 1099.30,1114.31 1104.30,1114.36 1109.30,1114.40 1114.30,1114.45 1119.30,1114.49 1124.30,1114.54 1129.30,1114.58 1134.30,1114.62 1139.30,1114.66 1144.30,1114.71 1149.30,1114.75 1154.30,1114.79 1159.30,1114.83 1164.30,1114.87 1169.30,1114.91 1174.30,1114.94 1179.30,1114.98 1184.30,1115.01 1189.30,1115.05 1194.30,1115.08 1199.30,1115.11 1204.30,1115.14 1209.30,1115.16 1214.30,1115.19 1219.30,1115.21 1224.30,1115.23 1229.30,1115.25 1234.30,1115.26 1239.30,1115.28 1244.30,1115.29 1249.30,1115.29 1254.30,1115.30 1259.30,1115.30 1264.30,1115.30 1269.30,1115.30 1274.30,1115.30 1279.30,1115.29 1284.30,1115.29 1289.30,1115.29 1294.30,1115.28 1299.30,1115.28 1304.30,1115.27 1309.30,1115.26 1314.30,1115.25 1319.30,1115.25 1324.30,1115.24 1329.30,1115.23 1334.30,1115.22 1339.30,1115.21 1344.30,1115.20 1349.30,1115.18 1354.30,1115.17 1359.30,1115.16 1364.30,1115.14 1369.30,1115.13 1374.30,1115.11 1379.30,1115.10 1384.30,1115.08 1389.30,1115.07 1394.30,1115.05 1399.30,1115.03 1404.30,1115.02 1409.30,1115.00 1414.30,1114.98 1419.30,1114.94 1424.30,1114.91 1429.30,1114.86 1434.30,1114.81 1439.30,1114.75 1444.30,1114.69 1449.30,1114.62 1454.30,1114.54 1459.30,1114.46 1464.30,1114.38 1469.30,1114.29 1474.30,1114.19 1479.30,1114.10 1484.30,1114.00 1489.30,1113.89 1494.30,1113.79 1499.30,1113.68 1504.30,1113.57 1509.30,1113.46 1514.30,1113.34 1519.30,1113.23 1524.30,1113.11 1529.30,1113.00 1534.30,1112.88 1539.30,1112.77 1544.30,1112.65 1549.30,1112.54 1554.30,1112.43 1559.30,1112.32 1564.30,1112.21 1569.30,1112.09 1574.30,1111.98 1579.30,1111.86 1584.30,1111.75 1589.30,1111.63 1594.30,1111.51 1599.30,1111.38 1604.30,1111.26 1609.30,1111.13 1614.30,1111.00 1619.30,1110.87 1624.30,1110.73 1629.30,1110.60 1634.30,1110.46 1639.30,1110.32 1644.30,1110.17 1649.30,1110.03 1654.30,1109.88 1659.30,1109.73 1664.30,1109.58 1669.30,1109.42 1674.30,1109.26 1679.30,1109.10 1684.30,1108.94 1689.30,1108.77 1694.30,1108.60 1699.30,1108.43 1704.30,1108.26 1709.30,1108.08 1714.30,1107.90 1719.30,1107.71 1724.30,1107.52 1729.30,1107.32 1734.30,1107.12 1739.30,1106.91 1744.30,1106.70 1749.30,1106.48 1754.30,1106.26 1759.30,1106.04 1764.30,1105.80 1769.30,1105.57 1774.30,1105.33 1779.30,1105.09 1784.30,1104.84 1789.30,1104.60 1794.30,1104.34 1799.30,1104.09 1804.30,1103.83 1809.30,1103.57 1814.30,1103.31 1819.30,1103.04 1824.30,1102.77 1829.30,1102.50 1834.30,1102.23 1839.30,1101.95 1844.30,1101.68 1849.30,1101.40 1854.30,1101.12 1859.30,1100.84 1864.30,1100.56 1869.30,1100.27 1874.30,1099.98 1879.30,1099.68 1884.30,1099.38 1889.30,1099.07 1894.30,1098.76 1899.30,1098.45 1904.30,1098.13 1909.30,1097.81 1914.30,1097.49 1919.30,1097.16 1924.30,1096.83 1929.30,1096.49 1934.30,1096.15 1939.30,1095.81 1944.30,1095.47 1949.30,1095.12 1954.30,1094.77 1959.30,1094.42 1964.30,1094.06 1969.30,1093.70 1974.30,1093.34 1979.30,1092.98 1984.30,1092.62 1989.30,1092.25 1994.30,1091.88 1999.30,1091.51 2004.30,1091.14 2009.30,1090.76 2014.30,1090.39 2019.30,1090.01 2024.30,1089.62 2029.30,1089.24 2034.30,1088.85 2039.30,1088.46 2044.30,1088.06 2049.30,1087.66 2054.30,1087.26 2059.30,1086.86 2064.30,1086.45 2069.30,1086.04 2074.30,1085.62 2079.30,1085.20 2084.30,1084.78 2089.30,1084.36 2094.30,1083.93 2099.30,1083.50 2104.30,1083.07 2109.30,1082.63 2114.30,1082.19 2119.30,1081.74 2124.30,1081.30 2129.30,1080.84 2134.30,1080.39 2139.30,1079.93 2144.30,1079.47 2149.30,1079.01 2154.30,1078.54 2159.30,1078.07 2164.30,1077.59 2169.30,1077.12 2174.30,1076.64 2179.30,1076.15 2184.30,1075.67 2189.30,1075.18 2194.30,1074.69 2199.30,1074.20 2204.30,1073.70 2209.30,1073.19 2214.30,1072.69 2219.30,1072.18 2224.30,1071.66 2229.30,1071.14 2234.30,1070.61 2239.30,1070.08 2244.30,1069.54 2249.30,1069.00 2254.30,1068.45 2259.30,1067.89 2264.30,1067.33 2269.30,1066.76 2274.30,1066.19 2279.30,1065.60 2284.30,1065.01 2289.30,1064.41 2294.30,1063.81 2299.30,1063.19 2304.30,1062.57 2309.30,1061.94 2314.30,1061.29 2319.30,1060.64 2324.30,1059.97 2329.30,1059.29 2334.30,1058.60 2339.30,1057.90 2344.30,1057.19 2349.30,1056.47 2354.30,1055.74 2359.30,1054.99 2364.30,1054.24 2369.30,1053.48 2374.30,1052.71 2379.30,1051.93 2384.30,1051.14 2389.30,1050.34 2394.30,1049.53 2399.30,1048.72 2404.30,1047.89 2409.30,1047.06 2414.30,1046.22 2419.30,1045.38 2424.30,1044.52 2429.30,1043.66 2434.30,1042.80 2439.30,1041.92 2444.30,1041.04 2449.30,1040.13 2454.30,1039.20 2459.30,1038.24 2464.30,1037.28 2469.30,1036.29 2474.30,1035.29 2479.30,1034.28 2484.30,1033.26 2489.30,1032.22 2494.30,1031.19 2499.30,1030.14 2504.30,1029.10 2509.30,1028.05 2514.30,1027.00 2519.30,1025.96 2524.30,1024.92 2529.30,1023.88 2534.30,1022.86 2539.30,1021.84 2544.30,1020.83 2549.30,1019.83 2554.30,1018.84 2559.30,1017.85 2564.30,1016.86 2569.30,1015.87 2574.30,1014.87 2579.30,1013.88 2584.30,1012.88 2589.30,1011.88 2594.30,1010.87 2599.30,1009.85 2604.30,1008.82 2609.30,1007.78 2614.30,1006.72 2619.30,1005.65 2624.30,1004.58 2629.30,1003.51 2634.30,1002.44 2639.30,1001.33 2644.30,1000.18 2649.30,998.96 2654.30,997.65 2659.30,996.23 2664.30,994.70 2669.30,993.08 2674.30,991.41 2679.30,989.70 2684.30,987.97 2689.30,986.25 2694.30,984.56 2699.30,982.91 2704.30,981.25 2709.30,979.55 2714.30,977.77 2719.30,975.88 2724.30,973.84 2729.30,971.65 2734.30,969.33 2739.30,966.85 2744.30,964.19 2749.30,961.46 2754.30,958.75 2759.30,955.98 2764.30,953.34 2769.30,950.86 2774.30,948.22 2779.30,945.12 2784.30,941.55 2786.00,940.28 2786.50,939.90 2787.00,939.52 2787.50,939.13 2788.00,938.74 2788.50,938.36 2789.00,937.97 2789.50,937.58 2790.00,937.19 2790.50,936.80 2791.00,936.40 2791.50,936.01 2792.00,935.61 2792.50,935.21 2793.00,934.81 2793.50,934.41 2794.00,934.00 2794.50,933.58 2795.00,933.20 2795.50,932.89 2796.00,932.59 2796.50,932.22 2797.00,931.71 2797.50,931.00 2798.00,929.00" fill="none" stroke="#3a3a3c" stroke-width="2.2"/>
<path d="M101.0,1048.6 L101.0,1036.0 C101.0,1034.6 102.4,1033.4 103.0,1032.6 M127.0,1053.0 L127.0,1036.0 C127.0,1033.8 129.6,1031.9 130.7,1030.5 M171.0,1059.5 L171.0,1039.7 C171.0,1035.2 176.6,1031.3 179.0,1028.4 M233.0,1067.5 L233.0,1041.0 C233.0,1034.8 240.3,1029.3 243.5,1025.4 M309.2,1074.8 L309.2,1045.9 C309.2,1036.8 319.6,1028.9 324.0,1023.2 M399.0,1083.0 L399.0,1054.5 C399.0,1041.3 415.1,1029.8 422.0,1021.6 M500.7,1090.4 L500.7,1048.0 C500.7,1036.5 514.2,1026.4 520.0,1019.2 M614.7,1097.2 L614.7,1057.0 C614.7,1040.6 629.9,1026.3 636.4,1016.0 M742.4,1104.5 L742.4,1054.0 C742.4,1037.7 756.8,1023.5 762.9,1013.4 M880.7,1109.7 L880.7,1047.0 C880.7,1032.5 892.8,1019.9 898.0,1010.8 M1027.0,1113.3 L1027.0,1029.5 C1027.0,1021.0 1037.4,1013.5 1041.8,1008.1 M1178.8,1115.0 L1178.8,1017.0 C1178.8,1012.2 1184.4,1008.1 1186.8,1005.1 M1333.1,1115.2 L1333.1,1000.0 C1333.1,1000.7 1334.1,1001.3 1334.5,1001.8 M1488.7,1113.9 L1488.7,995.0 C1488.7,995.9 1488.9,996.8 1489.0,997.4 M1642.4,1110.2 L1642.4,1003.4 C1642.4,999.3 1638.1,995.6 1636.2,993.0 M1793.0,1104.4 L1793.0,1022.0 C1793.0,1008.8 1782.5,997.3 1778.0,989.1 M1937.5,1095.9 L1937.5,1020.6 C1937.5,1006.1 1926.7,993.4 1922.0,984.3 M2076.3,1085.5 L2076.3,1026.8 C2076.3,1007.8 2059.3,991.2 2052.0,979.4 M2202.8,1073.8 L2202.8,1006.8 C2202.8,993.3 2188.5,981.5 2182.3,973.1 M2319.3,1060.6 L2319.3,1006.8 C2319.3,990.7 2300.2,976.6 2292.0,966.5 M2420.3,1045.2 L2420.3,996.9 C2420.3,982.4 2405.1,969.6 2398.6,960.5 M2524.7,1024.8 L2524.7,981.5 C2524.7,971.1 2501.0,961.9 2490.8,955.4 M2618.8,1005.8 L2618.8,973.0 C2618.8,962.6 2597.9,953.5 2589.0,947.0 M2692.7,985.1 L2692.7,959.6 C2692.7,951.4 2677.1,944.2 2670.4,939.1 M2754.7,958.5 L2754.7,944.7 C2754.7,939.3 2747.2,934.5 2744.0,931.1 " fill="none" stroke="#1e1e20" stroke-width="1.9"/>
</svg>

<!-- status bar -->
<div class="t" style="left:6.5px;top:1775.5px;font-size:22px;line-height:22px;color:#222">Press F1 for help</div>
<div class="cell" style="left:2176px;width:50px"></div>
<div class="cell" style="left:2232px;width:140px"></div>
<div class="cell" style="left:2378px;width:140px"></div>
<div class="cell" style="left:2525px;width:139px"></div>
<div class="cell" style="left:2670px;width:52px"></div>
<div class="cell" style="left:2728px;width:60px"></div>
<div class="cell" style="left:2794px;width:48px"></div>
<div class="t" style="left:2185px;top:1776px;font-size:21px;line-height:21px;color:#222">cm</div>
<div class="t" style="left:2240px;top:1776px;font-size:21px;line-height:21px;color:#222">X: 44.0</div>
<div class="t" style="left:2387px;top:1776px;font-size:21px;line-height:21px;color:#222">Y: 40.3</div>
<div class="t" style="left:2533px;top:1776px;font-size:21px;line-height:21px;color:#222">Z: 0.0</div>
<svg class="ic" style="left:2852px;top:1772px" width="28" height="28" viewBox="0 0 28 28">
  <path d="M6,26 L26,6 M14,26 L26,14 M22,26 L26,22" stroke="#8a8a90" stroke-width="2"/>
</svg>
<svg class="ic" style="left:0;top:1791px" width="9" height="9" viewBox="0 0 9 9"><path d="M0,0 Q0,9 9,9 L0,9 Z" fill="#000"/></svg>
<svg class="ic" style="left:2871px;top:1791px" width="9" height="9" viewBox="0 0 9 9"><path d="M9,0 Q9,9 0,9 L9,9 Z" fill="#000"/></svg>
</body></html>
